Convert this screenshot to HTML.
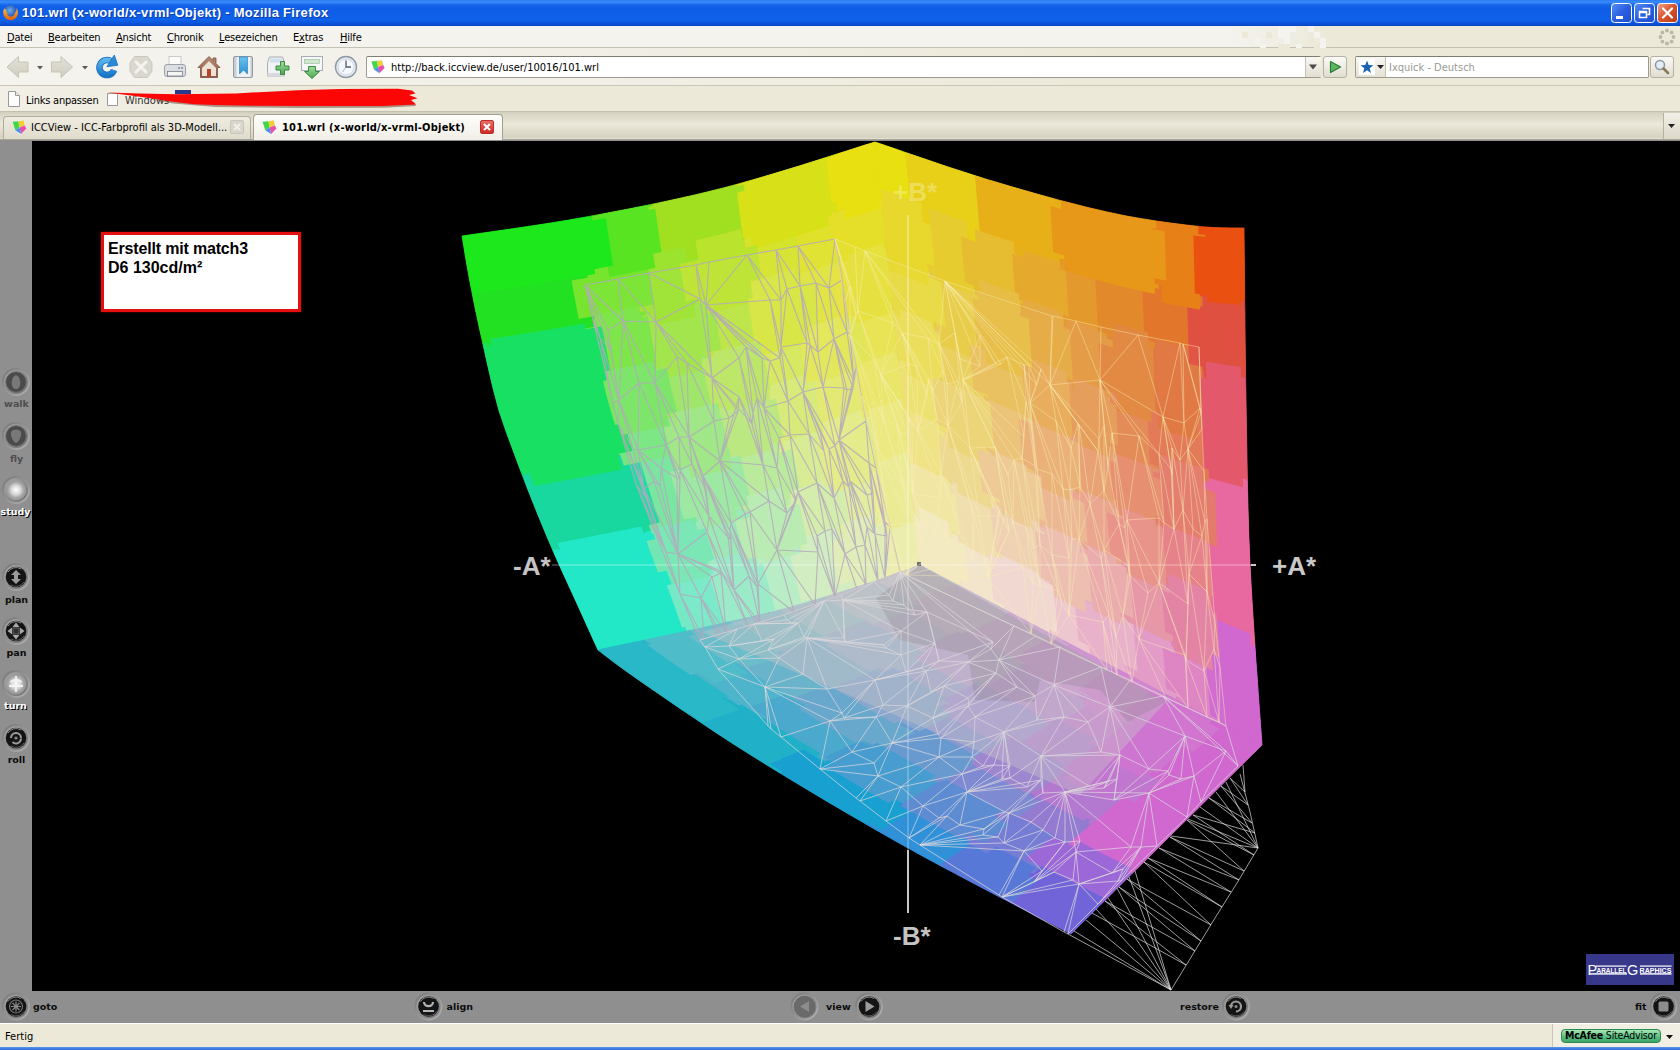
<!DOCTYPE html>
<html lang="de"><head><meta charset="utf-8"><title>101.wrl (x-world/x-vrml-Objekt) - Mozilla Firefox</title>
<style>
html,body{margin:0;padding:0;}
body{width:1680px;height:1050px;overflow:hidden;position:relative;background:#ece9d8;font-family:"DejaVu Sans Condensed","DejaVu Sans","Liberation Sans",sans-serif;font-size:11px;color:#000;}
.abs{position:absolute;}
#titlebar{left:0;top:0;width:1680px;height:26px;background:linear-gradient(#2a7af4 0px,#3a8bf8 2px,#1565ea 5px,#0e5de6 9px,#0f5fe8 16px,#1061ea 20px,#0c55dc 23px,#0845c4 26px);}
#titlebar .ttl{left:22px;top:5px;color:#fff;font-family:"Liberation Sans",sans-serif;font-weight:bold;font-size:13px;letter-spacing:0.3px;white-space:nowrap;text-shadow:1px 1px 0 #0a3aa8;}
#menubar{left:0;top:26px;width:1680px;height:22px;background:linear-gradient(90deg,#f4f3ee 0,#f4f3ee 1225px,#f0eee4 1280px,#ece9d8 1335px);border-bottom:1px solid #c5c2b4;box-sizing:border-box;}
#menubar span{position:absolute;top:5px;white-space:nowrap;letter-spacing:-0.2px;}
#menubar u{text-decoration:underline;}
#navbar{left:0;top:48px;width:1680px;height:38px;background:linear-gradient(90deg,#f4f3ee 0,#f1efe6 600px,#ece9d8 1150px);border-bottom:1px solid #c9c6b8;box-sizing:border-box;}
#bmbar{left:0;top:86px;width:1680px;height:26px;background:linear-gradient(90deg,#f1efe6 0,#ece9d8 430px);border-bottom:1px solid #c4c0b0;box-sizing:border-box;}
#tabbar{left:0;top:112px;width:1680px;height:28px;background:linear-gradient(#d2cebe 0,#dcd8c8 3px,#e4e0d0 8px,#ece9da 12px,#e6e2d2 16px,#dcd8c8 22px,#d6d2c0 26px,#efede2 27px);box-sizing:border-box;}
#content{left:0;top:140px;width:1680px;height:883px;background:#8f8f8f;}
#scene{left:32px;top:141px;width:1648px;height:850px;background:#000;}
#statusbar{left:0;top:1023px;width:1680px;height:24px;background:#ece9d8;border-top:1px solid #fff;box-sizing:border-box;}
#botborder{left:0;top:1047px;width:1680px;height:3px;background:linear-gradient(#5a98ec,#2c66d4);}
</style></head>
<body>
<div id="titlebar" class="abs"><svg class="abs" style="left:2px;top:4px" width="17" height="17" viewBox="0 0 17 17"><defs><radialGradient id="ffg" cx="0.45" cy="0.35" r="0.6"><stop offset="0" stop-color="#6ab0f0"/><stop offset="1" stop-color="#1a3c9c"/></radialGradient><linearGradient id="ffo" x1="0" y1="0" x2="0" y2="1"><stop offset="0" stop-color="#f8c040"/><stop offset="1" stop-color="#e05a10"/></linearGradient></defs><circle cx="8.5" cy="8.5" r="7" fill="url(#ffg)"/><path d="M2 4.500 C0.500 8 1 12.500 4.500 15 C8 17.300 13 16.300 15 12.500 C16.500 9.500 16 6 14.500 4 C14.800 6.500 14 8 12.800 8.800 C13 11 11 13 8.500 12.600 C6 12.300 4.800 10.500 5.500 8.500 C4.500 8 4 7 4.300 5.800 C3.500 5.500 2.800 5.200 2 4.500 Z" fill="url(#ffo)"/></svg><span class="abs ttl">101.wrl (x-world/x-vrml-Objekt) - Mozilla Firefox</span></div>
<div id="menubar" class="abs">
<span style="left:7px"><u>D</u>atei</span><span style="left:48px"><u>B</u>earbeiten</span><span style="left:116px"><u>A</u>nsicht</span><span style="left:167px"><u>C</u>hronik</span><span style="left:219px"><u>L</u>esezeichen</span><span style="left:293px">E<u>x</u>tras</span><span style="left:340px"><u>H</u>ilfe</span>
</div>
<svg class="abs" style="left:1230px;top:26px" width="120" height="22"><rect x="12" y="6" width="6" height="6" fill="#ece9d8"/><rect x="24" y="12" width="6" height="6" fill="#f4f3ee"/><rect x="30" y="18" width="6" height="6" fill="#f4f3ee"/><rect x="36" y="6" width="6" height="6" fill="#ece9d8"/><rect x="48" y="0" width="6" height="6" fill="#f4f3ee"/><rect x="48" y="6" width="6" height="6" fill="#f4f3ee"/><rect x="48" y="18" width="6" height="6" fill="#ece9d8"/><rect x="54" y="0" width="6" height="6" fill="#f4f3ee"/><rect x="54" y="6" width="6" height="6" fill="#f4f3ee"/><rect x="54" y="12" width="6" height="6" fill="#f4f3ee"/><rect x="54" y="18" width="6" height="6" fill="#ece9d8"/><rect x="60" y="0" width="6" height="6" fill="#f4f3ee"/><rect x="66" y="18" width="6" height="6" fill="#f4f3ee"/><rect x="78" y="0" width="6" height="6" fill="#f4f3ee"/><rect x="78" y="12" width="6" height="6" fill="#ece9d8"/><rect x="84" y="6" width="6" height="6" fill="#f4f3ee"/><rect x="84" y="18" width="6" height="6" fill="#ece9d8"/><rect x="90" y="12" width="6" height="6" fill="#f4f3ee"/><rect x="90" y="18" width="6" height="6" fill="#f4f3ee"/></svg>
<div id="navbar" class="abs"></div>
<div id="bmbar" class="abs"></div>
<div id="tabbar" class="abs"></div>
<div id="content" class="abs"></div>
<div id="scene" class="abs"></div>
<div id="statusbar" class="abs"><span class="abs" style="left:5px;top:6px">Fertig</span></div>
<div id="botborder" class="abs"></div>
<svg class="abs" style="left:0;top:0" width="1680" height="1050" viewBox="0 0 1680 1050">
<g stroke-width="0.8" stroke-linejoin="round">
<polygon points="584.0,274.2 592.9,272.5 601.9,270.8 610.8,269.1 619.8,267.4 628.7,265.6 637.7,263.8 639.1,272.3 640.5,280.7 641.9,289.2 643.4,297.6 644.8,306.0 646.3,314.4 637.5,316.2 628.7,318.0 619.9,319.8 611.0,321.5 602.2,323.2 593.4,324.9 591.7,316.4 590.1,308.0 588.5,299.5 587.0,291.1 585.5,282.6" fill="#77e42d" stroke="#77e42d"/>
<polygon points="637.7,263.8 646.6,262.0 655.5,260.2 664.5,258.3 673.4,256.4 682.3,254.5 691.2,252.5 692.4,260.9 693.7,269.3 695.1,277.8 696.4,286.2 697.7,294.6 699.1,303.0 690.3,305.0 681.5,307.0 672.7,308.9 663.9,310.8 655.1,312.6 646.3,314.4 644.8,306.0 643.4,297.6 641.9,289.2 640.5,280.7 639.1,272.3" fill="#9ce32f" stroke="#9ce32f"/>
<polygon points="691.2,252.5 700.0,250.4 708.9,248.3 717.8,246.1 726.6,243.9 735.4,241.6 744.2,239.2 745.4,247.7 746.6,256.1 747.8,264.5 749.0,273.0 750.2,281.4 751.4,289.8 742.8,292.2 734.1,294.5 725.3,296.7 716.6,298.9 707.9,301.0 699.1,303.0 697.7,294.6 696.4,286.2 695.1,277.8 693.7,269.3 692.4,260.9" fill="#bae32d" stroke="#bae32d"/>
<polygon points="744.2,239.2 752.3,237.0 760.4,234.7 768.5,232.3 776.5,229.9 784.6,227.4 792.6,225.0 793.7,233.4 794.8,241.9 795.9,250.3 797.0,258.8 798.1,267.2 799.2,275.6 791.3,278.1 783.3,280.5 775.4,282.9 767.4,285.3 759.4,287.6 751.4,289.8 750.2,281.4 749.0,273.0 747.8,264.5 746.6,256.1 745.4,247.7" fill="#d5e32b" stroke="#d5e32b"/>
<polygon points="792.6,225.0 800.0,222.7 807.4,220.4 814.7,218.1 822.1,215.8 829.4,213.5 836.8,211.1 837.8,219.6 838.8,228.0 839.8,236.5 840.8,245.0 841.8,253.4 842.8,261.9 835.6,264.2 828.3,266.5 821.0,268.8 813.8,271.1 806.5,273.4 799.2,275.6 798.1,267.2 797.0,258.8 795.9,250.3 794.8,241.9 793.7,233.4" fill="#dfe12a" stroke="#dfe12a"/>
<polygon points="836.8,211.1 844.1,208.8 851.5,206.4 858.8,204.0 866.1,201.7 873.5,199.3 880.9,197.0 881.8,205.4 882.7,213.9 883.6,222.4 884.5,230.8 885.4,239.3 886.3,247.8 879.0,250.1 871.8,252.4 864.5,254.8 857.3,257.2 850.0,259.5 842.8,261.9 841.8,253.4 840.8,245.0 839.8,236.5 838.8,228.0 837.8,219.6" fill="#e5df29" stroke="#e5df29"/>
<polygon points="593.4,324.9 602.2,323.2 611.0,321.5 619.9,319.8 628.7,318.0 637.5,316.2 646.3,314.4 647.9,323.6 649.5,332.7 651.2,341.8 652.8,351.0 654.5,360.1 656.3,369.2 647.6,371.0 638.9,372.7 630.3,374.5 621.6,376.2 612.9,378.0 604.2,379.7 602.3,370.6 600.4,361.5 598.6,352.3 596.8,343.2 595.1,334.0" fill="#78e442" stroke="#78e442"/>
<polygon points="646.3,314.4 655.1,312.6 663.9,310.8 672.7,308.9 681.5,307.0 690.3,305.0 699.1,303.0 700.6,312.2 702.0,321.3 703.5,330.4 705.0,339.5 706.5,348.6 708.1,357.7 699.5,359.7 690.9,361.7 682.2,363.6 673.6,365.5 664.9,367.3 656.3,369.2 654.5,360.1 652.8,351.0 651.2,341.8 649.5,332.7 647.9,323.6" fill="#9de444" stroke="#9de444"/>
<polygon points="699.1,303.0 707.9,301.0 716.6,298.9 725.3,296.7 734.1,294.5 742.8,292.2 751.4,289.8 752.8,299.0 754.1,308.1 755.4,317.2 756.8,326.3 758.2,335.4 759.6,344.5 751.1,346.9 742.5,349.2 733.9,351.4 725.4,353.6 716.8,355.7 708.1,357.7 706.5,348.6 705.0,339.5 703.5,330.4 702.0,321.3 700.6,312.2" fill="#bbe542" stroke="#bbe542"/>
<polygon points="751.4,289.8 759.4,287.6 767.4,285.3 775.4,282.9 783.3,280.5 791.3,278.1 799.2,275.6 800.4,284.8 801.6,293.9 802.8,303.1 804.1,312.2 805.3,321.3 806.6,330.4 798.8,332.9 791.0,335.3 783.1,337.7 775.3,340.0 767.5,342.3 759.6,344.5 758.2,335.4 756.8,326.3 755.4,317.2 754.1,308.1 752.8,299.0" fill="#d6e53e" stroke="#d6e53e"/>
<polygon points="799.2,275.6 806.5,273.4 813.8,271.1 821.0,268.8 828.3,266.5 835.6,264.2 842.8,261.9 843.9,271.0 845.0,280.2 846.1,289.3 847.2,298.5 848.3,307.7 849.4,316.8 842.3,319.1 835.2,321.4 828.0,323.7 820.9,326.0 813.7,328.2 806.6,330.4 805.3,321.3 804.1,312.2 802.8,303.1 801.6,293.9 800.4,284.8" fill="#e0e33c" stroke="#e0e33c"/>
<polygon points="842.8,261.9 850.0,259.5 857.3,257.2 864.5,254.8 871.8,252.4 879.0,250.1 886.3,247.8 887.2,256.9 888.2,266.1 889.2,275.2 890.2,284.4 891.1,293.6 892.1,302.7 885.0,305.1 877.9,307.4 870.8,309.8 863.6,312.1 856.5,314.5 849.4,316.8 848.3,307.7 847.2,298.5 846.1,289.3 845.0,280.2 843.9,271.0" fill="#e6e13b" stroke="#e6e13b"/>
<polygon points="604.2,379.7 612.9,378.0 621.6,376.2 630.3,374.5 638.9,372.7 647.6,371.0 656.3,369.2 658.0,377.5 659.9,385.8 661.9,394.1 664.0,402.4 666.2,410.6 668.4,418.8 660.0,420.6 651.6,422.3 643.1,424.1 634.7,425.8 626.3,427.5 617.8,429.2 615.4,421.0 612.9,412.8 610.5,404.6 608.2,396.4 606.1,388.0" fill="#77e562" stroke="#77e562"/>
<polygon points="656.3,369.2 664.9,367.3 673.6,365.5 682.2,363.6 690.9,361.7 699.5,359.7 708.1,357.7 709.7,366.1 711.4,374.5 713.1,382.8 715.0,391.0 716.9,399.3 718.8,407.6 710.4,409.5 702.0,411.4 693.6,413.3 685.2,415.2 676.8,417.0 668.4,418.8 666.2,410.6 664.0,402.4 661.9,394.1 659.9,385.8 658.0,377.5" fill="#9be564" stroke="#9be564"/>
<polygon points="708.1,357.7 716.8,355.7 725.4,353.6 733.9,351.4 742.5,349.2 751.1,346.9 759.6,344.5 761.0,352.9 762.4,361.3 764.0,369.6 765.6,378.0 767.2,386.3 768.8,394.6 760.5,396.9 752.2,399.2 743.9,401.3 735.5,403.5 727.2,405.5 718.8,407.6 716.9,399.3 715.0,391.0 713.1,382.8 711.4,374.5 709.7,366.1" fill="#bae660" stroke="#bae660"/>
<polygon points="759.6,344.5 767.5,342.3 775.3,340.0 783.1,337.7 791.0,335.3 798.8,332.9 806.6,330.4 807.8,338.9 809.0,347.3 810.3,355.6 811.7,364.0 813.1,372.4 814.4,380.7 806.9,383.1 799.3,385.5 791.7,387.8 784.1,390.1 776.4,392.4 768.8,394.6 767.2,386.3 765.6,378.0 764.0,369.6 762.4,361.3 761.0,352.9" fill="#d5e759" stroke="#d5e759"/>
<polygon points="806.6,330.4 813.7,328.2 820.9,326.0 828.0,323.7 835.2,321.4 842.3,319.1 849.4,316.8 850.5,325.3 851.5,333.7 852.7,342.1 853.8,350.6 854.9,359.0 856.1,367.4 849.1,369.7 842.2,371.9 835.3,374.2 828.3,376.4 821.4,378.6 814.4,380.7 813.1,372.4 811.7,364.0 810.3,355.6 809.0,347.3 807.8,338.9" fill="#e1e654" stroke="#e1e654"/>
<polygon points="849.4,316.8 856.5,314.5 863.6,312.1 870.8,309.8 877.9,307.4 885.0,305.1 892.1,302.7 893.0,311.2 893.9,319.7 894.8,328.1 895.7,336.6 896.6,345.0 897.5,353.5 890.6,355.8 883.7,358.1 876.8,360.4 869.9,362.8 863.0,365.1 856.1,367.4 854.9,359.0 853.8,350.6 852.7,342.1 851.5,333.7 850.5,325.3" fill="#e8e450" stroke="#e8e450"/>
<polygon points="617.8,429.2 626.3,427.5 634.7,425.8 643.1,424.1 651.6,422.3 660.0,420.6 668.4,418.8 670.6,427.0 672.7,435.3 675.0,443.5 677.2,451.7 679.4,459.9 681.7,468.0 673.6,469.8 665.4,471.5 657.3,473.2 649.2,474.9 641.0,476.6 632.9,478.3 630.3,470.1 627.7,462.0 625.2,453.8 622.7,445.6 620.3,437.4" fill="#76e57f" stroke="#76e57f"/>
<polygon points="668.4,418.8 676.8,417.0 685.2,415.2 693.6,413.3 702.0,411.4 710.4,409.5 718.8,407.6 720.7,415.8 722.6,424.1 724.5,432.3 726.5,440.6 728.4,448.8 730.4,457.1 722.3,459.0 714.2,460.9 706.1,462.7 698.0,464.5 689.8,466.3 681.7,468.0 679.4,459.9 677.2,451.7 675.0,443.5 672.7,435.3 670.6,427.0" fill="#9ae681" stroke="#9ae681"/>
<polygon points="718.8,407.6 727.2,405.5 735.5,403.5 743.9,401.3 752.2,399.2 760.5,396.9 768.8,394.6 770.4,402.9 772.0,411.2 773.7,419.5 775.3,427.8 777.0,436.1 778.7,444.4 770.7,446.7 762.6,448.9 754.6,451.0 746.5,453.1 738.5,455.1 730.4,457.1 728.4,448.8 726.5,440.6 724.5,432.3 722.6,424.1 720.7,415.8" fill="#b9e77b" stroke="#b9e77b"/>
<polygon points="768.8,394.6 776.4,392.4 784.1,390.1 791.7,387.8 799.3,385.5 806.9,383.1 814.4,380.7 815.8,389.1 817.2,397.5 818.5,405.8 819.9,414.2 821.3,422.5 822.7,430.9 815.4,433.2 808.1,435.5 800.7,437.8 793.4,440.0 786.0,442.2 778.7,444.4 777.0,436.1 775.3,427.8 773.7,419.5 772.0,411.2 770.4,402.9" fill="#d5e973" stroke="#d5e973"/>
<polygon points="814.4,380.7 821.4,378.6 828.3,376.4 835.3,374.2 842.2,371.9 849.1,369.7 856.1,367.4 857.2,375.8 858.3,384.2 859.5,392.7 860.6,401.1 861.8,409.5 862.9,417.9 856.2,420.1 849.6,422.3 842.9,424.5 836.2,426.6 829.4,428.8 822.7,430.9 821.3,422.5 819.9,414.2 818.5,405.8 817.2,397.5 815.8,389.1" fill="#e2e86c" stroke="#e2e86c"/>
<polygon points="856.1,367.4 863.0,365.1 869.9,362.8 876.8,360.4 883.7,358.1 890.6,355.8 897.5,353.5 898.4,362.0 899.3,370.4 900.2,378.9 901.1,387.3 902.0,395.8 902.9,404.3 896.2,406.5 889.6,408.8 882.9,411.1 876.3,413.4 869.6,415.6 862.9,417.9 861.8,409.5 860.6,401.1 859.5,392.7 858.3,384.2 857.2,375.8" fill="#e9e665" stroke="#e9e665"/>
<polygon points="632.9,478.3 641.0,476.6 649.2,474.9 657.3,473.2 665.4,471.5 673.6,469.8 681.7,468.0 684.2,476.9 686.7,485.8 689.2,494.6 691.8,503.4 694.4,512.2 697.0,521.1 689.2,522.7 681.4,524.4 673.6,526.1 665.8,527.7 658.0,529.4 650.2,531.0 647.2,522.2 644.3,513.5 641.4,504.7 638.5,495.9 635.7,487.1" fill="#74e59b" stroke="#74e59b"/>
<polygon points="681.7,468.0 689.8,466.3 698.0,464.5 706.1,462.7 714.2,460.9 722.3,459.0 730.4,457.1 732.6,466.0 734.7,474.9 736.9,483.8 739.1,492.7 741.4,501.5 743.6,510.4 735.9,512.3 728.1,514.1 720.3,515.9 712.6,517.6 704.8,519.3 697.0,521.1 694.4,512.2 691.8,503.4 689.2,494.6 686.7,485.8 684.2,476.9" fill="#98e79d" stroke="#98e79d"/>
<polygon points="730.4,457.1 738.5,455.1 746.5,453.1 754.6,451.0 762.6,448.9 770.7,446.7 778.7,444.4 780.5,453.4 782.3,462.3 784.2,471.3 786.1,480.2 788.0,489.2 789.9,498.1 782.2,500.3 774.5,502.5 766.8,504.5 759.1,506.6 751.4,508.5 743.6,510.4 741.4,501.5 739.1,492.7 736.9,483.8 734.7,474.9 732.6,466.0" fill="#b7e997" stroke="#b7e997"/>
<polygon points="778.7,444.4 786.0,442.2 793.4,440.0 800.7,437.8 808.1,435.5 815.4,433.2 822.7,430.9 824.3,439.9 825.8,449.0 827.3,458.0 828.9,467.0 830.5,476.1 832.0,485.1 825.0,487.3 818.0,489.5 811.0,491.8 804.0,493.9 796.9,496.1 789.9,498.1 788.0,489.2 786.1,480.2 784.2,471.3 782.3,462.3 780.5,453.4" fill="#d5eb8f" stroke="#d5eb8f"/>
<polygon points="822.7,430.9 829.4,428.8 836.2,426.6 842.9,424.5 849.6,422.3 856.2,420.1 862.9,417.9 864.2,427.0 865.4,436.1 866.7,445.2 868.0,454.3 869.2,463.4 870.5,472.5 864.1,474.7 857.7,476.8 851.3,478.9 844.9,481.0 838.5,483.0 832.0,485.1 830.5,476.1 828.9,467.0 827.3,458.0 825.8,449.0 824.3,439.9" fill="#e2ea85" stroke="#e2ea85"/>
<polygon points="862.9,417.9 869.6,415.6 876.3,413.4 882.9,411.1 889.6,408.8 896.2,406.5 902.9,404.3 903.9,413.4 904.8,422.6 905.8,431.8 906.8,440.9 907.8,450.1 908.8,459.3 902.4,461.4 896.0,463.7 889.6,465.9 883.3,468.1 876.9,470.3 870.5,472.5 869.2,463.4 868.0,454.3 866.7,445.2 865.4,436.1 864.2,427.0" fill="#ebe97b" stroke="#ebe97b"/>
<polygon points="650.2,531.0 658.0,529.4 665.8,527.7 673.6,526.1 681.4,524.4 689.2,522.7 697.0,521.1 699.4,529.2 701.9,537.3 704.5,545.3 707.0,553.4 709.6,561.5 712.1,569.5 704.7,571.2 697.2,572.8 689.8,574.4 682.3,576.0 674.9,577.6 667.5,579.1 664.6,571.1 661.6,563.1 658.7,555.1 655.8,547.1 653.0,539.1" fill="#74e6b3" stroke="#74e6b3"/>
<polygon points="697.0,521.1 704.8,519.3 712.6,517.6 720.3,515.9 728.1,514.1 735.9,512.3 743.6,510.4 745.7,518.6 747.9,526.8 750.1,534.9 752.3,543.0 754.4,551.2 756.6,559.3 749.2,561.1 741.8,562.9 734.4,564.6 727.0,566.2 719.5,567.9 712.1,569.5 709.6,561.5 707.0,553.4 704.5,545.3 701.9,537.3 699.4,529.2" fill="#97e8b4" stroke="#97e8b4"/>
<polygon points="743.6,510.4 751.4,508.5 759.1,506.6 766.8,504.5 774.5,502.5 782.2,500.3 789.9,498.1 791.6,506.4 793.4,514.6 795.3,522.9 797.1,531.1 798.9,539.3 800.7,547.5 793.4,549.6 786.1,551.7 778.8,553.7 771.4,555.6 764.0,557.5 756.6,559.3 754.4,551.2 752.3,543.0 750.1,534.9 747.9,526.8 745.7,518.6" fill="#b6eaaf" stroke="#b6eaaf"/>
<polygon points="789.9,498.1 796.9,496.1 804.0,493.9 811.0,491.8 818.0,489.5 825.0,487.3 832.0,485.1 833.5,493.4 835.0,501.7 836.5,510.0 838.0,518.3 839.5,526.6 841.0,535.0 834.3,537.1 827.6,539.2 820.9,541.4 814.2,543.5 807.5,545.5 800.7,547.5 798.9,539.3 797.1,531.1 795.3,522.9 793.4,514.6 791.6,506.4" fill="#d3eca8" stroke="#d3eca8"/>
<polygon points="832.0,485.1 838.5,483.0 844.9,481.0 851.3,478.9 857.7,476.8 864.1,474.7 870.5,472.5 871.7,480.9 872.9,489.3 874.1,497.7 875.3,506.1 876.5,514.5 877.7,522.9 871.6,525.0 865.5,527.0 859.4,529.1 853.3,531.0 847.1,533.0 841.0,535.0 839.5,526.6 838.0,518.3 836.5,510.0 835.0,501.7 833.5,493.4" fill="#e2ec9e" stroke="#e2ec9e"/>
<polygon points="870.5,472.5 876.9,470.3 883.3,468.1 889.6,465.9 896.0,463.7 902.4,461.4 908.8,459.3 909.7,467.7 910.5,476.2 911.5,484.6 912.4,493.1 913.2,501.6 914.1,510.0 908.1,512.1 902.0,514.3 895.9,516.5 889.9,518.6 883.8,520.8 877.7,522.9 876.5,514.5 875.3,506.1 874.1,497.7 872.9,489.3 871.7,480.9" fill="#eceb92" stroke="#eceb92"/>
<polygon points="667.5,579.1 674.9,577.6 682.3,576.0 689.8,574.4 697.2,572.8 704.7,571.2 712.1,569.5 714.8,578.3 717.6,587.1 720.3,595.8 723.0,604.6 725.7,613.3 728.4,622.1 721.4,623.7 714.3,625.2 707.3,626.7 700.2,628.3 693.1,629.8 686.1,631.3 683.0,622.6 679.9,613.9 676.8,605.2 673.7,596.5 670.6,587.8" fill="#75e8c6" stroke="#75e8c6"/>
<polygon points="712.1,569.5 719.5,567.9 727.0,566.2 734.4,564.6 741.8,562.9 749.2,561.1 756.6,559.3 759.0,568.2 761.3,577.0 763.7,585.8 766.0,594.7 768.3,603.5 770.7,612.3 763.7,614.0 756.6,615.7 749.6,617.3 742.5,618.9 735.5,620.5 728.4,622.1 725.7,613.3 723.0,604.6 720.3,595.8 717.6,587.1 714.8,578.3" fill="#97eac6" stroke="#97eac6"/>
<polygon points="756.6,559.3 764.0,557.5 771.4,555.6 778.8,553.7 786.1,551.7 793.4,549.6 800.7,547.5 802.7,556.4 804.7,565.4 806.6,574.3 808.6,583.2 810.6,592.1 812.5,601.0 805.6,603.1 798.6,605.0 791.7,606.9 784.7,608.8 777.7,610.6 770.7,612.3 768.3,603.5 766.0,594.7 763.7,585.8 761.3,577.0 759.0,568.2" fill="#b5ecc3" stroke="#b5ecc3"/>
<polygon points="800.7,547.5 807.5,545.5 814.2,543.5 820.9,541.4 827.6,539.2 834.3,537.1 841.0,535.0 842.6,544.0 844.2,553.0 845.8,562.0 847.5,571.0 849.1,580.0 850.7,589.0 844.3,591.0 838.0,593.1 831.6,595.1 825.3,597.1 818.9,599.1 812.5,601.0 810.6,592.1 808.6,583.2 806.6,574.3 804.7,565.4 802.7,556.4" fill="#d0edbe" stroke="#d0edbe"/>
<polygon points="841.0,535.0 847.1,533.0 853.3,531.0 859.4,529.1 865.5,527.0 871.6,525.0 877.7,522.9 879.0,532.0 880.3,541.1 881.6,550.2 882.9,559.3 884.2,568.4 885.5,577.5 879.7,579.5 873.9,581.4 868.1,583.4 862.3,585.3 856.5,587.1 850.7,589.0 849.1,580.0 847.5,571.0 845.8,562.0 844.2,553.0 842.6,544.0" fill="#dfedb5" stroke="#dfedb5"/>
<polygon points="877.7,522.9 883.8,520.8 889.9,518.6 895.9,516.5 902.0,514.3 908.1,512.1 914.1,510.0 915.1,519.2 916.1,528.3 917.1,537.5 918.0,546.7 919.0,555.8 920.0,565.0 914.2,567.1 908.5,569.2 902.8,571.3 897.0,573.4 891.3,575.4 885.5,577.5 884.2,568.4 882.9,559.3 881.6,550.2 880.3,541.1 879.0,532.0" fill="#ebedab" stroke="#ebedab"/>
<polygon points="471.9,292.0 490.6,289.2 509.3,286.3 528.0,283.5 546.7,280.5 565.3,277.4 584.0,274.2 585.5,282.6 587.0,291.1 588.5,299.5 590.1,308.0 591.7,316.4 593.4,324.9 575.0,328.2 556.6,331.4 538.1,334.5 519.7,337.5 501.2,340.4 482.8,343.4 480.9,334.9 479.0,326.3 477.2,317.8 475.3,309.2 473.6,300.6" fill="#22e022" stroke="#22e022"/>
<polygon points="482.8,343.4 501.2,340.4 519.7,337.5 538.1,334.5 556.6,331.4 575.0,328.2 593.4,324.9 597.6,347.0 602.0,369.2 606.9,391.2 612.9,412.8 619.3,434.3 625.8,455.8 608.6,459.2 591.4,462.5 574.1,465.7 556.9,468.9 539.6,472.1 522.4,475.3 514.3,453.8 506.3,432.2 498.9,410.5 493.0,388.3 487.8,365.9" fill="#18e062" stroke="#18e062"/>
<polygon points="522.4,475.3 539.6,472.1 556.9,468.9 574.1,465.7 591.4,462.5 608.6,459.2 625.8,455.8 629.8,468.4 633.7,481.0 637.8,493.5 641.8,506.0 646.0,518.5 650.2,531.0 634.0,534.3 617.8,537.6 601.5,540.8 585.3,543.9 569.0,547.1 552.8,550.3 547.5,537.9 542.3,525.4 537.2,513.0 532.2,500.4 527.2,487.9" fill="#18d8a0" stroke="#18d8a0"/>
<polygon points="552.8,550.3 569.0,547.1 585.3,543.9 601.5,540.8 617.8,537.6 634.0,534.3 650.2,531.0 656.1,547.8 662.1,564.4 668.2,581.1 674.1,597.9 680.1,614.6 686.1,631.3 671.4,634.4 656.7,637.5 642.0,640.7 627.4,643.8 612.7,646.9 598.0,650.0 590.5,633.4 583.0,616.8 575.4,600.1 567.8,583.6 560.2,567.0" fill="#22e8c8" stroke="#22e8c8"/>
<polygon points="462.0,236.0 483.7,232.9 505.4,229.8 527.1,226.6 548.8,223.3 570.4,219.8 592.0,215.9 593.4,225.1 594.7,234.3 596.1,243.5 597.5,252.7 599.0,261.9 600.5,271.1 579.1,275.0 557.7,278.7 536.3,282.1 514.8,285.5 493.3,288.7 471.9,292.0 470.1,282.7 468.4,273.4 466.7,264.1 465.1,254.7 463.6,245.4" fill="#1ce81c" stroke="#1ce81c"/>
<polygon points="592.0,215.9 602.1,214.0 612.1,212.1 622.2,210.2 632.3,208.2 642.3,206.2 652.4,204.2 653.7,213.3 655.0,222.5 656.3,231.7 657.6,240.9 658.9,250.0 660.3,259.2 650.4,261.3 640.4,263.3 630.5,265.3 620.5,267.2 610.5,269.2 600.5,271.1 599.0,261.9 597.5,252.7 596.1,243.5 594.7,234.3 593.4,225.1" fill="#58e420" stroke="#58e420"/>
<polygon points="652.4,204.2 666.6,201.2 680.7,198.1 694.9,194.9 709.0,191.5 723.1,188.0 737.1,184.3 738.2,193.5 739.4,202.6 740.6,211.8 741.8,220.9 743.0,230.1 744.2,239.2 730.3,243.0 716.4,246.5 702.4,249.8 688.4,253.1 674.4,256.2 660.3,259.2 658.9,250.0 657.6,240.9 656.3,231.7 655.0,222.5 653.7,213.3" fill="#a0e020" stroke="#a0e020"/>
<polygon points="737.1,184.3 752.7,179.9 768.3,175.3 783.9,170.6 799.5,165.9 815.0,161.0 830.5,156.1 831.5,165.3 832.6,174.4 833.6,183.6 834.7,192.8 835.7,201.9 836.8,211.1 821.4,216.0 806.0,220.8 790.6,225.6 775.2,230.3 759.7,234.8 744.2,239.2 743.0,230.1 741.8,220.9 740.6,211.8 739.4,202.6 738.2,193.5" fill="#d8e018" stroke="#d8e018"/>
<polygon points="830.5,156.1 837.9,153.7 845.3,151.4 852.7,149.0 860.2,146.6 867.6,144.3 875.0,142.0 876.0,151.2 877.0,160.3 877.9,169.5 878.9,178.7 879.9,187.8 880.9,197.0 873.5,199.3 866.1,201.7 858.8,204.0 851.5,206.4 844.1,208.8 836.8,211.1 835.7,201.9 834.7,192.8 833.6,183.6 832.6,174.4 831.5,165.3" fill="#e8e010" stroke="#e8e010"/>
<polygon points="614.3,439.5 629.4,436.4 644.4,433.3 659.5,430.2 674.6,427.0 676.6,434.9 678.7,442.7 680.8,450.5 682.9,458.3 668.2,461.4 653.5,464.5 638.7,467.6 623.9,470.6 621.5,462.8 619.1,455.0 616.6,447.2" fill="#76e57f"/>
<polygon points="623.7,423.2 633.1,421.3 642.4,419.4 651.8,417.5 661.1,415.5 665.0,429.8 668.8,444.1 672.8,458.4 676.8,472.6 667.8,474.5 658.8,476.4 649.8,478.3 640.8,480.1 636.4,466.0 632.1,451.7 627.9,437.5" fill="#76e57f"/>
<polygon points="789.5,233.4 801.8,229.6 814.1,225.7 826.3,221.8 838.6,217.9 839.8,227.9 841.0,237.9 842.1,247.9 843.3,257.8 831.2,261.7 819.0,265.6 806.9,269.4 794.7,273.2 793.4,263.2 792.1,253.3 790.8,243.3" fill="#dfe12a"/>
<polygon points="798.4,208.4 806.7,205.8 815.1,203.2 823.4,200.6 831.7,197.9 834.0,217.3 836.3,236.8 838.6,256.2 841.0,275.6 832.8,278.2 824.6,280.8 816.4,283.4 808.2,285.9 805.7,266.6 803.2,247.2 800.8,227.8" fill="#dfe12a"/>
<polygon points="850.5,325.3 861.1,321.8 871.7,318.2 882.4,314.7 893.0,311.2 894.0,320.7 895.0,330.2 896.0,339.6 897.0,349.1 886.6,352.6 876.3,356.1 865.9,359.6 855.5,363.0 854.2,353.6 852.9,344.2 851.7,334.7" fill="#e8e450"/>
<polygon points="857.7,313.0 865.4,310.4 873.1,307.9 880.8,305.3 888.6,302.7 890.2,318.1 891.9,333.4 893.6,348.7 895.2,364.0 887.8,366.5 880.3,369.0 872.9,371.5 865.4,374.0 863.4,358.8 861.5,343.5 859.5,328.3" fill="#e8e450"/>
<polygon points="748.9,348.3 764.4,344.0 779.8,339.5 795.1,334.9 810.4,330.1 812.1,341.8 813.8,353.4 815.7,365.0 817.5,376.5 802.6,381.2 787.7,385.8 772.7,390.2 757.7,394.5 755.4,383.0 753.1,371.5 750.9,359.9" fill="#d5e759"/>
<polygon points="767.7,340.4 775.7,338.1 783.8,335.6 791.8,333.2 799.8,330.7 801.9,344.7 804.1,358.6 806.4,372.5 808.7,386.3 800.9,388.8 793.2,391.2 785.4,393.5 777.6,395.8 775.0,382.0 772.4,368.2 769.9,354.4" fill="#d5e759"/>
<polygon points="757.3,566.8 768.8,563.9 780.3,560.9 791.7,557.8 803.0,554.5 805.5,565.7 807.9,576.9 810.4,588.0 812.8,599.2 802.0,602.4 791.0,605.4 780.1,608.3 769.1,611.0 766.2,600.0 763.2,588.9 760.3,577.8" fill="#b5ecc3"/>
<polygon points="760.1,555.6 769.3,553.2 778.5,550.8 787.7,548.3 796.8,545.7 800.0,559.8 803.1,573.8 806.2,587.9 809.4,602.0 800.7,604.4 792.1,606.8 783.4,609.1 774.7,611.4 771.0,597.4 767.4,583.5 763.7,569.5" fill="#b5ecc3"/>
<polygon points="695.6,522.5 709.8,519.4 723.9,516.2 737.9,512.9 752.0,509.5 754.8,520.5 757.6,531.6 760.5,542.6 763.4,553.6 749.9,556.9 736.4,560.1 722.9,563.2 709.3,566.2 705.9,555.2 702.4,544.3 699.0,533.4" fill="#97e8b4"/>
<polygon points="694.6,506.8 705.4,504.4 716.3,502.0 727.1,499.5 737.9,496.9 742.7,515.6 747.7,534.2 752.7,552.8 757.7,571.4 747.6,573.8 737.5,576.1 727.4,578.4 717.3,580.6 711.5,562.2 705.7,543.8 700.1,525.3" fill="#97e8b4"/>
<polygon points="648.2,207.0 673.8,201.6 699.4,195.9 724.8,189.6 750.1,182.7 751.6,195.0 753.1,207.4 754.7,219.7 756.3,232.0 731.3,238.9 706.1,245.2 680.8,251.0 655.4,256.4 653.5,244.1 651.7,231.8 650.0,219.4" fill="#a0e020"/>
<polygon points="660.2,202.5 678.0,198.7 695.9,194.7 713.6,190.4 731.3,185.9 733.5,203.3 735.8,220.7 738.1,238.1 740.6,255.5 723.1,260.0 705.6,264.3 688.0,268.4 670.4,272.2 667.7,254.9 665.1,237.4 662.6,220.0" fill="#a0e020"/>
<polygon points="797.2,283.7 809.7,279.8 822.3,275.9 834.8,271.9 847.2,267.9 848.6,279.1 849.9,290.3 851.2,301.4 852.6,312.6 840.3,316.6 827.9,320.6 815.6,324.5 803.2,328.3 801.7,317.2 800.2,306.0 798.7,294.9" fill="#e0e33c"/>
<polygon points="801.6,273.5 811.7,270.4 821.8,267.2 831.9,264.0 842.0,260.7 843.9,277.0 845.9,293.2 847.9,309.5 849.9,325.7 840.0,328.9 830.1,332.1 820.2,335.2 810.3,338.3 808.1,322.1 805.9,305.9 803.8,289.7" fill="#e0e33c"/>
<polygon points="696.2,307.3 712.3,303.5 728.4,299.5 744.4,295.3 760.4,290.9 762.1,302.7 763.8,314.4 765.5,326.2 767.3,338.0 751.5,342.4 735.7,346.6 719.9,350.6 704.0,354.4 702.0,342.6 700.0,330.8 698.1,319.1" fill="#bbe542"/>
<polygon points="706.3,292.5 716.2,290.1 726.1,287.7 736.1,285.1 745.9,282.5 748.7,301.5 751.5,320.5 754.4,339.6 757.6,358.5 747.9,361.1 738.3,363.7 728.6,366.1 718.9,368.5 715.5,349.6 712.3,330.6 709.3,311.6" fill="#bbe542"/>
<polygon points="742.8,248.4 756.1,244.7 769.4,240.8 782.7,236.8 795.9,232.7 797.0,241.4 798.1,250.1 799.2,258.7 800.4,267.4 787.3,271.4 774.1,275.4 761.0,279.2 747.8,283.0 746.5,274.3 745.2,265.7 744.0,257.0" fill="#d5e32b"/>
<polygon points="745.0,227.6 756.2,224.5 767.3,221.2 778.5,217.9 789.6,214.5 792.0,233.4 794.4,252.3 796.9,271.2 799.4,290.1 788.5,293.5 777.6,296.8 766.6,300.0 755.7,303.2 752.9,284.3 750.2,265.4 747.5,246.5" fill="#d5e32b"/>
<polygon points="831.0,493.9 844.1,489.8 857.2,485.5 870.2,481.2 883.2,476.7 884.4,485.9 885.6,495.1 886.9,504.3 888.1,513.4 875.5,517.8 863.0,522.1 850.3,526.1 837.7,530.2 836.0,521.1 834.3,512.1 832.7,503.0" fill="#e2ec9e"/>
<polygon points="835.2,483.5 843.8,480.7 852.5,478.0 861.1,475.1 869.6,472.2 872.0,488.5 874.3,504.8 876.7,521.1 879.0,537.4 870.9,540.1 862.8,542.8 854.7,545.5 846.6,548.1 843.7,531.9 840.9,515.8 838.0,499.6" fill="#e2ec9e"/>
<polygon points="653.4,372.2 669.7,368.8 686.0,365.3 702.2,361.6 718.4,357.8 720.3,367.8 722.3,377.8 724.5,387.8 726.7,397.7 710.9,401.5 695.0,405.2 679.1,408.6 663.2,412.0 660.5,402.2 657.9,392.3 655.6,382.3" fill="#9be564"/>
<polygon points="661.0,365.5 672.0,363.1 683.1,360.7 694.1,358.3 705.1,355.7 708.1,371.6 711.5,387.3 715.1,403.0 718.7,418.6 708.1,421.1 697.5,423.5 686.9,425.8 676.2,428.2 672.2,412.6 668.1,397.0 664.3,381.3" fill="#9be564"/>
<polygon points="633.5,483.5 646.7,480.8 659.9,478.0 673.0,475.2 686.1,472.4 689.0,482.5 691.8,492.6 694.7,502.7 697.6,512.8 684.9,515.6 672.2,518.3 659.5,521.0 646.8,523.6 643.4,513.6 640.1,503.6 636.8,493.5" fill="#74e59b"/>
<polygon points="633.9,464.1 644.3,461.9 654.8,459.7 665.3,457.5 675.7,455.3 680.6,472.7 685.5,490.0 690.5,507.2 695.7,524.4 685.8,526.6 675.9,528.7 666.0,530.8 656.1,532.9 650.3,515.8 644.7,498.6 639.2,481.3" fill="#74e59b"/>
<polygon points="769.4,398.7 781.7,395.1 794.1,391.4 806.4,387.6 818.7,383.7 820.5,395.1 822.4,406.5 824.2,417.9 826.1,429.2 814.2,433.0 802.3,436.7 790.3,440.4 778.3,443.9 776.1,432.6 773.8,421.3 771.6,410.0" fill="#d5e973"/>
<polygon points="768.7,385.8 779.0,382.8 789.4,379.7 799.7,376.5 810.0,373.3 812.5,388.4 815.0,403.5 817.5,418.7 820.1,433.8 810.2,436.9 800.3,439.9 790.4,443.0 780.5,445.9 777.5,430.9 774.5,415.9 771.6,400.8" fill="#d5e973"/>
<polygon points="525.8,484.1 554.5,478.8 583.2,473.4 611.8,467.9 640.5,462.2 645.1,477.4 649.9,492.6 654.7,507.7 659.6,522.8 632.3,528.4 605.0,533.8 577.6,539.2 550.3,544.5 544.0,529.5 537.8,514.4 531.7,499.3" fill="#18d8a0"/>
<polygon points="527.4,472.2 550.7,467.9 573.9,463.6 597.1,459.3 620.3,454.8 626.4,474.3 632.7,493.7 639.2,513.1 645.8,532.4 624.0,536.9 602.1,541.2 580.3,545.4 558.5,549.7 550.4,530.5 542.6,511.1 534.9,491.7" fill="#18d8a0"/>
<polygon points="815.2,387.3 828.7,383.0 842.2,378.7 855.6,374.3 869.0,369.9 870.1,378.7 871.2,387.4 872.3,396.2 873.4,405.0 860.4,409.4 847.3,413.8 834.2,418.0 821.0,422.1 819.6,413.4 818.1,404.7 816.7,396.0" fill="#e2e86c"/>
<polygon points="813.5,373.6 822.6,370.7 831.7,367.9 840.7,365.0 849.8,362.0 852.2,379.1 854.5,396.2 856.9,413.3 859.4,430.4 850.7,433.3 842.1,436.1 833.4,438.8 824.7,441.6 821.9,424.6 819.0,407.6 816.2,390.6" fill="#e2e86c"/>
<polygon points="641.9,316.1 659.8,312.4 677.7,308.6 695.6,304.6 713.4,300.4 715.3,312.6 717.3,324.9 719.2,337.1 721.3,349.3 703.7,353.5 686.1,357.5 668.4,361.3 650.8,365.1 648.5,352.8 646.2,340.6 644.0,328.3" fill="#9de444"/>
<polygon points="651.0,302.2 660.6,300.2 670.2,298.1 679.7,296.1 689.3,293.9 692.4,313.0 695.5,332.0 698.7,351.0 702.2,369.9 692.9,372.1 683.6,374.1 674.2,376.2 664.9,378.2 661.1,359.2 657.7,340.2 654.3,321.2" fill="#9de444"/>
<polygon points="554.2,553.4 581.3,548.1 608.5,542.7 635.7,537.3 662.8,531.7 670.7,554.5 678.7,577.3 686.6,600.2 694.5,623.0 669.7,628.3 644.9,633.5 620.1,638.7 595.3,644.0 585.0,621.3 574.8,598.7 564.4,576.1" fill="#22e8c8"/>
<polygon points="557.5,543.0 578.4,538.9 599.4,534.8 620.3,530.7 641.2,526.5 650.7,553.1 660.5,579.6 670.2,606.1 679.8,632.6 661.0,636.6 642.1,640.6 623.3,644.6 604.5,648.6 592.7,622.2 580.9,595.8 569.0,569.5" fill="#22e8c8"/>
<polygon points="768.6,453.2 784.3,448.8 799.9,444.1 815.5,439.2 831.1,434.3 832.9,445.6 834.8,456.8 836.6,468.1 838.5,479.3 823.5,484.1 808.5,488.8 793.4,493.4 778.3,497.7 775.9,486.6 773.4,475.5 771.0,464.4" fill="#d5eb8f"/>
<polygon points="783.2,441.8 791.8,439.3 800.4,436.6 809.0,434.0 817.6,431.3 820.4,447.4 823.3,463.6 826.1,479.8 829.0,495.9 820.9,498.5 812.7,501.1 804.5,503.6 796.3,506.1 793.0,490.1 789.7,474.0 786.4,457.9" fill="#d5eb8f"/>
<polygon points="624.4,273.5 644.5,269.4 664.7,265.3 684.8,260.9 704.8,256.3 706.4,266.3 707.9,276.4 709.5,286.4 711.1,296.5 691.2,301.1 671.3,305.5 651.4,309.7 631.4,313.7 629.6,303.7 627.8,293.6 626.1,283.5" fill="#9ce32f"/>
<polygon points="643.3,255.9 653.7,253.8 664.1,251.6 674.6,249.4 684.9,247.1 687.6,264.5 690.3,281.9 693.1,299.3 695.9,316.7 685.7,319.0 675.5,321.2 665.3,323.4 655.1,325.5 652.0,308.1 649.0,290.8 646.1,273.4" fill="#9ce32f"/>
<polygon points="471.9,292.3 502.7,287.6 533.5,282.9 564.3,277.9 594.9,272.4 596.9,283.6 598.9,294.9 601.0,306.1 603.1,317.3 572.8,322.8 542.4,328.0 512.0,332.9 481.5,337.8 479.0,326.4 476.6,315.1 474.2,303.7" fill="#22e022"/>
<polygon points="474.2,280.8 500.7,276.8 527.2,272.8 553.7,268.6 580.1,264.1 583.1,281.3 586.2,298.4 589.4,315.5 592.7,332.7 566.8,337.3 540.8,341.7 514.8,346.0 488.8,350.2 485.0,332.9 481.2,315.5 477.6,298.2" fill="#22e022"/>
<polygon points="798.5,335.4 814.5,330.5 830.4,325.4 846.4,320.3 862.3,315.1 863.7,327.1 865.2,339.2 866.7,351.2 868.3,363.2 852.8,368.4 837.3,373.4 821.8,378.3 806.2,383.2 804.2,371.3 802.2,359.4 800.3,347.4" fill="#e1e654"/>
<polygon points="808.7,326.6 817.4,323.9 826.0,321.2 834.6,318.5 843.2,315.7 845.0,329.7 846.9,343.8 848.8,357.8 850.8,371.8 842.4,374.5 834.1,377.2 825.7,379.8 817.3,382.5 815.1,368.5 812.9,354.6 810.7,340.6" fill="#e1e654"/>
<polygon points="571.5,280.6 590.6,277.2 609.8,273.5 628.8,269.8 647.9,266.0 649.5,275.6 651.1,285.1 652.7,294.7 654.3,304.2 635.5,308.1 616.6,311.8 597.7,315.5 578.7,319.0 576.9,309.4 575.0,299.8 573.2,290.2" fill="#77e42d"/>
<polygon points="586.4,270.7 597.6,268.6 608.8,266.4 620.0,264.3 631.2,262.1 633.6,277.1 636.2,292.1 638.8,307.1 641.5,322.1 630.5,324.3 619.5,326.4 608.5,328.6 597.5,330.7 594.6,315.7 591.8,300.7 589.1,285.7" fill="#77e42d"/>
<polygon points="721.8,467.5 739.5,463.3 757.1,458.8 774.6,454.0 792.1,448.9 794.2,459.5 796.3,470.1 798.4,480.7 800.5,491.3 783.6,496.2 766.7,500.9 749.6,505.3 732.6,509.4 729.8,498.9 727.1,488.5 724.4,478.0" fill="#b7e997"/>
<polygon points="734.7,453.9 745.0,451.4 755.3,448.7 765.5,446.0 775.7,443.1 778.9,458.9 782.2,474.6 785.6,490.4 789.0,506.1 779.3,508.8 769.5,511.4 759.8,514.0 750.0,516.4 746.1,500.9 742.2,485.2 738.5,469.6" fill="#b7e997"/>
<polygon points="780.9,507.6 796.6,503.0 812.3,498.2 828.0,493.3 843.6,488.3 845.1,497.0 846.5,505.7 848.0,514.4 849.5,523.1 834.4,527.9 819.2,532.7 804.1,537.4 788.8,541.8 786.8,533.2 784.8,524.7 782.8,516.1" fill="#d3eca8"/>
<polygon points="790.6,491.0 800.4,488.0 810.1,485.0 819.9,482.0 829.6,478.9 832.2,494.0 835.0,509.2 837.7,524.3 840.5,539.4 831.3,542.3 822.1,545.2 812.9,548.1 803.7,550.9 800.4,535.9 797.1,521.0 793.8,506.0" fill="#d3eca8"/>
<polygon points="666.9,585.2 679.9,582.4 692.8,579.7 705.8,576.9 718.8,574.0 722.1,584.7 725.3,595.3 728.6,606.0 731.8,616.6 719.4,619.4 707.0,622.1 694.5,624.8 682.0,627.5 678.3,616.9 674.5,606.3 670.7,595.8" fill="#75e8c6"/>
<polygon points="664.9,564.8 674.0,562.9 683.1,560.9 692.2,559.0 701.3,557.0 706.6,573.6 711.9,590.2 717.2,606.8 722.4,623.4 713.9,625.3 705.4,627.1 696.9,629.0 688.3,630.8 682.5,614.3 676.6,597.8 670.8,581.3" fill="#75e8c6"/>
<polygon points="737.0,192.7 760.9,186.0 784.6,178.9 808.3,171.5 831.9,164.1 833.2,175.7 834.5,187.3 835.8,199.0 837.2,210.6 813.8,218.0 790.3,225.3 766.7,232.4 743.1,239.1 741.5,227.6 740.0,215.9 738.5,204.3" fill="#d8e018"/>
<polygon points="743.5,182.5 764.0,176.6 784.5,170.5 805.0,164.1 825.4,157.7 827.3,174.4 829.2,191.1 831.2,207.8 833.2,224.5 813.0,230.9 792.7,237.2 772.5,243.3 752.2,249.2 749.9,232.6 747.7,215.9 745.6,199.2" fill="#d8e018"/>
<polygon points="856.4,371.7 866.8,368.2 877.2,364.7 887.5,361.2 898.0,357.7 899.2,369.3 900.4,380.9 901.6,392.5 902.9,404.0 892.8,407.4 882.8,410.9 872.7,414.3 862.6,417.7 861.1,406.2 859.5,394.7 857.9,383.2" fill="#e9e665"/>
<polygon points="862.7,363.0 870.8,360.3 879.0,357.5 887.1,354.8 895.3,352.0 896.7,365.4 898.2,378.8 899.6,392.2 901.1,405.6 893.2,408.3 885.4,411.0 877.5,413.7 869.7,416.3 867.9,403.0 866.1,389.7 864.4,376.4" fill="#e9e665"/>
<polygon points="711.6,415.3 727.7,411.4 743.9,407.4 759.9,403.1 775.9,398.6 777.7,408.2 779.6,417.7 781.4,427.2 783.3,436.7 767.7,441.2 752.1,445.3 736.4,449.3 720.7,453.1 718.4,443.7 716.1,434.2 713.8,424.8" fill="#b9e77b"/>
<polygon points="723.4,395.9 732.3,393.8 741.1,391.5 749.9,389.2 758.7,386.8 761.9,402.5 765.0,418.2 768.2,433.9 771.5,449.5 763.1,451.8 754.6,454.0 746.2,456.2 737.7,458.3 734.1,442.8 730.5,427.2 726.9,411.6" fill="#b9e77b"/>
<polygon points="701.5,359.4 716.7,355.8 731.9,352.0 747.0,348.1 762.1,344.0 764.0,355.4 766.0,366.8 768.2,378.2 770.4,389.6 755.7,393.7 741.0,397.6 726.2,401.3 711.3,404.8 708.7,393.5 706.1,382.2 703.7,370.8" fill="#bae660"/>
<polygon points="713.7,352.2 724.7,349.6 735.6,346.8 746.5,343.9 757.4,341.0 759.8,355.8 762.5,370.6 765.4,385.3 768.3,400.1 757.8,403.0 747.2,405.8 736.6,408.5 726.0,411.1 722.7,396.5 719.4,381.8 716.4,367.1" fill="#bae660"/>
<polygon points="870.4,531.3 881.5,527.5 892.6,523.6 903.7,519.7 914.8,515.7 915.9,526.3 917.0,536.8 918.1,547.4 919.3,558.0 908.6,561.8 898.0,565.7 887.4,569.5 876.7,573.2 875.1,562.7 873.6,552.3 872.0,541.8" fill="#ebedab"/>
<polygon points="878.7,508.5 885.8,506.0 892.8,503.6 899.8,501.1 906.9,498.6 908.8,515.7 910.7,532.8 912.6,549.9 914.5,567.0 908.0,569.4 901.4,571.8 894.8,574.1 888.2,576.5 885.8,559.5 883.5,542.5 881.1,525.5" fill="#ebedab"/>
<polygon points="669.7,471.8 687.4,468.1 705.0,464.2 722.6,460.2 740.2,455.9 743.0,468.0 745.9,480.0 748.8,492.1 751.7,504.1 734.8,508.2 717.9,512.1 700.9,515.9 683.9,519.6 680.3,507.7 676.7,495.7 673.2,483.8" fill="#98e79d"/>
<polygon points="685.4,461.5 694.4,459.5 703.5,457.5 712.5,455.5 721.6,453.4 725.7,470.2 729.9,486.9 734.2,503.6 738.6,520.3 730.1,522.3 721.5,524.3 712.9,526.2 704.4,528.1 699.5,511.5 694.7,494.9 690.0,478.2" fill="#98e79d"/>
<polygon points="679.8,264.1 699.2,259.7 718.4,255.1 737.7,250.1 756.8,244.8 758.1,254.2 759.4,263.6 760.7,273.0 762.0,282.3 743.1,287.6 724.1,292.6 705.0,297.2 685.9,301.6 684.3,292.2 682.8,282.8 681.3,273.5" fill="#bae32d"/>
<polygon points="695.5,240.4 706.9,237.7 718.3,234.9 729.6,232.0 740.9,229.0 743.5,247.4 746.1,265.8 748.7,284.1 751.4,302.5 740.3,305.5 729.2,308.3 718.0,311.1 706.8,313.8 703.9,295.5 701.0,277.1 698.2,258.8" fill="#bae32d"/>
<polygon points="828.0,216.0 841.2,211.7 854.5,207.5 867.8,203.2 881.1,199.0 882.1,209.1 883.2,219.2 884.3,229.3 885.4,239.4 872.2,243.6 859.1,247.9 846.0,252.1 832.8,256.4 831.6,246.3 830.4,236.2 829.2,226.1" fill="#e5df29"/>
<polygon points="844.5,200.3 851.2,198.2 857.9,196.0 864.6,193.9 871.4,191.7 873.3,209.3 875.2,227.0 877.1,244.6 879.0,262.2 872.4,264.4 865.9,266.6 859.3,268.7 852.7,270.9 850.6,253.2 848.6,235.6 846.5,218.0" fill="#e5df29"/>
<polygon points="748.1,299.0 764.4,294.4 780.6,289.6 796.8,284.6 813.0,279.6 814.4,290.6 815.8,301.5 817.2,312.4 818.6,323.3 802.7,328.3 786.7,333.2 770.7,338.0 754.6,342.6 753.0,331.7 751.3,320.8 749.7,309.9" fill="#d6e53e"/>
<polygon points="751.0,281.5 761.8,278.4 772.7,275.2 783.5,271.9 794.3,268.6 796.8,287.3 799.2,305.9 801.8,324.4 804.4,343.0 793.9,346.3 783.4,349.5 772.8,352.6 762.2,355.7 759.2,337.2 756.4,318.6 753.7,300.0" fill="#d6e53e"/>
<polygon points="663.7,427.5 678.0,424.5 692.3,421.4 706.6,418.2 720.9,414.8 723.3,425.2 725.7,435.6 728.1,446.0 730.6,456.4 716.8,459.7 702.9,462.8 689.0,465.9 675.1,468.9 672.2,458.5 669.3,448.2 666.5,437.9" fill="#9ae681"/>
<polygon points="674.0,412.5 684.6,410.2 695.1,407.9 705.7,405.5 716.2,403.0 720.0,419.5 723.9,436.0 727.8,452.4 731.8,468.8 721.7,471.2 711.6,473.5 701.5,475.8 691.4,478.0 687.0,461.6 682.6,445.3 678.2,428.9" fill="#9ae681"/>
<polygon points="590.7,221.1 606.8,218.1 623.0,215.0 639.1,211.8 655.2,208.5 656.8,219.4 658.3,230.3 659.8,241.1 661.5,252.0 645.5,255.3 629.4,258.5 613.4,261.6 597.3,264.7 595.6,253.8 593.9,242.9 592.3,232.0" fill="#58e420"/>
<polygon points="599.7,214.5 611.3,212.3 622.9,210.0 634.5,207.8 646.1,205.5 648.3,221.1 650.5,236.7 652.8,252.2 655.3,267.8 643.8,270.2 632.3,272.5 620.9,274.7 609.4,276.9 606.8,261.4 604.3,245.7 602.0,230.1" fill="#58e420"/>
<polygon points="580.1,329.4 597.1,326.3 614.0,323.0 631.0,319.7 647.9,316.2 650.0,328.2 652.1,340.2 654.3,352.1 656.5,364.0 639.8,367.5 623.2,370.9 606.4,374.2 589.7,377.3 587.2,365.4 584.8,353.4 582.4,341.4" fill="#78e442"/>
<polygon points="594.1,314.9 605.1,312.8 616.1,310.7 627.1,308.5 638.1,306.3 641.3,324.3 644.5,342.3 647.8,360.3 651.5,378.2 640.7,380.4 630.0,382.6 619.3,384.8 608.5,386.9 604.6,369.0 601.0,351.0 597.6,332.9" fill="#78e442"/>
<polygon points="483.5,346.4 513.1,341.5 542.8,336.7 572.4,331.7 601.9,326.3 608.0,357.9 614.7,389.3 623.3,420.2 632.4,450.9 604.6,456.4 576.7,461.6 548.9,466.7 521.0,471.9 509.6,441.1 498.8,410.1 490.6,378.4" fill="#18e062"/>
<polygon points="489.7,339.0 513.5,335.2 537.2,331.4 561.0,327.4 584.7,323.3 591.9,360.5 600.2,397.4 610.9,433.6 622.1,469.6 600.2,473.8 578.2,478.0 556.1,482.1 534.1,486.2 520.7,450.1 507.7,413.9 498.0,376.6" fill="#18e062"/>
<polygon points="790.4,556.0 804.9,551.8 819.3,547.4 833.7,542.8 848.1,538.2 850.1,550.0 852.1,561.7 854.2,573.5 856.2,585.3 842.5,589.7 828.8,594.1 815.0,598.3 801.2,602.4 798.5,590.8 795.8,579.2 793.1,567.6" fill="#d0edbe"/>
<polygon points="802.8,537.6 811.0,535.1 819.3,532.5 827.5,529.9 835.7,527.3 838.5,543.0 841.4,558.7 844.3,574.4 847.2,590.1 839.5,592.6 831.8,595.1 824.0,597.5 816.3,599.9 812.9,584.3 809.6,568.7 806.2,553.1" fill="#d0edbe"/>
<polygon points="830.3,542.3 843.8,537.9 857.3,533.6 870.8,529.1 884.2,524.5 885.7,535.4 887.2,546.3 888.7,557.1 890.2,568.0 877.3,572.5 864.4,576.8 851.4,581.0 838.5,585.2 836.4,574.5 834.4,563.7 832.3,553.0" fill="#dfedb5"/>
<polygon points="843.4,523.5 850.7,521.2 858.0,518.8 865.3,516.4 872.6,513.9 875.0,530.1 877.4,546.3 879.7,562.5 882.1,578.6 875.3,581.0 868.4,583.3 861.5,585.5 854.6,587.7 851.8,571.7 849.0,555.6 846.2,539.6" fill="#dfedb5"/>
<polygon points="646.4,540.9 661.0,537.8 675.6,534.8 690.2,531.6 704.8,528.5 707.2,536.4 709.6,544.4 712.1,552.3 714.6,560.2 700.4,563.3 686.3,566.4 672.1,569.4 657.9,572.4 655.0,564.5 652.1,556.6 649.2,548.8" fill="#74e6b3"/>
<polygon points="651.7,528.7 662.0,526.6 672.2,524.4 682.5,522.3 692.7,520.1 697.0,534.2 701.5,548.3 706.0,562.4 710.5,576.5 700.8,578.6 691.1,580.7 681.4,582.8 671.7,584.8 666.7,570.8 661.6,556.8 656.6,542.8" fill="#74e6b3"/>
<polygon points="462.8,240.5 498.6,235.4 534.5,230.1 570.2,224.4 605.9,217.9 607.6,229.8 609.4,241.8 611.2,253.7 613.1,265.6 577.8,272.2 542.3,278.1 506.8,283.6 471.3,289.1 469.0,276.9 466.9,264.8 464.8,252.7" fill="#1ce81c"/>
<polygon points="463.8,235.7 494.5,231.3 525.1,226.9 555.8,222.2 586.3,216.9 588.5,231.2 590.6,245.5 592.9,259.8 595.2,274.1 565.0,279.5 534.7,284.4 504.3,289.1 474.0,293.7 471.2,279.3 468.7,264.8 466.2,250.3" fill="#1ce81c"/>
<polygon points="832.2,267.2 845.7,262.8 859.3,258.4 872.9,253.9 886.4,249.6 887.8,262.3 889.2,275.1 890.5,287.9 891.9,300.6 878.5,305.0 865.2,309.4 851.8,313.8 838.5,318.2 836.9,305.4 835.3,292.7 833.7,279.9" fill="#e6e13b"/>
<polygon points="848.1,254.6 856.8,251.8 865.5,249.0 874.2,246.1 882.9,243.3 884.7,260.7 886.6,278.1 888.5,295.5 890.3,312.9 881.9,315.7 873.4,318.5 864.9,321.3 856.4,324.1 854.3,306.8 852.2,289.4 850.2,272.0" fill="#e6e13b"/>
<polygon points="603.0,381.1 618.9,378.0 634.9,374.7 650.8,371.5 666.8,368.1 669.1,379.2 671.6,390.2 674.4,401.1 677.2,412.0 661.7,415.3 646.1,418.6 630.6,421.8 615.0,424.9 611.7,414.0 608.5,403.2 605.6,392.2" fill="#77e562"/>
<polygon points="604.7,371.4 616.8,369.0 628.9,366.6 640.9,364.2 653.0,361.7 656.3,377.8 660.0,393.8 664.2,409.7 668.4,425.5 656.7,427.9 645.1,430.4 633.5,432.7 621.8,435.1 617.1,419.3 612.5,403.5 608.3,387.6" fill="#77e562"/>
<polygon points="709.1,575.2 722.5,572.3 736.0,569.2 749.4,566.1 762.8,562.9 765.9,574.6 768.9,586.3 772.0,598.0 775.0,609.7 762.2,612.9 749.4,615.9 736.5,618.8 723.7,621.6 720.0,610.0 716.4,598.4 712.7,586.8" fill="#97eac6"/>
<polygon points="710.8,560.1 720.5,558.0 730.1,555.8 739.8,553.6 749.4,551.3 753.6,566.9 757.8,582.4 762.0,597.9 766.2,613.4 757.1,615.6 748.1,617.7 739.0,619.7 729.9,621.8 725.1,606.4 720.4,590.9 715.6,575.5" fill="#97eac6"/>
<polygon points="735.0,520.7 751.1,516.8 767.1,512.7 783.1,508.3 799.1,503.7 801.2,513.6 803.3,523.5 805.4,533.4 807.5,543.2 792.2,547.7 776.8,552.0 761.3,555.9 745.8,559.7 743.1,550.0 740.4,540.2 737.6,530.4" fill="#b6eaaf"/>
<polygon points="746.2,496.0 754.9,493.8 763.5,491.5 772.1,489.2 780.7,486.9 784.4,503.6 788.1,520.4 791.9,537.1 795.8,553.8 787.7,556.1 779.6,558.3 771.5,560.4 763.4,562.5 759.0,545.9 754.7,529.3 750.4,512.7" fill="#b6eaaf"/>
<polygon points="826.2,159.5 838.5,155.7 850.7,151.8 863.0,147.9 875.2,144.0 876.4,154.9 877.5,165.9 878.7,176.8 879.9,187.7 867.7,191.5 855.6,195.4 843.4,199.4 831.3,203.2 830.0,192.3 828.7,181.4 827.5,170.5" fill="#e8e010"/>
<polygon points="838.4,153.6 847.2,150.8 856.1,147.9 864.9,145.1 873.8,142.4 875.6,158.8 877.3,175.3 879.1,191.7 880.8,208.2 872.1,211.0 863.3,213.8 854.6,216.6 845.9,219.4 844.0,203.0 842.1,186.5 840.2,170.0" fill="#e8e010"/>
<polygon points="860.7,426.7 871.5,423.1 882.2,419.4 893.0,415.7 903.7,412.0 904.9,422.8 906.0,433.7 907.2,444.5 908.3,455.3 897.9,458.9 887.6,462.6 877.2,466.2 866.8,469.7 865.2,459.0 863.7,448.2 862.2,437.5" fill="#ebe97b"/>
<polygon points="868.5,409.8 876.7,407.0 884.9,404.2 893.0,401.4 901.2,398.6 903.2,416.4 905.1,434.2 907.0,452.0 908.9,469.8 901.1,472.5 893.4,475.2 885.7,477.9 877.9,480.6 875.5,462.9 873.2,445.2 870.8,427.5" fill="#ebe97b"/>
<polygon points="871.2,478.9 880.8,475.6 890.3,472.3 899.9,468.9 909.4,465.6 910.4,474.6 911.3,483.6 912.3,492.5 913.2,501.5 904.0,504.8 894.8,508.1 885.5,511.3 876.3,514.6 875.0,505.6 873.7,496.7 872.5,487.8" fill="#eceb92"/>
<polygon points="876.9,462.5 884.5,459.9 892.0,457.3 899.5,454.6 907.1,452.0 908.9,469.4 910.8,486.8 912.7,504.2 914.5,521.6 907.5,524.1 900.4,526.6 893.4,529.2 886.3,531.7 884.0,514.4 881.6,497.1 879.3,479.8" fill="#eceb92"/>
<polygon points="816.6,434.7 830.4,430.3 844.3,425.9 858.1,421.3 871.9,416.7 873.6,429.8 875.4,442.8 877.1,455.9 878.8,469.0 865.6,473.5 852.3,477.9 839.0,482.2 825.7,486.4 823.4,473.5 821.1,460.6 818.8,447.6" fill="#e2ea85"/>
<polygon points="822.2,422.5 832.1,419.4 841.9,416.3 851.7,413.1 861.5,409.8 863.9,427.4 866.4,445.1 868.8,462.7 871.3,480.2 862.1,483.4 852.8,486.4 843.5,489.4 834.2,492.4 831.1,474.9 828.1,457.5 825.2,440.0" fill="#e2ea85"/>
<polygon points="881.3,201.2 888.4,203.8 895.5,206.5 902.7,209.1 909.8,211.7 916.9,214.4 924.0,217.0 924.9,226.3 925.8,235.6 926.7,244.9 927.6,254.2 928.5,263.6 929.4,272.9 922.3,270.1 915.3,267.3 908.3,264.5 901.2,261.7 894.2,259.0 887.1,256.2 886.2,247.0 885.2,237.9 884.2,228.7 883.2,219.6 882.3,210.4" fill="#e8d82e" stroke="#e8d82e"/>
<polygon points="924.0,217.0 931.7,219.8 939.4,222.7 947.1,225.5 954.9,228.3 962.6,231.0 970.3,233.8 971.2,243.3 972.0,252.7 972.8,262.2 973.6,271.7 974.4,281.2 975.2,290.7 967.5,287.7 959.9,284.8 952.3,281.8 944.6,278.9 937.0,275.9 929.4,272.9 928.5,263.6 927.6,254.2 926.7,244.9 925.8,235.6 924.9,226.3" fill="#e7cc30" stroke="#e7cc30"/>
<polygon points="970.3,233.8 978.1,236.5 985.9,239.2 993.6,241.8 1001.4,244.4 1009.2,246.9 1017.0,249.5 1017.7,259.2 1018.5,268.8 1019.2,278.5 1019.9,288.2 1020.6,297.9 1021.3,307.6 1013.6,304.8 1005.9,302.0 998.2,299.2 990.5,296.4 982.9,293.6 975.2,290.7 974.4,281.2 973.6,271.7 972.8,262.2 972.0,252.7 971.2,243.3" fill="#e6bd30" stroke="#e6bd30"/>
<polygon points="1017.0,249.5 1024.2,251.8 1031.5,254.1 1038.7,256.4 1045.9,258.7 1053.1,261.0 1060.4,263.2 1061.0,273.1 1061.6,282.9 1062.2,292.8 1062.8,302.7 1063.5,312.6 1064.1,322.4 1057.0,320.0 1049.8,317.5 1042.7,315.1 1035.6,312.6 1028.4,310.1 1021.3,307.6 1020.6,297.9 1019.9,288.2 1019.2,278.5 1018.5,268.8 1017.7,259.2" fill="#e5aa2d" stroke="#e5aa2d"/>
<polygon points="1060.4,263.2 1067.6,265.4 1074.9,267.5 1082.1,269.7 1089.4,271.8 1096.7,273.8 1104.0,275.9 1104.5,286.0 1105.0,296.1 1105.5,306.2 1106.0,316.3 1106.6,326.4 1107.1,336.5 1099.9,334.2 1092.7,331.9 1085.6,329.6 1078.4,327.2 1071.2,324.8 1064.1,322.4 1063.5,312.6 1062.8,302.7 1062.2,292.8 1061.6,282.9 1061.0,273.1" fill="#e4992c" stroke="#e4992c"/>
<polygon points="1104.0,275.9 1111.9,278.0 1119.8,280.0 1127.8,281.9 1135.8,283.8 1143.8,285.5 1151.8,287.2 1152.1,297.6 1152.5,308.0 1152.9,318.4 1153.3,328.8 1153.7,339.2 1154.1,349.7 1146.3,347.6 1138.4,345.6 1130.5,343.4 1122.7,341.2 1114.9,338.9 1107.1,336.5 1106.6,326.4 1106.0,316.3 1105.5,306.2 1105.0,296.1 1104.5,286.0" fill="#e2892c" stroke="#e2892c"/>
<polygon points="1151.8,287.2 1159.8,288.8 1167.8,290.4 1175.8,291.8 1183.9,293.3 1191.9,294.7 1199.9,296.0 1200.2,306.8 1200.4,317.6 1200.7,328.3 1201.0,339.1 1201.2,349.9 1201.5,360.7 1193.6,358.9 1185.7,357.2 1177.8,355.4 1169.9,353.5 1162.0,351.6 1154.1,349.7 1153.7,339.2 1153.3,328.8 1152.9,318.4 1152.5,308.0 1152.1,297.6" fill="#e2762b" stroke="#e2762b"/>
<polygon points="887.1,256.2 894.2,259.0 901.2,261.7 908.3,264.5 915.3,267.3 922.3,270.1 929.4,272.9 930.3,282.2 931.2,291.5 932.1,300.8 933.0,310.1 933.9,319.4 934.8,328.7 927.8,325.8 920.9,322.9 913.9,320.0 906.9,317.0 900.0,314.1 893.0,311.2 892.0,302.0 891.0,292.9 890.1,283.7 889.1,274.5 888.1,265.4" fill="#e9da43" stroke="#e9da43"/>
<polygon points="929.4,272.9 937.0,275.9 944.6,278.9 952.3,281.8 959.9,284.8 967.5,287.7 975.2,290.7 976.0,300.1 976.8,309.6 977.7,319.1 978.5,328.6 979.3,338.1 980.1,347.5 972.6,344.4 965.0,341.3 957.4,338.2 949.9,335.1 942.3,331.9 934.8,328.7 933.9,319.4 933.0,310.1 932.1,300.8 931.2,291.5 930.3,282.2" fill="#e8cc45" stroke="#e8cc45"/>
<polygon points="975.2,290.7 982.9,293.6 990.5,296.4 998.2,299.2 1005.9,302.0 1013.6,304.8 1021.3,307.6 1022.0,317.2 1022.8,326.9 1023.5,336.6 1024.2,346.3 1025.0,355.9 1025.7,365.6 1018.1,362.6 1010.5,359.7 1002.9,356.7 995.3,353.7 987.7,350.6 980.1,347.5 979.3,338.1 978.5,328.6 977.7,319.1 976.8,309.6 976.0,300.1" fill="#e7bd45" stroke="#e7bd45"/>
<polygon points="1021.3,307.6 1028.4,310.1 1035.6,312.6 1042.7,315.1 1049.8,317.5 1057.0,320.0 1064.1,322.4 1064.7,332.3 1065.4,342.2 1066.0,352.1 1066.7,361.9 1067.3,371.8 1068.0,381.7 1060.9,379.1 1053.9,376.4 1046.8,373.7 1039.8,371.0 1032.7,368.3 1025.7,365.6 1025.0,355.9 1024.2,346.3 1023.5,336.6 1022.8,326.9 1022.0,317.2" fill="#e6aa42" stroke="#e6aa42"/>
<polygon points="1064.1,322.4 1071.2,324.8 1078.4,327.2 1085.6,329.6 1092.7,331.9 1099.9,334.2 1107.1,336.5 1107.6,346.6 1108.2,356.7 1108.7,366.8 1109.3,376.9 1109.8,387.0 1110.4,397.1 1103.3,394.6 1096.2,392.1 1089.1,389.5 1082.1,386.9 1075.0,384.3 1068.0,381.7 1067.3,371.8 1066.7,361.9 1066.0,352.1 1065.4,342.2 1064.7,332.3" fill="#e49940" stroke="#e49940"/>
<polygon points="1107.1,336.5 1114.9,338.9 1122.7,341.2 1130.5,343.4 1138.4,345.6 1146.3,347.6 1154.1,349.7 1154.5,360.1 1155.0,370.5 1155.4,380.9 1155.8,391.3 1156.3,401.7 1156.7,412.1 1149.0,409.7 1141.2,407.3 1133.5,404.9 1125.8,402.3 1118.1,399.7 1110.4,397.1 1109.8,387.0 1109.3,376.9 1108.7,366.8 1108.2,356.7 1107.6,346.6" fill="#e2873e" stroke="#e2873e"/>
<polygon points="1154.1,349.7 1162.0,351.6 1169.9,353.5 1177.8,355.4 1185.7,357.2 1193.6,358.9 1201.5,360.7 1201.8,371.4 1202.1,382.2 1202.4,393.0 1202.7,403.8 1203.0,414.6 1203.3,425.3 1195.6,423.2 1187.8,421.1 1180.0,418.9 1172.2,416.7 1164.5,414.4 1156.7,412.1 1156.3,401.7 1155.8,391.3 1155.4,380.9 1155.0,370.5 1154.5,360.1" fill="#e1753e" stroke="#e1753e"/>
<polygon points="893.0,311.2 900.0,314.1 906.9,317.0 913.9,320.0 920.9,322.9 927.8,325.8 934.8,328.7 935.6,337.3 936.5,345.9 937.3,354.5 938.1,363.1 939.0,371.7 939.8,380.3 932.9,377.3 926.0,374.2 919.1,371.1 912.2,368.1 905.3,365.0 898.4,362.0 897.5,353.5 896.6,345.0 895.7,336.6 894.8,328.1 893.9,319.7" fill="#ebdd57" stroke="#ebdd57"/>
<polygon points="934.8,328.7 942.3,331.9 949.9,335.1 957.4,338.2 965.0,341.3 972.6,344.4 980.1,347.5 980.9,356.3 981.6,365.1 982.4,373.8 983.2,382.6 983.9,391.3 984.7,400.1 977.2,396.8 969.7,393.5 962.2,390.2 954.8,386.9 947.3,383.6 939.8,380.3 939.0,371.7 938.1,363.1 937.3,354.5 936.5,345.9 935.6,337.3" fill="#eacf5b" stroke="#eacf5b"/>
<polygon points="980.1,347.5 987.7,350.6 995.3,353.7 1002.9,356.7 1010.5,359.7 1018.1,362.6 1025.7,365.6 1026.4,374.5 1027.1,383.5 1027.7,392.4 1028.4,401.3 1029.1,410.3 1029.8,419.2 1022.3,416.0 1014.8,412.9 1007.2,409.7 999.7,406.5 992.2,403.3 984.7,400.1 983.9,391.3 983.2,382.6 982.4,373.8 981.6,365.1 980.9,356.3" fill="#e9bf5c" stroke="#e9bf5c"/>
<polygon points="1025.7,365.6 1032.7,368.3 1039.8,371.0 1046.8,373.7 1053.9,376.4 1060.9,379.1 1068.0,381.7 1068.5,390.8 1069.1,399.9 1069.7,409.0 1070.3,418.2 1071.0,427.3 1071.6,436.4 1064.6,433.6 1057.7,430.7 1050.7,427.9 1043.7,425.0 1036.8,422.1 1029.8,419.2 1029.1,410.3 1028.4,401.3 1027.7,392.4 1027.1,383.5 1026.4,374.5" fill="#e8ac59" stroke="#e8ac59"/>
<polygon points="1068.0,381.7 1075.0,384.3 1082.1,386.9 1089.1,389.5 1096.2,392.1 1103.3,394.6 1110.4,397.1 1110.9,406.4 1111.4,415.7 1111.9,425.1 1112.4,434.4 1113.0,443.7 1113.5,453.0 1106.5,450.3 1099.5,447.6 1092.5,444.8 1085.5,442.0 1078.6,439.2 1071.6,436.4 1071.0,427.3 1070.3,418.2 1069.7,409.0 1069.1,399.9 1068.5,390.8" fill="#e69b57" stroke="#e69b57"/>
<polygon points="1110.4,397.1 1118.1,399.7 1125.8,402.3 1133.5,404.9 1141.2,407.3 1149.0,409.7 1156.7,412.1 1157.1,421.7 1157.5,431.3 1157.9,440.9 1158.3,450.5 1158.8,460.1 1159.2,469.7 1151.6,467.1 1143.9,464.4 1136.3,461.6 1128.7,458.8 1121.1,455.9 1113.5,453.0 1113.0,443.7 1112.4,434.4 1111.9,425.1 1111.4,415.7 1110.9,406.4" fill="#e48953" stroke="#e48953"/>
<polygon points="1156.7,412.1 1164.5,414.4 1172.2,416.7 1180.0,418.9 1187.8,421.1 1195.6,423.2 1203.3,425.3 1203.6,435.3 1203.9,445.2 1204.2,455.2 1204.5,465.1 1204.8,475.1 1205.2,485.0 1197.5,482.5 1189.8,480.0 1182.2,477.5 1174.5,475.0 1166.9,472.4 1159.2,469.7 1158.8,460.1 1158.3,450.5 1157.9,440.9 1157.5,431.3 1157.1,421.7" fill="#e37753" stroke="#e37753"/>
<polygon points="898.4,362.0 905.3,365.0 912.2,368.1 919.1,371.1 926.0,374.2 932.9,377.3 939.8,380.3 940.7,388.9 941.5,397.5 942.4,406.1 943.2,414.7 944.1,423.3 944.9,431.9 938.1,428.7 931.2,425.5 924.4,422.3 917.5,419.1 910.7,415.9 903.8,412.7 902.9,404.3 902.0,395.8 901.1,387.3 900.2,378.9 899.3,370.4" fill="#ede06d" stroke="#ede06d"/>
<polygon points="939.8,380.3 947.3,383.6 954.8,386.9 962.2,390.2 969.7,393.5 977.2,396.8 984.7,400.1 985.5,408.8 986.3,417.6 987.1,426.3 987.9,435.1 988.7,443.8 989.5,452.6 982.1,449.1 974.7,445.7 967.2,442.3 959.8,438.8 952.4,435.4 944.9,431.9 944.1,423.3 943.2,414.7 942.4,406.1 941.5,397.5 940.7,388.9" fill="#ecd374" stroke="#ecd374"/>
<polygon points="984.7,400.1 992.2,403.3 999.7,406.5 1007.2,409.7 1014.8,412.9 1022.3,416.0 1029.8,419.2 1030.5,428.1 1031.3,437.1 1032.0,446.0 1032.7,454.9 1033.5,463.8 1034.3,472.8 1026.8,469.4 1019.4,466.1 1011.9,462.7 1004.4,459.4 997.0,456.0 989.5,452.6 988.7,443.8 987.9,435.1 987.1,426.3 986.3,417.6 985.5,408.8" fill="#ebc376" stroke="#ebc376"/>
<polygon points="1029.8,419.2 1036.8,422.1 1043.7,425.0 1050.7,427.9 1057.7,430.7 1064.6,433.6 1071.6,436.4 1072.2,445.5 1072.9,454.6 1073.6,463.7 1074.3,472.9 1075.0,482.0 1075.7,491.1 1068.8,488.1 1061.9,485.0 1055.0,482.0 1048.1,478.9 1041.2,475.8 1034.3,472.8 1033.5,463.8 1032.7,454.9 1032.0,446.0 1031.3,437.1 1030.5,428.1" fill="#eab074" stroke="#eab074"/>
<polygon points="1071.6,436.4 1078.6,439.2 1085.5,442.0 1092.5,444.8 1099.5,447.6 1106.5,450.3 1113.5,453.0 1114.1,462.4 1114.7,471.7 1115.3,481.0 1115.9,490.3 1116.5,499.7 1117.2,509.0 1110.3,506.0 1103.4,503.1 1096.4,500.1 1089.5,497.1 1082.6,494.1 1075.7,491.1 1075.0,482.0 1074.3,472.9 1073.6,463.7 1072.9,454.6 1072.2,445.5" fill="#e89f71" stroke="#e89f71"/>
<polygon points="1113.5,453.0 1121.1,455.9 1128.7,458.8 1136.3,461.6 1143.9,464.4 1151.6,467.1 1159.2,469.7 1159.7,479.3 1160.2,489.0 1160.7,498.6 1161.2,508.2 1161.8,517.8 1162.4,527.4 1154.9,524.4 1147.3,521.4 1139.8,518.3 1132.2,515.3 1124.7,512.1 1117.2,509.0 1116.5,499.7 1115.9,490.3 1115.3,481.0 1114.7,471.7 1114.1,462.4" fill="#e68d6d" stroke="#e68d6d"/>
<polygon points="1159.2,469.7 1166.9,472.4 1174.5,475.0 1182.2,477.5 1189.8,480.0 1197.5,482.5 1205.2,485.0 1205.5,495.0 1205.9,504.9 1206.3,514.9 1206.8,524.8 1207.3,534.7 1207.8,544.7 1200.2,541.8 1192.6,539.0 1185.1,536.1 1177.5,533.2 1170.0,530.3 1162.4,527.4 1161.8,517.8 1161.2,508.2 1160.7,498.6 1160.2,489.0 1159.7,479.3" fill="#e47a6b" stroke="#e47a6b"/>
<polygon points="903.8,412.7 910.7,415.9 917.5,419.1 924.4,422.3 931.2,425.5 938.1,428.7 944.9,431.9 945.8,440.5 946.7,449.1 947.6,457.7 948.5,466.3 949.3,474.9 950.2,483.5 943.4,480.1 936.6,476.8 929.7,473.5 922.9,470.1 916.0,466.8 909.2,463.5 908.3,455.0 907.4,446.6 906.5,438.1 905.6,429.6 904.7,421.2" fill="#efe383" stroke="#efe383"/>
<polygon points="944.9,431.9 952.4,435.4 959.8,438.8 967.2,442.3 974.7,445.7 982.1,449.1 989.5,452.6 990.4,461.3 991.2,470.1 992.1,478.8 993.0,487.6 993.8,496.3 994.7,505.1 987.3,501.5 979.9,497.9 972.5,494.3 965.1,490.7 957.6,487.1 950.2,483.5 949.3,474.9 948.5,466.3 947.6,457.7 946.7,449.1 945.8,440.5" fill="#eed88e" stroke="#eed88e"/>
<polygon points="989.5,452.6 997.0,456.0 1004.4,459.4 1011.9,462.7 1019.4,466.1 1026.8,469.4 1034.3,472.8 1035.1,481.7 1035.9,490.6 1036.7,499.6 1037.6,508.5 1038.4,517.4 1039.3,526.3 1031.9,522.8 1024.4,519.3 1017.0,515.7 1009.6,512.2 1002.1,508.6 994.7,505.1 993.8,496.3 993.0,487.6 992.1,478.8 991.2,470.1 990.4,461.3" fill="#edc993" stroke="#edc993"/>
<polygon points="1034.3,472.8 1041.2,475.8 1048.1,478.9 1055.0,482.0 1061.9,485.0 1068.8,488.1 1075.7,491.1 1076.4,500.2 1077.2,509.3 1078.0,518.4 1078.8,527.5 1079.7,536.6 1080.5,545.7 1073.6,542.5 1066.8,539.3 1059.9,536.1 1053.0,532.8 1046.2,529.6 1039.3,526.3 1038.4,517.4 1037.6,508.5 1036.7,499.6 1035.9,490.6 1035.1,481.7" fill="#ecb691" stroke="#ecb691"/>
<polygon points="1075.7,491.1 1082.6,494.1 1089.5,497.1 1096.4,500.1 1103.4,503.1 1110.3,506.0 1117.2,509.0 1117.9,518.3 1118.6,527.6 1119.4,536.9 1120.2,546.2 1121.0,555.6 1121.8,564.9 1114.9,561.7 1108.0,558.5 1101.1,555.4 1094.3,552.2 1087.4,549.0 1080.5,545.7 1079.7,536.6 1078.8,527.5 1078.0,518.4 1077.2,509.3 1076.4,500.2" fill="#eaa48d" stroke="#eaa48d"/>
<polygon points="1117.2,509.0 1124.7,512.1 1132.2,515.3 1139.8,518.3 1147.3,521.4 1154.9,524.4 1162.4,527.4 1163.0,537.0 1163.7,546.6 1164.4,556.2 1165.2,565.7 1165.9,575.3 1166.7,584.9 1159.2,581.7 1151.7,578.3 1144.2,575.0 1136.7,571.7 1129.3,568.3 1121.8,564.9 1121.0,555.6 1120.2,546.2 1119.4,536.9 1118.6,527.6 1117.9,518.3" fill="#e89188" stroke="#e89188"/>
<polygon points="1162.4,527.4 1170.0,530.3 1177.5,533.2 1185.1,536.1 1192.6,539.0 1200.2,541.8 1207.8,544.7 1208.3,554.6 1208.9,564.6 1209.6,574.5 1210.3,584.4 1211.0,594.4 1211.7,604.3 1204.2,601.1 1196.7,597.9 1189.2,594.7 1181.7,591.4 1174.2,588.2 1166.7,584.9 1165.9,575.3 1165.2,565.7 1164.4,556.2 1163.7,546.6 1163.0,537.0" fill="#e67e86" stroke="#e67e86"/>
<polygon points="909.2,463.5 916.0,466.8 922.9,470.1 929.7,473.5 936.6,476.8 943.4,480.1 950.2,483.5 951.1,492.1 952.0,500.7 952.9,509.3 953.8,517.9 954.7,526.4 955.6,535.0 948.8,531.6 942.0,528.1 935.1,524.6 928.3,521.2 921.4,517.7 914.6,514.2 913.7,505.8 912.8,497.3 911.9,488.9 911.0,480.4 910.1,471.9" fill="#f1e6a0" stroke="#f1e6a0"/>
<polygon points="950.2,483.5 957.6,487.1 965.1,490.7 972.5,494.3 979.9,497.9 987.3,501.5 994.7,505.1 995.6,513.8 996.5,522.5 997.4,531.3 998.3,540.0 999.2,548.8 1000.1,557.5 992.7,553.8 985.3,550.0 977.9,546.3 970.4,542.5 963.0,538.8 955.6,535.0 954.7,526.4 953.8,517.9 952.9,509.3 952.0,500.7 951.1,492.1" fill="#f0ddac" stroke="#f0ddac"/>
<polygon points="994.7,505.1 1002.1,508.6 1009.6,512.2 1017.0,515.7 1024.4,519.3 1031.9,522.8 1039.3,526.3 1040.2,535.3 1041.0,544.2 1041.9,553.1 1042.8,562.0 1043.7,570.9 1044.6,579.9 1037.2,576.2 1029.8,572.4 1022.3,568.7 1014.9,565.0 1007.5,561.3 1000.1,557.5 999.2,548.8 998.3,540.0 997.4,531.3 996.5,522.5 995.6,513.8" fill="#efd0b1" stroke="#efd0b1"/>
<polygon points="1039.3,526.3 1046.2,529.6 1053.0,532.8 1059.9,536.1 1066.8,539.3 1073.6,542.5 1080.5,545.7 1081.4,554.8 1082.2,564.0 1083.1,573.1 1084.0,582.2 1084.8,591.3 1085.7,600.4 1078.9,597.0 1072.0,593.6 1065.1,590.1 1058.3,586.7 1051.4,583.3 1044.6,579.9 1043.7,570.9 1042.8,562.0 1041.9,553.1 1041.0,544.2 1040.2,535.3" fill="#edbdaf" stroke="#edbdaf"/>
<polygon points="1080.5,545.7 1087.4,549.0 1094.3,552.2 1101.1,555.4 1108.0,558.5 1114.9,561.7 1121.8,564.9 1122.6,574.2 1123.5,583.5 1124.3,592.8 1125.1,602.1 1126.0,611.4 1126.9,620.7 1120.0,617.4 1113.1,614.0 1106.3,610.6 1099.4,607.2 1092.6,603.8 1085.7,600.4 1084.8,591.3 1084.0,582.2 1083.1,573.1 1082.2,564.0 1081.4,554.8" fill="#eaaaab" stroke="#eaaaab"/>
<polygon points="1121.8,564.9 1129.3,568.3 1136.7,571.7 1144.2,575.0 1151.7,578.3 1159.2,581.7 1166.7,584.9 1167.5,594.5 1168.3,604.1 1169.1,613.7 1169.9,623.3 1170.7,632.9 1171.5,642.5 1164.1,638.9 1156.6,635.3 1149.2,631.7 1141.7,628.0 1134.3,624.4 1126.9,620.7 1126.0,611.4 1125.1,602.1 1124.3,592.8 1123.5,583.5 1122.6,574.2" fill="#e795a6" stroke="#e795a6"/>
<polygon points="1166.7,584.9 1174.2,588.2 1181.7,591.4 1189.2,594.7 1196.7,597.9 1204.2,601.1 1211.7,604.3 1212.4,614.2 1213.1,624.1 1213.9,634.1 1214.7,644.0 1215.5,653.9 1216.2,663.8 1208.8,660.3 1201.3,656.7 1193.9,653.2 1186.4,649.6 1179.0,646.1 1171.5,642.5 1170.7,632.9 1169.9,623.3 1169.1,613.7 1168.3,604.1 1167.5,594.5" fill="#e381a3" stroke="#e381a3"/>
<polygon points="914.6,514.2 921.4,517.7 928.3,521.2 935.1,524.6 942.0,528.1 948.8,531.6 955.6,535.0 956.5,543.6 957.4,552.2 958.3,560.8 959.2,569.4 960.1,578.0 961.0,586.6 954.2,583.0 947.4,579.4 940.5,575.8 933.7,572.2 926.8,568.6 920.0,565.0 919.1,556.5 918.2,548.1 917.3,539.6 916.4,531.2 915.5,522.7" fill="#f3eac0" stroke="#f3eac0"/>
<polygon points="955.6,535.0 963.0,538.8 970.4,542.5 977.9,546.3 985.3,550.0 992.7,553.8 1000.1,557.5 1001.0,566.3 1001.9,575.0 1002.8,583.8 1003.7,592.5 1004.6,601.3 1005.5,610.0 998.1,606.1 990.7,602.2 983.3,598.3 975.9,594.4 968.5,590.5 961.0,586.6 960.1,578.0 959.2,569.4 958.3,560.8 957.4,552.2 956.5,543.6" fill="#f3e4cb" stroke="#f3e4cb"/>
<polygon points="1000.1,557.5 1007.5,561.3 1014.9,565.0 1022.3,568.7 1029.8,572.4 1037.2,576.2 1044.6,579.9 1045.5,588.8 1046.4,597.7 1047.3,606.6 1048.2,615.6 1049.1,624.5 1050.0,633.4 1042.5,629.5 1035.1,625.6 1027.7,621.7 1020.3,617.8 1012.9,613.9 1005.5,610.0 1004.6,601.3 1003.7,592.5 1002.8,583.8 1001.9,575.0 1001.0,566.3" fill="#f1d8d0" stroke="#f1d8d0"/>
<polygon points="1044.6,579.9 1051.4,583.3 1058.3,586.7 1065.1,590.1 1072.0,593.6 1078.9,597.0 1085.7,600.4 1086.6,609.5 1087.5,618.6 1088.4,627.7 1089.3,636.8 1090.1,645.9 1091.0,655.0 1084.2,651.4 1077.3,647.8 1070.5,644.2 1063.6,640.6 1056.8,637.0 1050.0,633.4 1049.1,624.5 1048.2,615.6 1047.3,606.6 1046.4,597.7 1045.5,588.8" fill="#eec5ce" stroke="#eec5ce"/>
<polygon points="1085.7,600.4 1092.6,603.8 1099.4,607.2 1106.3,610.6 1113.1,614.0 1120.0,617.4 1126.9,620.7 1127.7,630.0 1128.6,639.4 1129.5,648.7 1130.3,658.0 1131.2,667.3 1132.0,676.6 1125.2,673.0 1118.4,669.4 1111.5,665.8 1104.7,662.2 1097.8,658.6 1091.0,655.0 1090.1,645.9 1089.3,636.8 1088.4,627.7 1087.5,618.6 1086.6,609.5" fill="#e9b0ca" stroke="#e9b0ca"/>
<polygon points="1126.9,620.7 1134.3,624.4 1141.7,628.0 1149.2,631.7 1156.6,635.3 1164.1,638.9 1171.5,642.5 1172.4,652.1 1173.2,661.6 1174.0,671.2 1174.9,680.8 1175.7,690.4 1176.5,700.0 1169.1,696.1 1161.7,692.2 1154.3,688.3 1146.9,684.4 1139.5,680.5 1132.0,676.6 1131.2,667.3 1130.3,658.0 1129.5,648.7 1128.6,639.4 1127.7,630.0" fill="#e399c6" stroke="#e399c6"/>
<polygon points="1171.5,642.5 1179.0,646.1 1186.4,649.6 1193.9,653.2 1201.3,656.7 1208.8,660.3 1216.2,663.8 1217.0,673.8 1217.8,683.7 1218.6,693.6 1219.4,703.5 1220.2,713.5 1221.0,723.4 1213.5,719.5 1206.1,715.6 1198.7,711.7 1191.3,707.8 1183.9,703.9 1176.5,700.0 1175.7,690.4 1174.9,680.8 1174.0,671.2 1173.2,661.6 1172.4,652.1" fill="#dd83c3" stroke="#dd83c3"/>
<polygon points="1199.9,296.0 1207.4,297.1 1214.8,298.0 1222.3,298.8 1229.8,299.4 1237.2,299.9 1244.7,300.4 1244.9,313.4 1245.0,326.3 1245.1,339.3 1245.3,352.2 1245.5,365.1 1245.6,378.1 1238.3,377.0 1231.0,375.9 1223.7,374.8 1216.4,373.5 1209.1,372.1 1201.8,370.6 1201.4,358.2 1201.1,345.7 1200.8,333.3 1200.5,320.9 1200.2,308.4" fill="#e05040" stroke="#e05040"/>
<polygon points="1201.8,370.6 1209.1,372.1 1216.4,373.5 1223.7,374.8 1231.0,375.9 1238.3,377.0 1245.6,378.1 1245.9,395.3 1246.2,412.6 1246.5,429.8 1246.8,447.0 1247.1,464.3 1247.4,481.5 1240.3,479.7 1233.1,478.0 1226.0,476.1 1218.9,474.2 1211.8,472.2 1204.6,470.1 1204.1,453.5 1203.7,436.9 1203.2,420.4 1202.7,403.8 1202.2,387.2" fill="#e4586c" stroke="#e4586c"/>
<polygon points="1204.6,470.1 1211.8,472.2 1218.9,474.2 1226.0,476.1 1233.1,478.0 1240.3,479.7 1247.4,481.5 1248.0,508.3 1248.8,535.0 1249.9,561.7 1251.3,588.4 1252.9,615.1 1254.7,641.8 1247.7,638.9 1240.8,636.0 1233.9,633.1 1227.0,630.1 1220.1,627.2 1213.1,624.1 1211.3,598.5 1209.5,572.8 1207.9,547.2 1206.6,521.5 1205.5,495.8" fill="#e868a0" stroke="#e868a0"/>
<polygon points="1213.1,624.1 1220.1,627.2 1227.0,630.1 1233.9,633.1 1240.8,636.0 1247.7,638.9 1254.7,641.8 1255.8,659.0 1257.1,676.2 1258.3,693.4 1259.5,710.6 1260.8,727.8 1262.0,745.0 1255.2,741.4 1248.3,737.8 1241.5,734.2 1234.6,730.6 1227.8,727.0 1221.0,723.4 1219.7,706.9 1218.4,690.3 1217.0,673.8 1215.7,657.2 1214.4,640.7" fill="#d068d0" stroke="#d068d0"/>
<polygon points="875.0,142.0 880.7,143.9 886.4,145.9 892.1,147.8 897.8,149.8 903.5,151.8 909.2,153.7 910.2,163.7 911.2,173.7 912.2,183.7 913.1,193.7 914.1,203.7 915.1,213.7 909.5,211.6 903.8,209.5 898.2,207.4 892.6,205.4 886.9,203.3 881.3,201.2 880.2,191.4 879.2,181.5 878.1,171.6 877.1,161.7 876.0,151.9" fill="#e8e010" stroke="#e8e010"/>
<polygon points="909.2,153.7 922.1,158.1 935.0,162.5 948.0,166.9 960.9,171.1 973.9,175.3 986.9,179.4 987.8,189.7 988.6,200.0 989.4,210.3 990.2,220.6 991.0,230.9 991.8,241.2 979.0,236.8 966.2,232.3 953.4,227.7 940.6,223.1 927.8,218.4 915.1,213.7 914.1,203.7 913.1,193.7 912.2,183.7 911.2,173.7 910.2,163.7" fill="#e8d018" stroke="#e8d018"/>
<polygon points="986.9,179.4 998.5,182.8 1010.0,186.3 1021.6,189.6 1033.2,192.9 1044.8,196.2 1056.4,199.4 1057.1,210.0 1057.8,220.6 1058.4,231.3 1059.1,241.9 1059.7,252.5 1060.4,263.2 1048.9,259.6 1037.5,256.0 1026.0,252.4 1014.6,248.7 1003.2,245.0 991.8,241.2 991.0,230.9 990.2,220.6 989.4,210.3 988.6,200.0 987.8,189.7" fill="#e8b018" stroke="#e8b018"/>
<polygon points="1056.4,199.4 1073.0,203.7 1089.6,207.9 1106.3,211.8 1123.1,215.4 1139.9,218.4 1156.8,221.1 1157.2,232.4 1157.6,243.6 1158.0,254.9 1158.4,266.2 1158.8,277.4 1159.2,288.7 1142.5,285.3 1126.0,281.5 1109.5,277.3 1093.1,272.8 1076.7,268.1 1060.4,263.2 1059.7,252.5 1059.1,241.9 1058.4,231.3 1057.8,220.6 1057.1,210.0" fill="#e89818" stroke="#e89818"/>
<polygon points="1156.8,221.1 1163.7,222.1 1170.7,223.0 1177.6,223.9 1184.5,224.8 1191.4,225.6 1198.4,226.4 1198.6,238.0 1198.9,249.6 1199.2,261.2 1199.4,272.8 1199.7,284.4 1199.9,296.0 1193.1,294.9 1186.3,293.7 1179.5,292.5 1172.7,291.3 1165.9,290.0 1159.2,288.7 1158.8,277.4 1158.4,266.2 1158.0,254.9 1157.6,243.6 1157.2,232.4" fill="#e88018" stroke="#e88018"/>
<polygon points="1198.4,226.4 1206.0,227.0 1213.6,227.5 1221.2,227.8 1228.8,227.9 1236.4,227.9 1244.0,228.0 1244.1,240.1 1244.2,252.1 1244.4,264.2 1244.5,276.3 1244.6,288.4 1244.7,300.4 1237.2,299.9 1229.8,299.4 1222.3,298.8 1214.8,298.0 1207.4,297.1 1199.9,296.0 1199.7,284.4 1199.4,272.8 1199.2,261.2 1198.9,249.6 1198.6,238.0" fill="#ea5010" stroke="#ea5010"/>
<polygon points="930.4,332.3 944.2,338.1 958.1,343.9 971.9,349.7 985.8,355.4 986.7,366.0 987.6,376.5 988.5,387.1 989.4,397.7 975.7,391.7 961.9,385.7 948.2,379.7 934.5,373.7 933.5,363.3 932.5,353.0 931.4,342.7" fill="#eacf5b"/>
<polygon points="936.7,319.0 947.2,323.3 957.8,327.7 968.4,332.0 978.9,336.3 980.6,355.9 982.3,375.6 984.1,395.2 985.8,414.9 975.4,410.2 965.0,405.6 954.6,400.9 944.2,396.3 942.3,377.0 940.4,357.6 938.5,338.3" fill="#eacf5b"/>
<polygon points="1115.4,618.6 1131.5,626.5 1147.6,634.4 1163.7,642.3 1179.9,650.1 1181.0,662.7 1182.0,675.2 1183.1,687.8 1184.2,700.4 1168.1,691.9 1152.1,683.5 1136.0,675.1 1119.9,666.7 1118.8,654.7 1117.7,642.6 1116.6,630.6" fill="#e399c6"/>
<polygon points="1131.9,621.4 1140.5,625.6 1149.1,629.8 1157.7,634.0 1166.3,638.1 1167.6,652.9 1168.9,667.7 1170.2,682.5 1171.4,697.3 1162.9,692.8 1154.3,688.3 1145.8,683.8 1137.2,679.3 1135.9,664.9 1134.6,650.4 1133.2,635.9" fill="#e399c6"/>
<polygon points="1106.3,403.8 1120.5,408.8 1134.8,413.6 1149.1,418.2 1163.5,422.6 1163.9,433.6 1164.4,444.6 1164.8,455.6 1165.3,466.6 1151.1,461.8 1137.0,456.7 1122.8,451.6 1108.7,446.2 1108.1,435.6 1107.5,425.0 1106.9,414.4" fill="#e48953"/>
<polygon points="1110.2,390.1 1120.1,393.5 1130.0,396.7 1140.0,399.9 1149.9,402.9 1150.7,421.2 1151.5,439.6 1152.4,457.9 1153.3,476.3 1143.5,472.7 1133.7,469.1 1124.0,465.4 1114.2,461.6 1113.2,443.8 1112.2,425.9 1111.2,408.0" fill="#e48953"/>
<polygon points="1069.1,439.2 1081.6,444.2 1094.0,449.3 1106.5,454.2 1119.0,459.1 1119.7,470.1 1120.4,481.1 1121.1,492.2 1121.9,503.2 1109.5,498.1 1097.1,492.8 1084.7,487.5 1072.4,482.2 1071.5,471.4 1070.7,460.7 1069.9,449.9" fill="#e89f71"/>
<polygon points="1072.2,433.9 1081.4,437.6 1090.6,441.2 1099.9,444.9 1109.1,448.5 1110.2,466.0 1111.3,483.5 1112.6,501.1 1113.9,518.6 1104.8,514.6 1095.6,510.6 1086.5,506.6 1077.4,502.6 1076.0,485.4 1074.7,468.2 1073.4,451.0" fill="#e89f71"/>
<polygon points="1060.1,266.5 1072.0,270.1 1083.9,273.6 1095.8,277.0 1107.7,280.3 1108.3,293.0 1109.0,305.7 1109.6,318.3 1110.3,331.0 1098.5,327.4 1086.7,323.6 1075.0,319.8 1063.2,315.9 1062.4,303.5 1061.7,291.2 1060.9,278.8" fill="#e4992c"/>
<polygon points="1060.6,260.0 1070.4,262.9 1080.3,265.8 1090.2,268.7 1100.1,271.4 1101.0,288.6 1101.9,305.7 1102.8,322.8 1103.7,340.0 1094.0,336.8 1084.2,333.6 1074.5,330.4 1064.8,327.1 1063.7,310.3 1062.7,293.5 1061.6,276.7" fill="#e4992c"/>
<polygon points="875.5,146.5 887.1,150.4 898.6,154.4 910.2,158.5 921.8,162.4 922.9,174.1 924.0,185.8 925.1,197.4 926.2,209.1 914.8,204.9 903.3,200.7 891.8,196.5 880.4,192.3 879.1,180.9 877.9,169.4 876.7,157.9" fill="#e8e010"/>
<polygon points="876.3,142.4 882.7,144.6 889.1,146.8 895.5,149.0 901.9,151.2 903.5,166.9 905.0,182.5 906.6,198.2 908.2,213.9 901.8,211.5 895.5,209.2 889.2,206.8 882.9,204.5 881.3,189.0 879.6,173.5 878.0,158.0" fill="#e8e010"/>
<polygon points="1147.3,409.3 1164.1,414.4 1181.0,419.2 1197.9,423.9 1214.9,428.3 1215.2,442.6 1215.6,456.9 1216.0,471.2 1216.4,485.5 1199.7,480.4 1183.1,475.0 1166.4,469.4 1149.8,463.7 1149.1,450.1 1148.5,436.5 1147.9,422.9" fill="#e37753"/>
<polygon points="1162.6,409.8 1172.1,412.5 1181.6,415.2 1191.0,417.8 1200.5,420.4 1201.0,436.4 1201.4,452.3 1201.9,468.3 1202.5,484.3 1193.2,481.3 1183.8,478.2 1174.5,475.1 1165.2,471.9 1164.5,456.4 1163.9,440.9 1163.2,425.3" fill="#e37753"/>
<polygon points="1204.5,480.7 1215.3,484.0 1226.1,487.0 1236.8,489.9 1247.6,492.7 1248.6,527.2 1249.9,561.6 1251.7,596.0 1253.9,630.4 1243.4,626.2 1232.9,621.9 1222.3,617.5 1211.8,613.0 1209.5,580.0 1207.4,546.9 1205.8,513.8" fill="#e868a0"/>
<polygon points="1208.4,465.6 1218.1,468.3 1227.7,470.9 1237.4,473.2 1247.1,475.6 1248.2,520.8 1249.9,565.9 1252.5,610.9 1255.5,656.0 1246.1,651.9 1236.7,647.9 1227.4,643.8 1218.0,639.6 1214.8,596.2 1212.0,552.7 1209.9,509.2" fill="#e868a0"/>
<polygon points="1053.8,321.2 1069.1,326.4 1084.5,331.5 1099.9,336.5 1115.3,341.3 1116.0,354.6 1116.7,367.9 1117.4,381.1 1118.1,394.4 1102.8,389.2 1087.6,383.7 1072.4,378.2 1057.3,372.6 1056.4,359.7 1055.5,346.9 1054.7,334.0" fill="#e49940"/>
<polygon points="1067.6,319.5 1076.1,322.3 1084.7,325.1 1093.3,327.9 1101.9,330.6 1103.0,350.7 1104.1,370.7 1105.2,390.8 1106.4,410.9 1097.9,407.8 1089.5,404.7 1081.1,401.5 1072.6,398.3 1071.4,378.6 1070.1,358.9 1068.8,339.2" fill="#e49940"/>
<polygon points="945.2,532.3 959.4,539.6 973.7,546.8 988.0,554.1 1002.3,561.3 1003.4,571.6 1004.5,582.0 1005.5,592.3 1006.6,602.6 992.3,595.1 978.0,587.7 963.7,580.2 949.4,572.7 948.3,562.6 947.3,552.5 946.2,542.4" fill="#f3e4cb"/>
<polygon points="956.9,528.3 965.7,532.7 974.5,537.2 983.3,541.6 992.2,546.0 993.7,561.1 995.3,576.1 996.8,591.2 998.4,606.3 989.6,601.6 980.8,597.0 971.9,592.3 963.1,587.7 961.6,572.9 960.0,558.0 958.5,543.2" fill="#f3e4cb"/>
<polygon points="1095.1,276.3 1109.9,280.3 1124.8,284.1 1139.7,287.6 1154.7,290.8 1155.2,305.0 1155.7,319.2 1156.2,333.4 1156.8,347.6 1142.0,343.9 1127.3,339.9 1112.6,335.6 1098.0,331.1 1097.3,317.4 1096.6,303.7 1095.8,290.0" fill="#e2892c"/>
<polygon points="1109.4,275.2 1118.5,277.5 1127.7,279.7 1136.8,281.8 1146.0,283.8 1146.8,303.7 1147.6,323.5 1148.4,343.3 1149.2,363.2 1140.2,360.7 1131.2,358.1 1122.2,355.5 1113.3,352.7 1112.3,333.3 1111.3,313.9 1110.3,294.6" fill="#e2892c"/>
<polygon points="924.6,274.9 938.0,280.3 951.5,285.6 965.0,290.8 978.6,296.0 979.5,306.8 980.4,317.7 981.4,328.5 982.3,339.3 968.9,333.9 955.5,328.4 942.1,322.9 928.7,317.3 927.7,306.7 926.6,296.1 925.6,285.5" fill="#e8cc45"/>
<polygon points="932.4,260.6 941.6,264.2 950.7,267.7 959.9,271.2 969.1,274.7 971.0,296.1 972.9,317.5 974.7,338.9 976.6,360.4 967.6,356.6 958.5,352.8 949.5,349.0 940.5,345.1 938.5,324.0 936.4,302.9 934.4,281.8" fill="#e8cc45"/>
<polygon points="1058.9,384.0 1073.1,389.4 1087.4,394.7 1101.6,399.9 1115.9,405.0 1116.5,415.1 1117.0,425.3 1117.6,435.5 1118.1,445.7 1104.0,440.4 1089.8,434.8 1075.7,429.3 1061.6,423.6 1060.9,413.7 1060.3,403.8 1059.6,393.9" fill="#e69b57"/>
<polygon points="1073.7,378.4 1081.7,381.3 1089.6,384.2 1097.6,387.0 1105.5,389.8 1106.5,406.7 1107.4,423.6 1108.4,440.5 1109.4,457.3 1101.6,454.2 1093.7,451.1 1085.9,448.0 1078.1,444.8 1076.9,428.2 1075.8,411.6 1074.8,395.0" fill="#e69b57"/>
<polygon points="1142.2,285.4 1158.4,288.7 1174.7,291.8 1191.0,294.7 1207.3,297.3 1207.6,311.5 1207.9,325.8 1208.3,340.1 1208.6,354.3 1192.5,351.0 1176.4,347.5 1160.4,343.7 1144.4,339.8 1143.8,326.2 1143.3,312.6 1142.7,299.0" fill="#e2762b"/>
<polygon points="1158.6,273.4 1167.2,275.0 1175.8,276.5 1184.4,277.9 1193.0,279.3 1193.6,303.2 1194.2,327.2 1194.9,351.2 1195.6,375.1 1187.1,373.1 1178.7,371.1 1170.3,369.1 1161.9,366.9 1161.1,343.6 1160.2,320.2 1159.4,296.8" fill="#e2762b"/>
<polygon points="1152.8,471.4 1168.3,476.8 1183.9,482.1 1199.5,487.3 1215.1,492.2 1215.6,506.0 1216.2,519.7 1216.8,533.4 1217.4,547.1 1202.0,541.5 1186.6,535.7 1171.2,529.8 1155.8,523.7 1154.9,510.7 1154.2,497.6 1153.5,484.5" fill="#e47a6b"/>
<polygon points="1161.2,454.9 1171.5,458.2 1181.7,461.5 1191.9,464.7 1202.2,467.9 1202.9,489.9 1203.8,511.9 1204.9,533.8 1206.1,555.8 1196.0,551.9 1186.0,548.0 1175.9,544.1 1165.9,540.1 1164.5,518.8 1163.3,497.5 1162.2,476.2" fill="#e47a6b"/>
<polygon points="1069.2,489.4 1083.1,495.5 1097.0,501.6 1110.9,507.6 1124.9,513.5 1125.8,525.8 1126.8,538.1 1127.8,550.5 1128.9,562.8 1115.0,556.5 1101.1,550.2 1087.3,543.8 1073.5,537.3 1072.4,525.4 1071.3,513.4 1070.2,501.4" fill="#eaa48d"/>
<polygon points="1080.7,489.5 1089.0,493.0 1097.3,496.6 1105.6,500.2 1113.9,503.7 1115.2,520.3 1116.5,536.9 1117.9,553.5 1119.4,570.2 1111.1,566.3 1102.9,562.5 1094.7,558.6 1086.4,554.8 1084.9,538.4 1083.4,522.1 1082.0,505.8" fill="#eaa48d"/>
<polygon points="905.2,153.7 927.8,161.4 950.4,169.0 973.1,176.4 995.8,183.4 997.0,198.3 998.1,213.3 999.3,228.2 1000.5,243.2 978.0,235.6 955.6,227.7 933.3,219.6 911.0,211.4 909.5,196.9 908.1,182.5 906.7,168.1" fill="#e8d018"/>
<polygon points="911.7,154.6 929.1,160.5 946.4,166.4 963.9,172.1 981.4,177.7 982.8,195.6 984.3,213.6 985.7,231.6 987.2,249.6 970.0,243.5 952.8,237.3 935.6,230.9 918.5,224.6 916.8,207.1 915.1,189.6 913.4,172.1" fill="#e8d018"/>
<polygon points="975.0,175.9 996.4,182.5 1018.0,188.9 1039.6,195.0 1061.2,200.9 1062.1,215.6 1063.0,230.3 1063.9,245.0 1064.7,259.7 1043.4,253.2 1022.1,246.4 1000.8,239.5 979.7,232.4 978.5,218.3 977.3,204.2 976.2,190.1" fill="#e8b018"/>
<polygon points="990.5,180.4 1006.6,185.2 1022.7,189.9 1038.8,194.5 1055.0,199.0 1056.1,216.3 1057.1,233.6 1058.2,250.9 1059.3,268.2 1043.4,263.2 1027.5,258.1 1011.6,252.9 995.8,247.7 994.4,230.9 993.1,214.1 991.8,197.3" fill="#e8b018"/>
<polygon points="948.3,491.0 961.1,497.3 973.9,503.5 986.8,509.8 999.6,516.0 1000.7,526.9 1001.8,537.7 1002.9,548.6 1004.0,559.4 991.2,553.0 978.4,546.5 965.6,540.0 952.8,533.5 951.6,522.9 950.5,512.3 949.4,501.6" fill="#f0ddac"/>
<polygon points="952.6,481.7 962.5,486.6 972.5,491.4 982.4,496.2 992.3,500.9 993.9,516.5 995.5,532.0 997.1,547.6 998.7,563.1 988.8,558.1 978.8,553.0 968.9,548.0 959.0,543.0 957.4,527.7 955.8,512.4 954.2,497.0" fill="#f0ddac"/>
<polygon points="887.6,260.9 901.0,266.2 914.4,271.5 927.8,276.8 941.2,282.1 942.3,293.3 943.3,304.5 944.4,315.7 945.4,326.8 932.1,321.3 918.9,315.8 905.6,310.2 892.3,304.7 891.1,293.7 890.0,282.8 888.8,271.8" fill="#e9da43"/>
<polygon points="887.5,247.7 896.8,251.3 906.2,255.0 915.5,258.6 924.9,262.3 926.8,281.7 928.7,301.1 930.6,320.6 932.5,340.0 923.3,336.1 914.0,332.1 904.8,328.2 895.6,324.3 893.5,305.1 891.5,286.0 889.5,266.8" fill="#e9da43"/>
<polygon points="1042.4,586.7 1054.8,593.0 1067.2,599.2 1079.7,605.5 1092.1,611.7 1093.0,621.2 1093.9,630.6 1094.8,640.1 1095.7,649.6 1083.3,643.1 1070.9,636.6 1058.5,630.1 1046.1,623.7 1045.2,614.4 1044.3,605.2 1043.4,596.0" fill="#eec5ce"/>
<polygon points="1045.1,568.8 1053.9,573.1 1062.8,577.5 1071.6,581.8 1080.5,586.2 1082.1,602.9 1083.7,619.5 1085.3,636.2 1087.0,652.9 1078.1,648.2 1069.3,643.6 1060.5,638.9 1051.7,634.3 1050.0,617.9 1048.4,601.5 1046.8,585.1" fill="#eec5ce"/>
<polygon points="916.5,223.0 932.2,228.9 947.9,234.7 963.7,240.5 979.5,246.1 980.4,256.7 981.2,267.3 982.1,277.8 983.0,288.4 967.3,282.5 951.7,276.5 936.1,270.5 920.5,264.4 919.5,254.0 918.5,243.7 917.5,233.4" fill="#e7cc30"/>
<polygon points="928.3,207.9 937.8,211.3 947.4,214.7 957.0,218.2 966.6,221.5 968.2,239.8 969.8,258.1 971.3,276.3 972.9,294.6 963.4,290.9 954.0,287.3 944.6,283.5 935.1,279.8 933.4,261.8 931.7,243.8 930.0,225.8" fill="#e7cc30"/>
<polygon points="1116.0,565.2 1129.8,571.6 1143.6,577.8 1157.5,584.0 1171.3,590.1 1172.4,603.4 1173.5,616.6 1174.6,629.9 1175.8,643.1 1162.0,636.5 1148.2,629.8 1134.5,623.1 1120.7,616.4 1119.5,603.6 1118.3,590.8 1117.2,578.0" fill="#e795a6"/>
<polygon points="1123.1,561.5 1132.9,565.9 1142.7,570.3 1152.4,574.6 1162.2,578.9 1163.5,594.5 1164.8,610.1 1166.1,625.7 1167.5,641.3 1157.8,636.6 1148.0,631.8 1138.3,627.1 1128.6,622.3 1127.2,607.1 1125.9,591.9 1124.5,576.7" fill="#e795a6"/>
<polygon points="1162.7,647.6 1177.1,654.7 1191.6,661.7 1206.0,668.7 1220.5,675.7 1221.4,686.5 1222.2,697.2 1223.1,707.9 1223.9,718.7 1209.5,711.2 1195.1,703.7 1180.7,696.1 1166.3,688.6 1165.4,678.4 1164.5,668.1 1163.6,657.8" fill="#dd83c3"/>
<polygon points="1173.2,628.7 1182.0,632.8 1190.8,636.9 1199.6,641.0 1208.4,645.1 1209.9,663.8 1211.4,682.5 1212.9,701.2 1214.4,719.9 1205.6,715.3 1196.9,710.7 1188.2,706.1 1179.4,701.5 1177.9,683.3 1176.3,665.1 1174.7,646.9" fill="#dd83c3"/>
<polygon points="1033.5,480.4 1046.2,486.1 1058.8,491.7 1071.5,497.4 1084.2,503.0 1085.0,513.0 1085.9,523.1 1086.8,533.2 1087.7,543.2 1075.1,537.4 1062.4,531.5 1049.8,525.6 1037.2,519.6 1036.2,509.8 1035.3,500.0 1034.4,490.2" fill="#ecb691"/>
<polygon points="1039.4,465.7 1047.5,469.2 1055.6,472.8 1063.7,476.3 1071.8,479.8 1073.2,497.0 1074.6,514.2 1076.2,531.3 1077.8,548.5 1069.7,544.7 1061.7,540.9 1053.7,537.1 1045.6,533.3 1044.0,516.4 1042.4,499.5 1040.9,482.6" fill="#ecb691"/>
<polygon points="990.2,506.4 1003.7,512.9 1017.2,519.4 1030.7,525.8 1044.2,532.3 1045.4,543.8 1046.5,555.3 1047.6,566.7 1048.8,578.2 1035.3,571.5 1021.8,564.8 1008.3,558.0 994.8,551.2 993.6,540.0 992.5,528.8 991.3,517.6" fill="#efd0b1"/>
<polygon points="1000.5,504.8 1009.8,509.3 1019.1,513.7 1028.4,518.1 1037.7,522.5 1039.2,537.7 1040.7,552.9 1042.2,568.0 1043.7,583.2 1034.4,578.6 1025.1,573.9 1015.9,569.2 1006.6,564.5 1005.0,549.6 1003.5,534.7 1002.0,519.7" fill="#efd0b1"/>
<polygon points="1074.0,595.1 1088.8,602.4 1103.6,609.8 1118.4,617.1 1133.2,624.4 1134.3,636.1 1135.4,647.9 1136.5,659.6 1137.6,671.3 1122.8,663.6 1108.0,655.9 1093.3,648.2 1078.5,640.5 1077.4,629.2 1076.3,617.8 1075.2,606.4" fill="#e9b0ca"/>
<polygon points="1091.7,597.9 1098.8,601.4 1105.9,604.9 1113.0,608.4 1120.1,611.8 1121.6,627.2 1123.0,642.6 1124.4,658.0 1125.9,673.3 1118.8,669.6 1111.7,665.9 1104.6,662.2 1097.6,658.5 1096.1,643.3 1094.7,628.2 1093.2,613.0" fill="#e9b0ca"/>
<polygon points="1110.3,460.4 1123.0,465.4 1135.8,470.2 1148.6,474.9 1161.4,479.5 1161.9,489.4 1162.4,499.4 1162.9,509.3 1163.5,519.2 1150.8,514.3 1138.2,509.3 1125.5,504.1 1112.9,498.9 1112.2,489.3 1111.5,479.7 1110.9,470.0" fill="#e68d6d"/>
<polygon points="1115.1,453.3 1124.4,456.8 1133.7,460.3 1143.0,463.6 1152.4,466.9 1153.2,482.7 1154.0,498.4 1155.0,514.2 1156.0,529.9 1146.8,526.2 1137.6,522.4 1128.4,518.6 1119.2,514.7 1118.1,499.4 1117.0,484.0 1116.0,468.6" fill="#e68d6d"/>
<polygon points="1162.4,529.0 1174.3,533.7 1186.2,538.2 1198.1,542.8 1210.0,547.2 1210.7,559.8 1211.5,572.3 1212.3,584.8 1213.2,597.3 1201.4,592.4 1189.5,587.4 1177.7,582.4 1165.9,577.3 1165.0,565.2 1164.0,553.2 1163.2,541.1" fill="#e67e86"/>
<polygon points="1164.5,525.1 1174.9,529.1 1185.3,533.1 1195.7,537.0 1206.1,540.9 1207.1,558.0 1208.2,575.0 1209.4,592.1 1210.6,609.1 1200.3,604.7 1190.0,600.2 1179.7,595.7 1169.4,591.2 1168.0,574.7 1166.8,558.2 1165.6,541.7" fill="#e67e86"/>
<polygon points="969.6,344.2 985.5,350.7 1001.4,357.1 1017.3,363.3 1033.3,369.5 1034.1,381.0 1035.0,392.5 1035.9,404.0 1036.7,415.5 1020.9,409.0 1005.1,402.4 989.4,395.7 973.6,388.9 972.6,377.7 971.6,366.6 970.6,355.4" fill="#e9bf5c"/>
<polygon points="983.6,341.1 993.1,344.9 1002.6,348.6 1012.1,352.3 1021.6,356.0 1023.0,374.0 1024.4,392.0 1025.8,410.0 1027.2,428.0 1017.8,424.0 1008.4,420.0 999.1,416.0 989.7,411.9 988.1,394.2 986.6,376.5 985.1,358.8" fill="#e9bf5c"/>
<polygon points="960.8,236.3 976.5,241.9 992.3,247.3 1008.1,252.6 1023.9,257.8 1024.7,269.7 1025.6,281.5 1026.5,293.4 1027.3,305.2 1011.6,299.6 996.0,294.0 980.4,288.3 964.9,282.4 963.8,270.9 962.8,259.3 961.8,247.8" fill="#e6bd30"/>
<polygon points="974.8,229.1 984.4,232.4 994.1,235.7 1003.8,238.8 1013.5,242.0 1014.8,260.1 1016.2,278.3 1017.5,296.4 1018.9,314.6 1009.4,311.1 999.8,307.6 990.3,304.1 980.8,300.5 979.3,282.7 977.8,264.8 976.3,247.0" fill="#e6bd30"/>
<polygon points="1098.6,343.1 1113.4,347.8 1128.2,352.2 1143.1,356.4 1158.1,360.3 1158.5,372.2 1159.0,384.1 1159.5,396.0 1160.0,407.9 1145.2,403.5 1130.5,398.9 1115.8,394.0 1101.2,388.9 1100.5,377.5 1099.9,366.0 1099.2,354.5" fill="#e2873e"/>
<polygon points="1113.1,322.8 1121.8,325.3 1130.5,327.7 1139.2,329.9 1148.0,332.1 1148.9,354.6 1149.8,377.0 1150.8,399.5 1151.8,422.0 1143.2,419.2 1134.7,416.4 1126.2,413.6 1117.7,410.6 1116.5,388.7 1115.3,366.7 1114.2,344.8" fill="#e2873e"/>
<polygon points="1012.1,253.7 1025.5,258.1 1039.0,262.4 1052.4,266.7 1065.9,270.9 1066.6,282.3 1067.3,293.7 1068.0,305.2 1068.7,316.6 1055.4,312.1 1042.0,307.5 1028.7,302.9 1015.4,298.3 1014.6,287.1 1013.7,276.0 1012.9,264.8" fill="#e5aa2d"/>
<polygon points="1023.6,250.7 1032.5,253.5 1041.4,256.3 1050.4,259.1 1059.3,261.9 1060.3,277.4 1061.2,292.8 1062.2,308.3 1063.2,323.8 1054.4,320.8 1045.6,317.8 1036.8,314.7 1028.0,311.6 1026.9,296.4 1025.8,281.1 1024.7,265.9" fill="#e5aa2d"/>
<polygon points="1153.1,349.5 1165.3,352.5 1177.6,355.4 1189.9,358.2 1202.2,360.9 1202.7,376.4 1203.1,391.9 1203.5,407.3 1204.0,422.8 1191.9,419.5 1179.7,416.1 1167.6,412.7 1155.5,409.1 1154.9,394.2 1154.3,379.3 1153.7,364.4" fill="#e1753e"/>
<polygon points="1154.6,339.5 1164.9,341.9 1175.1,344.3 1185.4,346.5 1195.7,348.7 1196.4,371.7 1197.0,394.7 1197.7,417.7 1198.4,440.7 1188.4,437.8 1178.3,434.8 1168.3,431.8 1158.3,428.7 1157.4,406.4 1156.4,384.1 1155.5,361.8" fill="#e1753e"/>
<polygon points="899.3,370.8 911.9,376.4 924.5,382.1 937.1,387.7 949.7,393.4 950.8,404.0 951.8,414.6 952.9,425.2 953.9,435.8 941.4,430.0 928.8,424.1 916.3,418.3 903.8,412.5 902.7,402.0 901.6,391.6 900.4,381.2" fill="#ede06d"/>
<polygon points="899.4,355.6 907.6,359.2 915.7,362.8 923.9,366.4 932.1,370.0 933.6,385.5 935.1,400.9 936.7,416.3 938.3,431.8 930.2,428.0 922.1,424.2 914.0,420.4 905.8,416.6 904.2,401.4 902.6,386.1 901.0,370.9" fill="#ede06d"/>
<polygon points="1012.3,309.5 1026.6,314.6 1041.0,319.7 1055.4,324.8 1069.8,329.7 1070.6,342.4 1071.4,355.1 1072.2,367.8 1073.0,380.5 1058.8,375.2 1044.5,369.8 1030.3,364.4 1016.1,358.9 1015.1,346.5 1014.2,334.2 1013.2,321.8" fill="#e6aa42"/>
<polygon points="1022.5,298.7 1032.6,302.2 1042.6,305.6 1052.7,309.1 1062.8,312.5 1064.1,333.5 1065.5,354.6 1066.9,375.7 1068.3,396.7 1058.4,392.9 1048.5,389.1 1038.6,385.2 1028.7,381.3 1027.2,360.7 1025.6,340.0 1024.0,319.3" fill="#e6aa42"/>
<polygon points="1187.3,303.9 1201.6,306.5 1216.0,308.5 1230.4,309.9 1244.8,311.1 1245.0,326.8 1245.2,342.5 1245.4,358.2 1245.6,373.9 1231.4,371.9 1217.3,369.7 1203.1,367.0 1189.0,363.8 1188.6,348.8 1188.1,333.9 1187.7,318.9" fill="#e05040"/>
<polygon points="1202.2,285.9 1210.8,287.0 1219.6,287.8 1228.3,288.5 1237.0,289.0 1237.3,314.0 1237.6,339.0 1238.0,364.0 1238.4,389.0 1229.9,387.7 1221.4,386.3 1213.0,384.7 1204.5,382.9 1203.8,358.6 1203.3,334.4 1202.7,310.1" fill="#e05040"/>
<polygon points="904.3,417.2 915.2,422.3 926.2,427.5 937.2,432.6 948.2,437.8 949.2,447.8 950.2,457.8 951.2,467.9 952.3,477.9 941.3,472.6 930.4,467.3 919.4,462.0 908.5,456.7 907.4,446.8 906.4,436.9 905.3,427.1" fill="#efe383"/>
<polygon points="909.5,410.5 916.8,413.9 924.1,417.3 931.4,420.7 938.7,424.1 940.3,439.7 941.9,455.3 943.5,470.9 945.1,486.5 937.9,482.9 930.6,479.3 923.3,475.8 916.0,472.2 914.4,456.8 912.8,441.4 911.1,426.0" fill="#efe383"/>
<polygon points="1203.1,624.8 1216.1,630.5 1229.0,636.2 1242.0,641.8 1255.0,647.3 1256.7,671.2 1258.4,695.0 1260.2,718.9 1261.9,742.8 1249.0,736.1 1236.1,729.3 1223.3,722.6 1210.4,715.8 1208.6,693.1 1206.7,670.3 1204.9,647.5" fill="#d068d0"/>
<polygon points="1217.4,619.9 1225.6,623.4 1233.8,626.8 1242.0,630.2 1250.1,633.5 1252.0,660.9 1254.0,688.2 1256.0,715.5 1258.0,742.9 1249.9,738.6 1241.8,734.4 1233.7,730.1 1225.7,725.9 1223.6,699.4 1221.5,672.9 1219.4,646.4" fill="#d068d0"/>
<polygon points="1076.0,544.8 1089.3,551.1 1102.6,557.3 1116.0,563.4 1129.3,569.6 1130.4,581.9 1131.5,594.2 1132.6,606.5 1133.8,618.8 1120.4,612.3 1107.1,605.8 1093.8,599.2 1080.5,592.7 1079.4,580.7 1078.2,568.7 1077.1,556.8" fill="#eaaaab"/>
<polygon points="1087.3,545.1 1094.4,548.3 1101.6,551.6 1108.7,554.9 1115.8,558.2 1117.3,574.8 1118.8,591.5 1120.3,608.1 1121.9,624.8 1114.8,621.3 1107.7,617.7 1100.6,614.2 1093.5,610.7 1092.0,594.3 1090.4,577.9 1088.9,561.5" fill="#eaaaab"/>
<polygon points="1200.7,377.2 1211.9,379.6 1223.2,381.7 1234.5,383.5 1245.8,385.2 1246.2,408.8 1246.5,432.4 1246.9,456.0 1247.3,479.6 1236.3,476.8 1225.3,474.0 1214.3,471.0 1203.3,467.8 1202.6,445.2 1202.0,422.5 1201.3,399.9" fill="#e4586c"/>
<polygon points="1205.9,361.4 1214.6,363.0 1223.3,364.4 1232.0,365.7 1240.7,366.8 1241.2,396.9 1241.7,427.0 1242.3,457.1 1242.9,487.2 1234.4,485.0 1226.0,482.8 1217.6,480.5 1209.1,478.0 1208.3,448.9 1207.5,419.7 1206.7,390.6" fill="#e4586c"/>
<polygon points="910.2,472.8 921.5,478.3 932.8,483.9 944.2,489.4 955.5,495.0 956.5,504.8 957.5,514.5 958.5,524.3 959.6,534.1 948.2,528.3 936.9,522.6 925.6,516.9 914.3,511.2 913.3,501.6 912.2,492.0 911.2,482.4" fill="#f1e6a0"/>
<polygon points="912.7,462.7 921.2,466.8 929.6,471.0 938.1,475.1 946.5,479.2 948.1,494.2 949.6,509.2 951.2,524.3 952.8,539.3 944.4,535.0 935.9,530.7 927.5,526.4 919.0,522.1 917.4,507.3 915.9,492.4 914.3,477.6" fill="#f1e6a0"/>
<polygon points="893.4,314.6 904.8,319.4 916.2,324.2 927.6,329.1 939.1,333.9 940.2,345.1 941.2,356.3 942.3,367.5 943.4,378.7 932.1,373.7 920.7,368.7 909.4,363.7 898.1,358.7 896.9,347.7 895.7,336.7 894.5,325.6" fill="#ebdd57"/>
<polygon points="899.7,309.2 907.8,312.6 915.8,316.0 923.9,319.4 932.0,322.8 933.6,339.4 935.3,356.0 936.9,372.6 938.5,389.3 930.5,385.7 922.5,382.1 914.6,378.5 906.6,374.9 904.8,358.5 903.1,342.1 901.4,325.7" fill="#ebdd57"/>
<polygon points="1035.1,530.4 1048.2,536.6 1061.2,542.8 1074.3,549.0 1087.4,555.2 1088.5,567.1 1089.6,578.9 1090.7,590.8 1091.9,602.7 1078.8,596.2 1065.8,589.8 1052.8,583.3 1039.7,576.7 1038.6,565.2 1037.4,553.6 1036.3,542.0" fill="#edbdaf"/>
<polygon points="1044.0,524.8 1052.8,529.0 1061.7,533.1 1070.5,537.2 1079.4,541.4 1081.0,559.3 1082.7,577.2 1084.5,595.1 1086.2,613.0 1077.4,608.5 1068.6,604.1 1059.7,599.6 1050.9,595.1 1049.2,577.6 1047.4,560.0 1045.7,542.4" fill="#edbdaf"/>
<polygon points="988.3,553.2 1004.5,561.3 1020.6,569.4 1036.7,577.5 1052.9,585.6 1054.1,597.6 1055.3,609.5 1056.5,621.4 1057.6,633.4 1041.5,624.9 1025.4,616.4 1009.3,608.0 993.2,599.5 992.0,587.9 990.8,576.3 989.5,564.7" fill="#f1d8d0"/>
<polygon points="1001.8,555.0 1010.9,559.5 1019.9,564.0 1028.9,568.5 1037.9,573.0 1039.3,587.3 1040.8,601.6 1042.2,615.8 1043.6,630.1 1034.6,625.3 1025.6,620.6 1016.6,615.9 1007.6,611.1 1006.2,597.1 1004.7,583.1 1003.3,569.0" fill="#f1d8d0"/>
<polygon points="937.8,433.9 952.8,440.9 967.8,447.9 982.8,454.9 997.8,461.8 998.8,472.4 999.8,483.0 1000.9,493.5 1001.9,504.1 987.0,496.9 972.0,489.7 957.0,482.5 942.1,475.2 941.0,464.9 939.9,454.5 938.9,444.2" fill="#eed88e"/>
<polygon points="950.8,421.1 959.2,424.9 967.7,428.8 976.2,432.7 984.7,436.6 986.4,454.8 988.2,473.0 990.0,491.2 991.9,509.4 983.4,505.3 975.0,501.2 966.5,497.1 958.1,492.9 956.2,475.0 954.4,457.0 952.5,439.0" fill="#eed88e"/>
<polygon points="1161.6,590.0 1175.4,596.0 1189.1,602.1 1202.9,608.0 1216.6,614.0 1217.4,624.9 1218.3,635.8 1219.1,646.7 1219.9,657.7 1206.3,651.3 1192.6,644.8 1178.9,638.4 1165.2,631.9 1164.3,621.4 1163.4,610.9 1162.5,600.4" fill="#e381a3"/>
<polygon points="1167.5,573.4 1177.3,577.6 1187.1,581.7 1196.9,585.8 1206.7,589.9 1208.2,610.1 1209.8,630.3 1211.3,650.5 1213.0,670.7 1203.2,666.0 1193.5,661.3 1183.8,656.6 1174.1,651.8 1172.4,632.2 1170.7,612.6 1169.1,593.0" fill="#e381a3"/>
<polygon points="1148.3,227.3 1162.9,229.6 1177.5,231.6 1192.1,233.4 1206.8,235.0 1207.1,249.5 1207.3,264.1 1207.6,278.7 1207.9,293.3 1193.5,291.1 1179.1,288.6 1164.7,286.0 1150.4,283.2 1149.9,269.2 1149.4,255.3 1148.9,241.3" fill="#e88018"/>
<polygon points="1159.4,221.5 1169.1,222.8 1178.8,224.1 1188.5,225.2 1198.2,226.3 1198.6,247.2 1199.1,268.1 1199.6,288.9 1200.1,309.8 1190.6,308.1 1181.1,306.3 1171.6,304.5 1162.1,302.6 1161.4,282.3 1160.7,262.1 1160.1,241.8" fill="#e88018"/>
<polygon points="1193.4,235.6 1206.0,237.0 1218.7,237.8 1231.4,238.1 1244.1,238.3 1244.3,253.4 1244.4,268.5 1244.5,283.6 1244.7,298.7 1232.2,297.8 1219.7,296.8 1207.2,295.4 1194.8,293.5 1194.5,279.0 1194.1,264.6 1193.8,250.1" fill="#ea5010"/>
<polygon points="1205.3,227.0 1214.1,227.5 1222.9,227.8 1231.7,227.9 1240.5,227.9 1240.7,247.2 1240.9,266.4 1241.1,285.6 1241.3,304.9 1232.7,304.2 1224.1,303.5 1215.5,302.7 1206.9,301.6 1206.5,282.9 1206.1,264.3 1205.7,245.6" fill="#ea5010"/>
<polygon points="979.7,398.4 992.4,403.8 1005.1,409.3 1017.8,414.6 1030.5,420.0 1031.5,432.9 1032.6,445.9 1033.7,458.9 1034.8,471.9 1022.2,466.3 1009.6,460.6 997.0,454.9 984.4,449.1 983.2,436.4 982.0,423.7 980.9,411.0" fill="#ebc376"/>
<polygon points="986.9,399.2 997.3,403.7 1007.7,408.1 1018.1,412.4 1028.5,416.8 1029.8,433.9 1031.3,451.0 1032.7,468.2 1034.3,485.3 1024.0,480.6 1013.7,475.9 1003.4,471.2 993.1,466.4 991.5,449.6 989.9,432.8 988.4,416.0" fill="#ebc376"/>
<polygon points="881.9,206.8 894.1,211.3 906.3,215.9 918.5,220.4 930.7,224.9 931.7,235.3 932.6,245.7 933.6,256.0 934.6,266.4 922.5,261.7 910.4,257.0 898.3,252.2 886.2,247.5 885.1,237.3 884.1,227.2 883.0,217.0" fill="#e8d82e"/>
<polygon points="881.1,188.8 891.1,192.4 901.0,196.1 911.0,199.7 921.0,203.3 922.9,224.0 924.9,244.6 926.9,265.3 928.9,285.9 919.1,282.0 909.3,278.1 899.5,274.1 889.7,270.2 887.6,249.9 885.4,229.5 883.2,209.2" fill="#e8d82e"/>
<polygon points="1018.7,418.0 1033.6,424.3 1048.5,430.5 1063.4,436.6 1078.3,442.7 1079.2,455.0 1080.1,467.4 1081.0,479.7 1082.0,492.0 1067.2,485.5 1052.4,479.0 1037.6,472.5 1022.8,465.9 1021.8,453.9 1020.7,441.9 1019.7,430.0" fill="#eab074"/>
<polygon points="1036.1,413.4 1043.4,416.4 1050.6,419.3 1057.9,422.3 1065.1,425.2 1066.5,444.2 1067.9,463.2 1069.4,482.2 1070.9,501.2 1063.8,498.0 1056.6,494.8 1049.5,491.6 1042.3,488.3 1040.7,469.6 1039.1,450.9 1037.6,432.1" fill="#eab074"/>
<polygon points="972.7,298.1 986.7,303.5 1000.6,308.7 1014.6,313.8 1028.7,318.9 1029.5,330.9 1030.4,343.0 1031.3,355.0 1032.2,367.1 1018.4,361.7 1004.5,356.3 990.6,350.8 976.8,345.2 975.8,333.4 974.8,321.7 973.7,309.9" fill="#e7bd45"/>
<polygon points="978.9,279.5 988.9,283.2 998.9,286.8 1008.9,290.4 1018.9,293.9 1020.5,315.0 1022.1,336.1 1023.7,357.1 1025.3,378.2 1015.4,374.3 1005.6,370.4 995.8,366.4 986.0,362.4 984.2,341.7 982.4,321.0 980.7,300.3" fill="#e7bd45"/>
<polygon points="932.0,377.1 946.5,383.5 961.0,389.9 975.5,396.3 990.1,402.6 991.1,414.5 992.2,426.4 993.3,438.3 994.4,450.2 979.9,443.6 965.5,437.0 951.1,430.3 936.7,423.6 935.5,412.0 934.3,400.3 933.2,388.7" fill="#ecd374"/>
<polygon points="942.4,380.4 952.2,384.7 962.0,389.0 971.8,393.3 981.6,397.5 983.1,414.5 984.7,431.4 986.2,448.4 987.9,465.3 978.2,460.8 968.5,456.2 958.8,451.7 949.1,447.1 947.4,430.4 945.7,413.7 944.1,397.0" fill="#ecd374"/>
<polygon points="1050.2,205.9 1078.5,213.6 1107.0,220.6 1135.7,226.5 1164.6,231.2 1165.0,243.5 1165.4,255.8 1165.8,268.2 1166.2,280.5 1137.6,274.9 1109.3,268.2 1081.1,260.5 1053.2,252.2 1052.4,240.6 1051.7,229.1 1051.0,217.5" fill="#e89818"/>
<polygon points="1060.9,200.5 1083.5,206.4 1106.3,211.8 1129.2,216.5 1152.3,220.4 1153.0,238.8 1153.6,257.3 1154.3,275.7 1155.0,294.1 1132.3,289.1 1109.8,283.5 1087.4,277.2 1065.1,270.5 1064.1,253.0 1063.0,235.5 1062.0,218.0" fill="#e89818"/>
<polygon points="1106.9,512.4 1120.9,518.5 1135.0,524.4 1149.1,530.2 1163.3,535.9 1164.0,546.8 1164.8,557.7 1165.7,568.6 1166.5,579.5 1152.5,573.4 1138.4,567.2 1124.4,560.9 1110.4,554.5 1109.5,544.0 1108.6,533.5 1107.7,522.9" fill="#e89188"/>
<polygon points="1121.7,507.4 1129.9,510.8 1138.1,514.1 1146.3,517.4 1154.6,520.7 1155.7,537.6 1157.0,554.6 1158.3,571.5 1159.7,588.5 1151.5,584.8 1143.4,581.2 1135.2,577.5 1127.1,573.7 1125.7,557.1 1124.3,540.5 1122.9,524.0" fill="#e89188"/>
<polygon points="915.1,519.1 927.6,525.5 940.1,531.8 952.6,538.2 965.1,544.6 966.2,554.4 967.2,564.3 968.2,574.1 969.3,584.0 956.8,577.4 944.2,570.9 931.7,564.3 919.2,557.8 918.2,548.1 917.2,538.4 916.1,528.8" fill="#f3eac0"/>
<polygon points="918.7,507.1 926.0,510.8 933.4,514.5 940.7,518.2 948.1,521.9 949.7,537.2 951.3,552.5 952.9,567.8 954.5,583.2 947.1,579.3 939.8,575.4 932.4,571.6 925.1,567.7 923.5,552.5 921.9,537.4 920.3,522.3" fill="#f3eac0"/>
<polygon points="1022.3,365.4 1033.9,370.0 1045.6,374.5 1057.3,378.9 1069.1,383.3 1069.9,396.6 1070.8,409.8 1071.7,423.1 1072.6,436.4 1061.0,431.7 1049.4,426.9 1037.8,422.1 1026.3,417.3 1025.3,404.3 1024.2,391.4 1023.2,378.4" fill="#e8ac59"/>
<polygon points="1032.6,359.0 1041.0,362.2 1049.4,365.4 1057.8,368.5 1066.2,371.6 1067.3,388.2 1068.4,404.9 1069.5,421.5 1070.7,438.1 1062.4,434.7 1054.0,431.3 1045.7,427.9 1037.4,424.4 1036.2,408.1 1035.0,391.7 1033.8,375.4" fill="#e8ac59"/>
<polygon points="978.0,448.9 993.7,456.1 1009.4,463.3 1025.2,470.4 1040.9,477.4 1041.9,488.4 1042.9,499.3 1043.9,510.3 1044.9,521.2 1029.3,513.9 1013.6,506.5 997.9,499.0 982.3,491.5 981.2,480.9 980.1,470.2 979.1,459.5" fill="#edc993"/>
<polygon points="995.7,452.1 1003.4,455.6 1011.1,459.1 1018.8,462.5 1026.6,466.0 1028.0,481.8 1029.5,497.6 1031.0,513.3 1032.5,529.1 1024.8,525.5 1017.2,521.8 1009.5,518.1 1001.8,514.4 1000.3,498.8 998.7,483.2 997.2,467.7" fill="#edc993"/>
<polygon points="643.7,640.3 651.3,638.7 658.9,637.1 666.5,635.5 674.1,633.9 681.7,632.2 689.3,630.6 697.6,636.3 705.8,642.1 714.1,647.7 722.4,653.3 730.9,658.7 739.3,664.2 732.0,666.2 724.7,668.3 717.4,670.4 710.1,672.4 702.8,674.5 695.5,676.6 686.7,670.7 677.9,664.8 669.3,658.8 660.7,652.7 652.2,646.5" fill="#4fbcc9" stroke="#4fbcc9"/>
<polygon points="689.3,630.6 696.9,629.0 704.5,627.3 712.1,625.7 719.8,624.0 727.4,622.3 734.9,620.6 742.9,625.9 750.8,631.2 758.8,636.4 766.9,641.5 775.0,646.5 783.1,651.5 775.8,653.7 768.5,655.8 761.2,657.9 753.9,660.0 746.6,662.1 739.3,664.2 730.9,658.7 722.4,653.3 714.1,647.7 705.8,642.1 697.6,636.3" fill="#6bbdc9" stroke="#6bbdc9"/>
<polygon points="734.9,620.6 742.5,618.9 750.1,617.2 757.7,615.5 765.3,613.7 772.8,611.8 780.4,609.9 788.0,614.7 795.7,619.5 803.4,624.3 811.1,629.0 818.9,633.6 826.7,638.2 819.5,640.6 812.2,642.8 804.9,645.0 797.7,647.2 790.4,649.4 783.1,651.5 775.0,646.5 766.9,641.5 758.8,636.4 750.8,631.2 742.9,625.9" fill="#86bfc9" stroke="#86bfc9"/>
<polygon points="780.4,609.9 787.9,607.9 795.4,605.9 802.9,603.8 810.4,601.7 817.8,599.4 825.3,597.1 832.7,601.5 840.1,605.9 847.5,610.3 854.9,614.6 862.4,618.9 869.9,623.1 862.7,625.8 855.5,628.4 848.4,630.9 841.2,633.4 833.9,635.9 826.7,638.2 818.9,633.6 811.1,629.0 803.4,624.3 795.7,619.5 788.0,614.7" fill="#9dc1c9" stroke="#9dc1c9"/>
<polygon points="825.3,597.1 833.2,594.6 841.2,592.1 849.1,589.5 857.0,586.9 865.0,584.4 872.9,581.8 880.0,585.8 887.1,589.8 894.2,593.7 901.4,597.7 908.5,601.6 915.7,605.5 908.1,608.5 900.4,611.4 892.8,614.4 885.1,617.3 877.5,620.2 869.9,623.1 862.4,618.9 854.9,614.6 847.5,610.3 840.1,605.9 832.7,601.5" fill="#b4c3c9" stroke="#b4c3c9"/>
<polygon points="872.9,581.8 880.8,579.1 888.6,576.4 896.5,573.5 904.3,570.7 912.2,567.8 920.0,565.0 926.8,568.6 933.7,572.2 940.5,575.8 947.4,579.4 954.2,583.0 961.0,586.6 953.5,589.8 945.9,593.0 938.4,596.2 930.8,599.3 923.3,602.5 915.7,605.5 908.5,601.6 901.4,597.7 894.2,593.7 887.1,589.8 880.0,585.8" fill="#c7c7cc" stroke="#c7c7cc"/>
<polygon points="695.5,676.6 702.8,674.5 710.1,672.4 717.4,670.4 724.7,668.3 732.0,666.2 739.3,664.2 749.1,670.5 759.0,676.8 768.9,683.1 778.8,689.4 788.7,695.7 798.6,701.9 791.7,704.4 784.8,707.0 777.9,709.5 771.0,712.0 764.0,714.6 757.1,717.1 746.8,710.5 736.5,703.7 726.2,697.0 715.9,690.2 705.7,683.4" fill="#4db4cb" stroke="#4db4cb"/>
<polygon points="739.3,664.2 746.6,662.1 753.9,660.0 761.2,657.9 768.5,655.8 775.8,653.7 783.1,651.5 792.6,657.4 802.0,663.3 811.5,669.1 821.0,674.9 830.5,680.7 840.1,686.4 833.2,689.0 826.3,691.6 819.4,694.2 812.4,696.7 805.5,699.3 798.6,701.9 788.7,695.7 778.8,689.4 768.9,683.1 759.0,676.8 749.1,670.5" fill="#69b4cb" stroke="#69b4cb"/>
<polygon points="783.1,651.5 790.4,649.4 797.7,647.2 804.9,645.0 812.2,642.8 819.5,640.6 826.7,638.2 835.8,643.6 844.9,649.0 854.0,654.4 863.1,659.7 872.2,665.1 881.4,670.4 874.5,673.2 867.6,675.9 860.8,678.5 853.9,681.2 847.0,683.8 840.1,686.4 830.5,680.7 821.0,674.9 811.5,669.1 802.0,663.3 792.6,657.4" fill="#86b5cb" stroke="#86b5cb"/>
<polygon points="826.7,638.2 833.9,635.9 841.2,633.4 848.4,630.9 855.5,628.4 862.7,625.8 869.9,623.1 878.6,628.1 887.3,633.1 896.1,638.1 904.8,643.0 913.6,648.0 922.3,652.9 915.5,655.9 908.7,658.9 901.9,661.9 895.1,664.8 888.2,667.6 881.4,670.4 872.2,665.1 863.1,659.7 854.0,654.4 844.9,649.0 835.8,643.6" fill="#9eb5cb" stroke="#9eb5cb"/>
<polygon points="869.9,623.1 877.5,620.2 885.1,617.3 892.8,614.4 900.4,611.4 908.1,608.5 915.7,605.5 924.0,610.1 932.4,614.7 940.7,619.2 949.1,623.8 957.4,628.3 965.8,632.9 958.6,636.3 951.3,639.6 944.1,642.9 936.8,646.2 929.6,649.6 922.3,652.9 913.6,648.0 904.8,643.0 896.1,638.1 887.3,633.1 878.6,628.1" fill="#b6b6cb" stroke="#b6b6cb"/>
<polygon points="915.7,605.5 923.3,602.5 930.8,599.3 938.4,596.2 945.9,593.0 953.5,589.8 961.0,586.6 969.0,590.8 977.0,595.0 985.0,599.2 993.0,603.4 1000.9,607.6 1008.9,611.8 1001.7,615.3 994.6,618.9 987.4,622.4 980.2,626.0 973.0,629.4 965.8,632.9 957.4,628.3 949.1,623.8 940.7,619.2 932.4,614.7 924.0,610.1" fill="#c9b9ce" stroke="#c9b9ce"/>
<polygon points="757.1,717.1 764.0,714.6 771.0,712.0 777.9,709.5 784.8,707.0 791.7,704.4 798.6,701.9 810.0,708.9 821.5,715.9 833.0,722.7 844.5,729.6 856.0,736.3 867.6,743.1 861.2,746.1 854.8,749.1 848.3,752.2 841.9,755.2 835.5,758.2 829.0,761.2 817.0,754.0 804.9,746.8 792.9,739.5 780.9,732.1 769.0,724.7" fill="#4aa9cd" stroke="#4aa9cd"/>
<polygon points="798.6,701.9 805.5,699.3 812.4,696.7 819.4,694.2 826.3,691.6 833.2,689.0 840.1,686.4 851.0,693.0 862.0,699.4 873.0,705.8 884.0,712.2 895.1,718.5 906.2,724.8 899.8,727.9 893.3,730.9 886.9,734.0 880.5,737.0 874.1,740.0 867.6,743.1 856.0,736.3 844.5,729.6 833.0,722.7 821.5,715.9 810.0,708.9" fill="#69a8cd" stroke="#69a8cd"/>
<polygon points="840.1,686.4 847.0,683.8 853.9,681.2 860.8,678.5 867.6,675.9 874.5,673.2 881.4,670.4 891.9,676.4 902.4,682.4 912.9,688.4 923.5,694.3 934.0,700.2 944.6,706.0 938.2,709.2 931.8,712.4 925.4,715.5 919.0,718.6 912.6,721.7 906.2,724.8 895.1,718.5 884.0,712.2 873.0,705.8 862.0,699.4 851.0,693.0" fill="#87a7cd" stroke="#87a7cd"/>
<polygon points="881.4,670.4 888.2,667.6 895.1,664.8 901.9,661.9 908.7,658.9 915.5,655.9 922.3,652.9 932.4,658.5 942.4,664.1 952.5,669.6 962.6,675.1 972.7,680.6 982.8,686.1 976.4,689.5 970.1,692.9 963.8,696.2 957.4,699.5 951.0,702.8 944.6,706.0 934.0,700.2 923.5,694.3 912.9,688.4 902.4,682.4 891.9,676.4" fill="#a1a7cd" stroke="#a1a7cd"/>
<polygon points="922.3,652.9 929.6,649.6 936.8,646.2 944.1,642.9 951.3,639.6 958.6,636.3 965.8,632.9 975.4,638.1 985.0,643.2 994.5,648.4 1004.1,653.5 1013.7,658.6 1023.4,663.8 1016.6,667.5 1009.8,671.2 1003.1,674.9 996.3,678.7 989.5,682.4 982.8,686.1 972.7,680.6 962.6,675.1 952.5,669.6 942.4,664.1 932.4,658.5" fill="#baa6ce" stroke="#baa6ce"/>
<polygon points="965.8,632.9 973.0,629.4 980.2,626.0 987.4,622.4 994.6,618.9 1001.7,615.3 1008.9,611.8 1018.0,616.6 1027.2,621.4 1036.3,626.2 1045.4,631.0 1054.5,635.8 1063.6,640.6 1056.9,644.5 1050.2,648.4 1043.5,652.3 1036.8,656.1 1030.1,660.0 1023.4,663.8 1013.7,658.6 1004.1,653.5 994.5,648.4 985.0,643.2 975.4,638.1" fill="#cba8cf" stroke="#cba8cf"/>
<polygon points="829.0,761.2 835.5,758.2 841.9,755.2 848.3,752.2 854.8,749.1 861.2,746.1 867.6,743.1 879.2,749.8 890.9,756.5 902.5,763.1 914.1,769.7 925.8,776.3 937.5,782.9 931.6,786.3 925.7,789.8 919.8,793.3 913.9,796.7 907.9,800.2 902.0,803.7 889.8,796.7 877.6,789.7 865.4,782.6 853.3,775.5 841.2,768.4" fill="#479dd0" stroke="#479dd0"/>
<polygon points="867.6,743.1 874.1,740.0 880.5,737.0 886.9,734.0 893.3,730.9 899.8,727.9 906.2,724.8 917.3,731.0 928.4,737.3 939.5,743.5 950.7,749.7 961.8,755.8 973.0,762.0 967.1,765.5 961.2,769.0 955.3,772.4 949.4,775.9 943.4,779.4 937.5,782.9 925.8,776.3 914.1,769.7 902.5,763.1 890.9,756.5 879.2,749.8" fill="#689ad0" stroke="#689ad0"/>
<polygon points="906.2,724.8 912.6,721.7 919.0,718.6 925.4,715.5 931.8,712.4 938.2,709.2 944.6,706.0 955.2,711.9 965.8,717.7 976.5,723.5 987.1,729.3 997.8,735.0 1008.4,740.8 1002.5,744.3 996.6,747.9 990.7,751.4 984.8,755.0 978.9,758.5 973.0,762.0 961.8,755.8 950.7,749.7 939.5,743.5 928.4,737.3 917.3,731.0" fill="#8a98d0" stroke="#8a98d0"/>
<polygon points="944.6,706.0 951.0,702.8 957.4,699.5 963.8,696.2 970.1,692.9 976.4,689.5 982.8,686.1 992.9,691.6 1003.0,697.0 1013.1,702.5 1023.3,707.9 1033.4,713.3 1043.6,718.7 1037.8,722.4 1031.9,726.2 1026.0,729.9 1020.2,733.5 1014.3,737.2 1008.4,740.8 997.8,735.0 987.1,729.3 976.5,723.5 965.8,717.7 955.2,711.9" fill="#a596d0" stroke="#a596d0"/>
<polygon points="982.8,686.1 989.5,682.4 996.3,678.7 1003.1,674.9 1009.8,671.2 1016.6,667.5 1023.4,663.8 1033.0,668.9 1042.6,674.0 1052.2,679.1 1061.8,684.2 1071.4,689.3 1081.1,694.4 1074.8,698.4 1068.6,702.5 1062.3,706.5 1056.1,710.6 1049.8,714.7 1043.6,718.7 1033.4,713.3 1023.3,707.9 1013.1,702.5 1003.0,697.0 992.9,691.6" fill="#be94d0" stroke="#be94d0"/>
<polygon points="1023.4,663.8 1030.1,660.0 1036.8,656.1 1043.5,652.3 1050.2,648.4 1056.9,644.5 1063.6,640.6 1072.8,645.4 1081.9,650.2 1091.0,655.0 1100.1,659.8 1109.2,664.6 1118.4,669.4 1112.2,673.6 1105.9,677.8 1099.7,681.9 1093.5,686.1 1087.3,690.2 1081.1,694.4 1071.4,689.3 1061.8,684.2 1052.2,679.1 1042.6,674.0 1033.0,668.9" fill="#cd94d0" stroke="#cd94d0"/>
<polygon points="902.0,803.7 907.9,800.2 913.9,796.7 919.8,793.3 925.7,789.8 931.6,786.3 937.5,782.9 947.8,788.6 958.0,794.2 968.3,799.9 978.6,805.5 989.0,811.0 999.3,816.5 993.9,820.3 988.4,824.2 983.0,828.0 977.6,831.8 972.1,835.6 966.7,839.4 955.8,833.6 945.0,827.7 934.2,821.7 923.5,815.7 912.7,809.7" fill="#5d8cd3" stroke="#5d8cd3"/>
<polygon points="937.5,782.9 943.4,779.4 949.4,775.9 955.3,772.4 961.2,769.0 967.1,765.5 973.0,762.0 982.8,767.3 992.6,772.6 1002.4,777.9 1012.3,783.2 1022.1,788.4 1032.0,793.6 1026.6,797.4 1021.1,801.3 1015.7,805.1 1010.2,808.9 1004.8,812.7 999.3,816.5 989.0,811.0 978.6,805.5 968.3,799.9 958.0,794.2 947.8,788.6" fill="#7e8ad1" stroke="#7e8ad1"/>
<polygon points="973.0,762.0 978.9,758.5 984.8,755.0 990.7,751.4 996.6,747.9 1002.5,744.3 1008.4,740.8 1017.7,745.8 1027.1,750.8 1036.5,755.7 1045.8,760.7 1055.2,765.6 1064.6,770.5 1059.2,774.4 1053.8,778.2 1048.3,782.1 1042.9,785.9 1037.4,789.8 1032.0,793.6 1022.1,788.4 1012.3,783.2 1002.4,777.9 992.6,772.6 982.8,767.3" fill="#9f87d0" stroke="#9f87d0"/>
<polygon points="1008.4,740.8 1014.3,737.2 1020.2,733.5 1026.0,729.9 1031.9,726.2 1037.8,722.4 1043.6,718.7 1052.5,723.4 1061.4,728.1 1070.3,732.8 1079.2,737.5 1088.1,742.1 1097.1,746.7 1091.7,750.7 1086.3,754.7 1080.9,758.7 1075.5,762.6 1070.0,766.6 1064.6,770.5 1055.2,765.6 1045.8,760.7 1036.5,755.7 1027.1,750.8 1017.7,745.8" fill="#b485d0" stroke="#b485d0"/>
<polygon points="1043.6,718.7 1049.8,714.7 1056.1,710.6 1062.3,706.5 1068.6,702.5 1074.8,698.4 1081.1,694.4 1089.5,698.8 1097.9,703.2 1106.4,707.7 1114.8,712.1 1123.3,716.5 1131.7,720.9 1126.0,725.2 1120.2,729.5 1114.4,733.8 1108.6,738.1 1102.9,742.4 1097.1,746.7 1088.1,742.1 1079.2,737.5 1070.3,732.8 1061.4,728.1 1052.5,723.4" fill="#c783d0" stroke="#c783d0"/>
<polygon points="1081.1,694.4 1087.3,690.2 1093.5,686.1 1099.7,681.9 1105.9,677.8 1112.2,673.6 1118.4,669.4 1126.3,673.6 1134.3,677.8 1142.3,682.0 1150.3,686.2 1158.3,690.4 1166.2,694.6 1160.5,699.0 1154.7,703.4 1149.0,707.8 1143.3,712.2 1137.5,716.5 1131.7,720.9 1123.3,716.5 1114.8,712.1 1106.4,707.7 1097.9,703.2 1089.5,698.8" fill="#d083d0" stroke="#d083d0"/>
<polygon points="966.7,839.4 972.1,835.6 977.6,831.8 983.0,828.0 988.4,824.2 993.9,820.3 999.3,816.5 1009.7,822.0 1020.1,827.4 1030.5,832.9 1040.9,838.2 1051.4,843.6 1061.8,849.0 1056.9,853.1 1051.9,857.2 1047.0,861.3 1042.0,865.5 1037.0,869.6 1032.1,873.7 1021.2,868.0 1010.2,862.3 999.3,856.6 988.4,850.9 977.5,845.2" fill="#757dd5" stroke="#757dd5"/>
<polygon points="999.3,816.5 1004.8,812.7 1010.2,808.9 1015.7,805.1 1021.1,801.3 1026.6,797.4 1032.0,793.6 1041.9,798.8 1051.8,803.9 1061.7,809.0 1071.7,814.1 1081.6,819.2 1091.5,824.3 1086.6,828.4 1081.6,832.5 1076.7,836.6 1071.7,840.7 1066.8,844.9 1061.8,849.0 1051.4,843.6 1040.9,838.2 1030.5,832.9 1020.1,827.4 1009.7,822.0" fill="#947bd2" stroke="#947bd2"/>
<polygon points="1032.0,793.6 1037.4,789.8 1042.9,785.9 1048.3,782.1 1053.8,778.2 1059.2,774.4 1064.6,770.5 1074.0,775.3 1083.5,780.2 1092.9,785.0 1102.3,789.8 1111.8,794.6 1121.2,799.4 1116.3,803.6 1111.3,807.7 1106.4,811.9 1101.4,816.0 1096.5,820.1 1091.5,824.3 1081.6,819.2 1071.7,814.1 1061.7,809.0 1051.8,803.9 1041.9,798.8" fill="#b379d0" stroke="#b379d0"/>
<polygon points="1064.6,770.5 1070.0,766.6 1075.5,762.6 1080.9,758.7 1086.3,754.7 1091.7,750.7 1097.1,746.7 1106.0,751.4 1115.0,756.0 1123.9,760.6 1132.9,765.1 1141.9,769.7 1150.9,774.3 1145.9,778.5 1141.0,782.7 1136.1,786.9 1131.1,791.1 1126.2,795.3 1121.2,799.4 1111.8,794.6 1102.3,789.8 1092.9,785.0 1083.5,780.2 1074.0,775.3" fill="#c177d0" stroke="#c177d0"/>
<polygon points="1097.1,746.7 1102.9,742.4 1108.6,738.1 1114.4,733.8 1120.2,729.5 1126.0,725.2 1131.7,720.9 1140.2,725.3 1148.7,729.7 1157.1,734.0 1165.6,738.4 1174.1,742.8 1182.5,747.2 1177.2,751.7 1172.0,756.2 1166.7,760.7 1161.4,765.3 1156.1,769.8 1150.9,774.3 1141.9,769.7 1132.9,765.1 1123.9,760.6 1115.0,756.0 1106.0,751.4" fill="#cd75d0" stroke="#cd75d0"/>
<polygon points="1131.7,720.9 1137.5,716.5 1143.3,712.2 1149.0,707.8 1154.7,703.4 1160.5,699.0 1166.2,694.6 1174.2,698.8 1182.2,703.0 1190.2,707.2 1198.2,711.4 1206.1,715.6 1214.1,719.8 1208.9,724.4 1203.6,728.9 1198.3,733.5 1193.1,738.1 1187.8,742.6 1182.5,747.2 1174.1,742.8 1165.6,738.4 1157.1,734.0 1148.7,729.7 1140.2,725.3" fill="#d175d0" stroke="#d175d0"/>
<polygon points="598.0,650.0 605.6,648.4 613.2,646.7 620.8,645.1 628.4,643.5 636.1,641.9 643.7,640.3 657.8,650.7 672.2,660.8 686.7,670.7 701.3,680.5 715.9,690.2 730.6,699.9 723.5,702.2 716.4,704.6 709.3,706.9 702.2,709.2 695.2,711.6 688.1,713.9 672.9,703.6 657.7,693.1 642.5,682.7 627.5,672.1 612.6,661.2" fill="#28b8c8" stroke="#28b8c8"/>
<polygon points="688.1,713.9 695.2,711.6 702.2,709.2 709.3,706.9 716.4,704.6 723.5,702.2 730.6,699.9 745.3,709.5 760.1,719.0 774.9,728.4 789.9,737.7 804.9,746.8 820.0,755.8 813.5,758.8 807.0,761.8 800.5,764.7 794.0,767.7 787.5,770.7 781.0,773.7 765.3,764.0 749.7,754.3 734.1,744.4 718.7,734.4 703.4,724.2" fill="#20b0c8" stroke="#20b0c8"/>
<polygon points="781.0,773.7 787.5,770.7 794.0,767.7 800.5,764.7 807.0,761.8 813.5,758.8 820.0,755.8 833.6,763.9 847.2,772.0 860.9,780.0 874.6,787.9 888.3,795.8 902.0,803.7 896.1,807.1 890.2,810.6 884.3,814.0 878.3,817.5 872.4,821.0 866.5,824.4 852.2,816.1 837.9,807.7 823.6,799.3 809.4,790.8 795.2,782.3" fill="#18a0d0" stroke="#18a0d0"/>
<polygon points="866.5,824.4 872.4,821.0 878.3,817.5 884.3,814.0 890.2,810.6 896.1,807.1 902.0,803.7 915.0,811.0 928.1,818.3 941.1,825.6 954.3,832.7 967.4,839.8 980.6,846.8 975.3,850.7 969.9,854.6 964.6,858.4 959.3,862.3 953.9,866.2 948.6,870.1 934.8,862.7 921.0,855.2 907.3,847.6 893.7,840.0 880.1,832.2" fill="#3090d8" stroke="#3090d8"/>
<polygon points="948.6,870.1 953.9,866.2 959.3,862.3 964.6,858.4 969.9,854.6 975.3,850.7 980.6,846.8 989.2,851.3 997.8,855.8 1006.3,860.3 1014.9,864.8 1023.5,869.2 1032.1,873.7 1027.1,877.8 1022.2,881.9 1017.2,886.0 1012.3,890.1 1007.3,894.3 1002.4,898.4 993.4,893.7 984.4,889.0 975.4,884.3 966.5,879.6 957.5,874.8" fill="#5878d8" stroke="#5878d8"/>
<polygon points="1002.4,898.4 1008.0,893.7 1013.7,889.0 1019.3,884.3 1025.0,879.6 1030.7,874.9 1036.3,870.2 1047.2,875.8 1058.1,881.4 1069.0,886.9 1079.8,892.5 1090.7,898.1 1101.6,903.8 1096.5,908.8 1091.4,913.8 1086.3,918.9 1081.2,923.9 1076.1,929.0 1071.0,934.0 1059.6,928.0 1048.1,922.1 1036.7,916.2 1025.2,910.2 1013.8,904.3" fill="#7064d8" stroke="#7064d8"/>
<polygon points="1036.3,870.2 1042.0,865.5 1047.7,860.7 1053.3,856.0 1059.0,851.3 1064.6,846.6 1070.3,841.9 1080.6,847.2 1090.9,852.5 1101.2,857.7 1111.5,863.0 1121.8,868.2 1132.1,873.5 1127.0,878.6 1121.9,883.6 1116.8,888.6 1111.7,893.7 1106.7,898.7 1101.6,903.8 1090.7,898.1 1079.8,892.5 1069.0,886.9 1058.1,881.4 1047.2,875.8" fill="#9c68d8" stroke="#9c68d8"/>
<polygon points="1070.3,841.9 1094.4,821.9 1118.4,801.8 1142.4,781.5 1166.3,761.0 1190.3,740.5 1214.1,719.8 1222.1,724.0 1230.1,728.2 1238.1,732.4 1246.0,736.6 1254.0,740.8 1262.0,745.0 1240.4,766.4 1218.7,787.8 1197.1,809.3 1175.4,830.7 1153.8,852.1 1132.1,873.5 1121.8,868.2 1111.5,863.0 1101.2,857.7 1090.9,852.5 1080.6,847.2" fill="#d068d0" stroke="#d068d0"/>
<polygon points="1039.8,722.4 1052.1,714.5 1064.3,706.6 1076.5,698.6 1088.7,690.6 1099.6,696.3 1110.6,702.1 1121.5,707.8 1132.5,713.5 1121.1,722.0 1109.7,730.4 1098.2,738.8 1086.8,747.1 1075.1,741.0 1063.3,734.8 1051.6,728.6" fill="#c783d0"/>
<polygon points="1043.3,715.7 1051.9,710.2 1060.4,704.7 1069.0,699.2 1077.5,693.6 1092.5,701.5 1107.5,709.4 1122.5,717.2 1137.5,725.0 1129.7,730.9 1121.9,736.9 1114.2,742.8 1106.4,748.7 1090.6,740.5 1074.8,732.3 1059.0,724.0" fill="#c783d0"/>
<polygon points="1003.2,821.1 1012.8,814.3 1022.3,807.5 1031.8,800.7 1041.4,793.9 1053.8,800.3 1066.3,806.7 1078.8,813.1 1091.3,819.5 1082.5,826.8 1073.6,834.0 1064.8,841.3 1056.0,848.6 1042.8,841.7 1029.6,834.9 1016.4,828.0" fill="#947bd2"/>
<polygon points="996.3,814.1 1003.7,809.0 1011.1,803.8 1018.6,798.7 1026.0,793.5 1042.6,802.2 1059.3,810.8 1076.1,819.4 1092.8,828.0 1086.1,833.6 1079.5,839.2 1072.8,844.8 1066.1,850.4 1048.6,841.4 1031.2,832.4 1013.7,823.3" fill="#947bd2"/>
<polygon points="778.8,610.9 791.7,607.5 804.5,603.9 817.3,600.1 830.0,596.2 839.5,601.9 849.1,607.5 858.8,613.1 868.5,618.6 856.2,623.1 843.8,627.4 831.4,631.6 819.0,635.6 808.8,629.5 798.8,623.4 788.8,617.1" fill="#9dc1c9"/>
<polygon points="787.1,608.1 796.0,605.7 804.9,603.2 813.7,600.7 822.5,598.0 836.7,606.4 850.9,614.8 865.2,623.0 879.6,631.2 871.2,634.4 862.8,637.5 854.4,640.6 845.9,643.6 831.1,634.9 816.4,626.1 801.7,617.2" fill="#9dc1c9"/>
<polygon points="1039.2,797.8 1047.6,791.7 1056.1,785.6 1064.5,779.5 1072.9,773.3 1083.4,778.7 1093.9,784.1 1104.3,789.4 1114.8,794.7 1107.0,801.2 1099.1,807.7 1091.2,814.1 1083.4,820.5 1072.3,814.9 1061.2,809.2 1050.2,803.5" fill="#b379d0"/>
<polygon points="1029.1,788.1 1036.3,783.1 1043.5,778.1 1050.7,773.1 1057.9,768.0 1076.6,777.7 1095.4,787.3 1114.1,796.8 1132.9,806.3 1126.5,811.9 1120.2,817.4 1113.8,822.9 1107.5,828.4 1087.9,818.4 1068.3,808.3 1048.7,798.3" fill="#b379d0"/>
<polygon points="976.0,691.6 990.2,683.9 1004.3,676.0 1018.5,668.2 1032.6,660.3 1044.8,666.8 1057.0,673.3 1069.2,679.7 1081.4,686.2 1068.2,694.7 1055.0,703.1 1041.8,711.5 1028.5,719.8 1015.4,712.8 1002.3,705.8 989.1,698.7" fill="#be94d0"/>
<polygon points="983.2,683.9 991.7,679.2 1000.3,674.5 1008.8,669.9 1017.3,665.2 1035.4,674.8 1053.4,684.4 1071.5,693.9 1089.6,703.5 1081.8,708.7 1074.1,713.9 1066.4,719.1 1058.7,724.2 1039.7,714.2 1020.9,704.2 1002.0,694.0" fill="#be94d0"/>
<polygon points="934.2,787.2 946.0,780.2 957.8,773.2 969.6,766.2 981.4,759.2 994.1,766.1 1006.8,772.9 1019.5,779.7 1032.2,786.4 1021.3,794.1 1010.3,801.6 999.3,809.2 988.3,816.8 974.7,809.5 961.2,802.1 947.7,794.7" fill="#7e8ad1"/>
<polygon points="935.2,777.9 942.5,773.7 949.8,769.5 957.1,765.2 964.4,761.0 983.2,771.3 1002.0,781.5 1020.9,791.5 1039.9,801.4 1033.3,806.2 1026.8,810.9 1020.2,815.7 1013.7,820.4 993.9,810.0 974.3,799.4 954.7,788.7" fill="#7e8ad1"/>
<polygon points="904.4,727.2 915.5,721.8 926.7,716.4 937.8,711.0 948.9,705.4 962.9,713.1 976.9,720.7 991.0,728.3 1005.0,735.9 994.7,742.1 984.4,748.2 974.0,754.3 963.6,760.3 948.8,752.1 934.0,743.9 919.2,735.6" fill="#8a98d0"/>
<polygon points="905.9,723.9 915.0,719.5 924.1,715.1 933.2,710.7 942.3,706.2 960.7,716.3 979.2,726.4 997.7,736.4 1016.2,746.4 1008.0,751.5 999.7,756.7 991.4,761.7 983.1,766.8 963.7,756.2 944.4,745.5 925.1,734.7" fill="#8a98d0"/>
<polygon points="1066.5,845.6 1103.6,814.6 1140.7,783.4 1177.6,751.8 1214.4,720.0 1225.5,725.8 1236.6,731.6 1247.6,737.4 1258.7,743.3 1225.1,776.2 1191.4,809.2 1157.7,842.1 1124.1,875.0 1109.7,867.6 1095.3,860.3 1080.9,852.9" fill="#d068d0"/>
<polygon points="1071.9,840.6 1107.4,810.9 1142.9,781.0 1178.3,750.7 1213.7,720.2 1225.6,726.5 1237.6,732.8 1249.6,739.1 1261.6,745.4 1229.6,777.1 1197.6,808.7 1165.6,840.4 1133.6,872.1 1118.1,864.2 1102.7,856.3 1087.3,848.5" fill="#d068d0"/>
<polygon points="870.8,624.9 883.4,620.1 895.9,615.2 908.5,610.3 921.0,605.4 931.8,611.3 942.6,617.1 953.4,623.0 964.2,628.9 952.2,634.4 940.2,639.8 928.2,645.3 916.1,650.7 904.8,644.3 893.4,637.8 882.1,631.4" fill="#b6b6cb"/>
<polygon points="865.6,620.2 876.2,616.2 886.7,612.2 897.3,608.2 907.9,604.2 924.2,613.2 940.6,622.2 957.0,631.1 973.4,640.0 963.5,644.7 953.6,649.4 943.8,654.1 933.9,658.8 916.7,649.2 899.7,639.6 882.6,629.9" fill="#b6b6cb"/>
<polygon points="876.7,584.0 888.5,579.9 900.3,575.6 912.0,571.3 923.7,567.0 931.2,570.9 938.7,574.9 946.2,578.8 953.7,582.8 942.3,587.5 930.9,592.2 919.5,596.8 908.0,601.4 900.1,597.0 892.3,592.7 884.5,588.4" fill="#c7c7cc"/>
<polygon points="876.5,580.6 886.6,577.1 896.6,573.5 906.7,569.8 916.7,566.2 927.9,572.1 939.1,578.0 950.3,583.9 961.5,589.8 951.8,594.0 942.2,598.1 932.5,602.2 922.8,606.2 911.2,599.8 899.6,593.4 888.0,587.0" fill="#c7c7cc"/>
<polygon points="703.9,682.5 716.2,678.9 728.6,675.3 740.9,671.6 753.2,668.0 764.1,674.9 775.0,681.9 786.0,688.8 797.0,695.7 785.1,699.9 773.3,704.2 761.4,708.4 749.6,712.6 738.1,705.2 726.7,697.6 715.3,690.1" fill="#4db4cb"/>
<polygon points="684.2,667.3 693.6,664.8 703.0,662.3 712.5,659.8 721.9,657.3 740.9,669.6 759.9,681.8 778.9,693.9 798.1,705.9 789.3,709.2 780.5,712.5 771.7,715.8 762.8,719.1 743.0,706.3 723.4,693.4 703.8,680.4" fill="#4db4cb"/>
<polygon points="869.1,825.9 878.7,820.2 888.4,814.5 898.0,808.9 907.7,803.2 925.8,813.4 944.0,823.5 962.2,833.4 980.6,843.2 971.8,849.5 963.0,855.8 954.3,862.1 945.5,868.4 926.3,858.1 907.1,847.5 888.1,836.8" fill="#3090d8"/>
<polygon points="867.0,823.4 875.1,818.6 883.2,813.9 891.3,809.2 899.4,804.4 920.8,816.5 942.2,828.4 963.8,840.1 985.4,851.6 978.2,856.9 970.9,862.3 963.7,867.6 956.4,873.0 933.9,860.9 911.5,848.6 889.2,836.1" fill="#3090d8"/>
<polygon points="969.7,635.9 980.6,630.5 991.6,625.1 1002.5,619.7 1013.4,614.2 1026.0,620.8 1038.5,627.4 1051.1,634.0 1063.6,640.6 1053.3,646.5 1043.1,652.5 1032.8,658.4 1022.5,664.2 1009.3,657.2 996.0,650.1 982.8,643.0" fill="#cba8cf"/>
<polygon points="964.7,627.3 974.0,622.9 983.3,618.4 992.6,613.9 1001.9,609.3 1018.7,618.2 1035.6,627.1 1052.4,635.9 1069.2,644.8 1060.6,649.8 1052.1,654.9 1043.5,659.9 1034.9,664.9 1017.3,655.5 999.8,646.2 982.2,636.7" fill="#cba8cf"/>
<polygon points="757.9,721.1 769.9,716.7 781.8,712.2 793.8,707.7 805.7,703.3 821.4,712.9 837.3,722.4 853.2,731.7 869.1,741.0 858.0,746.3 846.8,751.5 835.6,756.7 824.4,761.9 807.7,751.9 791.0,741.8 774.4,731.6" fill="#4aa9cd"/>
<polygon points="750.0,706.8 758.9,703.7 767.8,700.6 776.6,697.5 785.5,694.4 806.5,707.5 827.6,720.3 848.9,732.9 870.3,745.3 862.2,749.2 854.0,753.1 845.9,757.0 837.7,760.8 815.6,747.7 793.6,734.3 771.7,720.7" fill="#4aa9cd"/>
<polygon points="878.5,671.8 890.6,666.9 902.6,661.8 914.6,656.6 926.6,651.2 941.2,659.4 955.9,667.5 970.7,675.5 985.4,683.5 974.3,689.5 963.1,695.4 951.8,701.2 940.6,706.9 925.0,698.2 909.5,689.5 894.0,680.7" fill="#a1a7cd"/>
<polygon points="871.7,662.5 880.8,658.9 889.8,655.2 898.9,651.4 907.9,647.6 929.1,659.6 950.5,671.4 971.9,683.1 993.4,694.7 985.2,699.2 977.0,703.7 968.8,708.2 960.6,712.5 938.3,700.2 916.0,687.8 893.7,675.2" fill="#a1a7cd"/>
<polygon points="740.0,665.1 752.6,661.5 765.1,657.9 777.6,654.2 790.1,650.5 802.2,657.9 814.2,665.3 826.3,672.7 838.5,680.0 826.5,684.4 814.5,688.7 802.6,693.0 790.6,697.3 777.9,689.3 765.3,681.3 752.6,673.2" fill="#69b4cb"/>
<polygon points="733.4,658.3 742.4,655.9 751.3,653.4 760.2,651.0 769.1,648.5 785.8,658.8 802.5,669.2 819.3,679.5 836.1,689.7 827.7,692.9 819.3,696.0 811.0,699.1 802.6,702.3 785.2,691.4 767.9,680.4 750.7,669.4" fill="#69b4cb"/>
<polygon points="696.8,719.8 708.0,716.0 719.2,712.2 730.4,708.3 741.7,704.5 761.3,717.2 781.0,729.6 800.9,741.8 820.9,753.8 810.6,758.6 800.2,763.3 789.8,768.0 779.5,772.7 758.6,759.8 737.8,746.8 717.2,733.4" fill="#20b0c8"/>
<polygon points="685.7,709.1 695.0,706.1 704.2,703.1 713.5,700.2 722.8,697.2 749.3,714.6 776.2,731.6 803.3,748.2 830.5,764.5 822.2,768.5 813.9,772.4 805.6,776.4 797.2,780.4 769.0,763.1 740.9,745.6 713.2,727.6" fill="#20b0c8"/>
<polygon points="1012.4,745.1 1023.2,738.3 1034.0,731.5 1044.7,724.6 1055.5,717.5 1065.4,722.8 1075.3,728.0 1085.2,733.2 1095.1,738.4 1085.0,745.7 1074.9,753.0 1064.7,760.2 1054.6,767.4 1044.0,761.9 1033.4,756.3 1022.9,750.7" fill="#b485d0"/>
<polygon points="1005.1,735.7 1012.0,731.5 1018.9,727.3 1025.7,723.1 1032.6,718.8 1049.4,727.7 1066.3,736.6 1083.2,745.5 1100.2,754.2 1094.0,758.9 1087.8,763.5 1081.6,768.1 1075.4,772.7 1057.7,763.6 1040.2,754.4 1022.6,745.1" fill="#b485d0"/>
<polygon points="1024.6,670.9 1036.1,664.3 1047.6,657.6 1059.0,650.9 1070.4,644.2 1082.2,650.4 1093.9,656.5 1105.7,662.7 1117.5,668.9 1106.8,676.1 1096.1,683.3 1085.4,690.4 1074.7,697.4 1062.2,690.8 1049.6,684.2 1037.1,677.5" fill="#cd94d0"/>
<polygon points="1013.9,657.8 1023.1,652.8 1032.3,647.6 1041.5,642.4 1050.7,637.2 1068.5,646.6 1086.3,656.0 1104.1,665.4 1121.9,674.8 1113.6,680.5 1105.3,686.1 1097.0,691.8 1088.6,697.4 1069.9,687.6 1051.2,677.7 1032.5,667.8" fill="#cd94d0"/>
<polygon points="967.3,842.7 978.0,835.2 988.7,827.6 999.4,820.1 1010.1,812.5 1024.6,820.1 1039.1,827.6 1053.6,835.1 1068.2,842.6 1058.4,850.7 1048.6,858.8 1038.8,867.0 1028.9,875.1 1013.5,867.1 998.1,859.0 982.6,850.9" fill="#757dd5"/>
<polygon points="955.0,832.8 963.2,827.3 971.4,821.7 979.6,816.2 987.8,810.6 1006.6,820.6 1025.5,830.4 1044.4,840.2 1063.4,850.0 1056.0,856.1 1048.7,862.2 1041.4,868.3 1034.1,874.4 1014.3,864.1 994.5,853.8 974.7,843.4" fill="#757dd5"/>
<polygon points="791.4,780.0 803.1,774.4 814.9,768.9 826.6,763.4 838.3,757.8 854.1,767.1 869.9,776.3 885.8,785.5 901.7,794.5 890.8,800.8 879.8,807.0 868.9,813.2 858.0,819.5 841.3,809.7 824.6,799.9 808.0,790.0" fill="#18a0d0"/>
<polygon points="769.8,764.0 778.1,760.4 786.3,756.8 794.6,753.2 802.9,749.6 829.5,765.5 856.3,781.3 883.2,796.9 910.2,812.3 902.9,816.7 895.5,821.1 888.2,825.5 880.9,829.9 853.0,813.8 825.1,797.4 797.4,780.8" fill="#18a0d0"/>
<polygon points="900.5,805.8 911.7,799.2 923.0,792.6 934.2,786.1 945.4,779.5 959.6,787.3 973.9,795.2 988.2,802.9 1002.6,810.6 992.2,817.8 981.9,825.0 971.5,832.2 961.1,839.4 945.9,831.1 930.7,822.8 915.6,814.3" fill="#5d8cd3"/>
<polygon points="903.3,798.0 910.2,794.0 917.0,790.0 923.9,786.1 930.7,782.1 950.3,792.9 969.8,803.7 989.5,814.3 1009.3,824.7 1003.1,829.2 996.9,833.7 990.7,838.1 984.6,842.6 964.1,831.7 943.7,820.6 923.5,809.4" fill="#5d8cd3"/>
<polygon points="730.0,622.0 742.7,619.1 755.4,616.2 768.1,613.2 780.7,610.0 791.5,616.9 802.5,623.7 813.5,630.3 824.5,636.9 812.4,640.7 800.2,644.4 788.0,648.0 775.8,651.5 764.2,644.3 752.7,637.0 741.4,629.5" fill="#86bfc9"/>
<polygon points="737.3,620.1 746.4,618.1 755.5,616.0 764.6,613.8 773.7,611.6 788.1,620.7 802.7,629.7 817.3,638.5 832.0,647.3 823.4,650.1 814.8,652.9 806.1,655.6 797.5,658.4 782.3,649.0 767.2,639.6 752.2,629.9" fill="#86bfc9"/>
<polygon points="1081.6,703.5 1092.7,696.0 1103.7,688.5 1114.8,680.9 1125.8,673.3 1134.5,677.9 1143.2,682.5 1151.8,687.0 1160.5,691.6 1150.1,699.5 1139.6,707.3 1129.1,715.1 1118.7,722.9 1109.4,718.0 1100.1,713.2 1090.8,708.3" fill="#d083d0"/>
<polygon points="1077.9,689.5 1086.3,684.0 1094.6,678.5 1103.0,673.0 1111.4,667.4 1127.5,675.9 1143.6,684.4 1159.7,692.9 1175.8,701.3 1168.3,707.3 1160.7,713.2 1153.2,719.1 1145.7,725.0 1128.7,716.2 1111.7,707.3 1094.8,698.4" fill="#d083d0"/>
<polygon points="601.6,652.7 613.6,650.1 625.5,647.5 637.5,645.0 649.4,642.4 668.7,656.4 688.4,669.8 708.2,683.0 728.1,696.2 716.9,699.8 705.7,703.4 694.5,707.0 683.3,710.7 662.6,696.5 642.0,682.3 621.6,667.9" fill="#28b8c8"/>
<polygon points="599.4,649.7 609.4,647.6 619.5,645.4 629.5,643.3 639.6,641.2 664.0,659.0 689.1,676.0 714.3,692.9 739.6,709.5 730.3,712.8 721.1,716.0 711.8,719.2 702.6,722.4 676.4,704.7 650.4,686.8 624.6,668.7" fill="#28b8c8"/>
<polygon points="647.1,644.8 659.3,642.1 671.5,639.4 683.7,636.7 695.8,634.0 706.1,641.2 716.5,648.3 727.0,655.2 737.6,662.0 725.8,665.3 714.1,668.6 702.3,671.9 690.5,675.1 679.5,667.8 668.6,660.3 657.8,652.6" fill="#4fbcc9"/>
<polygon points="650.0,639.0 659.0,637.1 667.9,635.2 676.8,633.3 685.8,631.4 701.2,642.2 716.7,652.7 732.5,663.0 748.3,673.2 739.8,675.7 731.4,678.3 722.9,680.8 714.4,683.3 698.1,672.5 681.8,661.7 665.8,650.5" fill="#4fbcc9"/>
<polygon points="871.8,747.7 883.7,741.9 895.5,736.2 907.4,730.4 919.3,724.6 933.4,732.5 947.5,740.4 961.6,748.1 975.7,755.9 964.7,762.4 953.6,768.8 942.5,775.3 931.5,781.7 916.5,773.3 901.6,764.8 886.7,756.3" fill="#689ad0"/>
<polygon points="860.4,732.7 868.6,729.0 876.9,725.2 885.2,721.5 893.4,717.7 913.7,729.2 934.1,740.6 954.5,752.0 975.0,763.2 967.5,767.7 960.0,772.1 952.6,776.5 945.1,781.0 923.8,769.1 902.6,757.1 881.4,744.9" fill="#689ad0"/>
<polygon points="937.0,710.3 949.0,704.3 960.9,698.2 972.8,691.9 984.7,685.5 998.7,693.1 1012.7,700.6 1026.7,708.1 1040.8,715.6 1029.7,722.6 1018.7,729.4 1007.6,736.2 996.5,742.9 981.6,734.8 966.7,726.7 951.8,718.5" fill="#a596d0"/>
<polygon points="943.4,699.5 951.3,695.5 959.1,691.6 966.9,687.5 974.7,683.4 993.6,693.6 1012.5,703.8 1031.4,713.9 1050.4,723.9 1043.3,728.6 1036.2,733.1 1029.1,737.7 1022.1,742.2 1002.3,731.6 982.7,721.0 963.0,710.2" fill="#a596d0"/>
<polygon points="970.9,763.3 981.5,757.0 992.1,750.7 1002.7,744.4 1013.2,737.9 1026.1,744.8 1039.1,751.7 1052.0,758.5 1065.0,765.3 1055.2,772.2 1045.4,779.1 1035.6,786.0 1025.8,792.8 1012.0,785.5 998.3,778.2 984.6,770.8" fill="#9f87d0"/>
<polygon points="974.0,757.7 981.4,753.4 988.7,749.0 996.1,744.7 1003.4,740.2 1018.4,748.3 1033.4,756.3 1048.5,764.2 1063.6,772.1 1056.9,776.9 1050.1,781.7 1043.4,786.5 1036.7,791.3 1020.9,783.0 1005.2,774.6 989.6,766.2" fill="#9f87d0"/>
<polygon points="1133.4,729.0 1143.3,721.3 1153.3,713.7 1163.2,705.9 1173.1,698.2 1182.0,702.9 1190.8,707.5 1199.7,712.2 1208.5,716.9 1199.3,724.8 1190.0,732.7 1180.7,740.7 1171.3,748.5 1161.9,743.7 1152.4,738.8 1142.9,733.9" fill="#d175d0"/>
<polygon points="1120.4,714.3 1127.9,708.8 1135.4,703.3 1142.8,697.7 1150.3,692.2 1167.7,701.3 1185.1,710.4 1202.4,719.6 1219.8,728.7 1213.2,734.5 1206.6,740.4 1200.0,746.3 1193.4,752.1 1175.1,742.7 1156.9,733.3 1138.6,723.8" fill="#d175d0"/>
<polygon points="1064.3,778.7 1075.4,770.6 1086.5,762.4 1097.6,754.1 1108.7,745.7 1119.1,751.1 1129.5,756.4 1139.9,761.8 1150.3,767.1 1140.0,775.8 1129.7,784.4 1119.4,793.0 1109.0,801.6 1097.8,795.9 1086.6,790.2 1075.4,784.4" fill="#c177d0"/>
<polygon points="1065.8,767.3 1072.8,762.2 1079.9,757.1 1086.9,752.0 1094.0,746.8 1110.3,755.2 1126.7,763.6 1143.1,772.0 1159.5,780.3 1153.2,785.9 1146.9,791.4 1140.6,796.8 1134.3,802.3 1117.1,793.6 1100.0,784.9 1082.9,776.1" fill="#c177d0"/>
<polygon points="688.3,636.2 701.6,633.2 714.8,630.2 728.0,627.2 741.2,624.2 750.4,630.3 759.6,636.3 768.9,642.2 778.3,648.0 765.5,651.6 752.7,655.2 739.8,658.8 727.0,662.3 717.2,656.0 707.5,649.5 697.9,642.9" fill="#6bbdc9"/>
<polygon points="693.0,629.8 702.1,627.9 711.2,625.9 720.3,623.9 729.4,621.9 742.7,630.8 756.1,639.5 769.6,648.0 783.2,656.5 774.5,659.1 765.9,661.7 757.2,664.2 748.5,666.8 734.4,657.8 720.5,648.7 706.7,639.3" fill="#6bbdc9"/>
<polygon points="1036.2,878.3 1047.0,869.1 1057.9,860.0 1068.7,850.8 1079.6,841.6 1092.5,848.3 1105.5,854.9 1118.5,861.5 1131.5,868.1 1121.6,877.8 1111.6,887.5 1101.7,897.3 1091.8,907.0 1077.9,899.8 1064.0,892.6 1050.1,885.4" fill="#9c68d8"/>
<polygon points="1025.2,858.5 1032.2,852.9 1039.3,847.3 1046.3,841.7 1053.4,836.0 1072.6,845.9 1091.8,855.7 1111.0,865.5 1130.3,875.4 1124.1,881.5 1117.9,887.6 1111.7,893.8 1105.5,899.9 1085.4,889.5 1065.3,879.2 1045.3,868.9" fill="#9c68d8"/>
<polygon points="798.1,708.5 812.5,703.0 826.9,697.5 841.3,692.0 855.7,686.5 869.6,694.6 883.6,702.7 897.6,710.7 911.6,718.6 898.1,725.0 884.6,731.4 871.0,737.7 857.5,744.1 842.6,735.3 827.7,726.5 812.8,717.5" fill="#69a8cd"/>
<polygon points="792.9,697.8 802.4,694.4 811.9,690.9 821.5,687.5 831.0,684.0 851.9,696.5 872.9,708.8 894.0,720.9 915.3,732.9 906.6,737.2 897.9,741.5 889.2,745.8 880.6,750.1 858.5,737.3 836.5,724.3 814.6,711.2" fill="#69a8cd"/>
<polygon points="1094.5,753.4 1106.7,744.3 1118.9,735.1 1131.1,725.9 1143.3,716.7 1154.1,722.3 1164.9,727.9 1175.8,733.5 1186.6,739.2 1175.3,748.8 1164.1,758.4 1152.8,767.9 1141.5,777.5 1129.8,771.5 1118.0,765.5 1106.2,759.5" fill="#cd75d0"/>
<polygon points="1098.9,744.1 1105.9,738.9 1112.9,733.6 1119.9,728.4 1126.9,723.2 1140.6,730.3 1154.3,737.4 1168.1,744.5 1181.8,751.6 1175.5,757.1 1169.1,762.6 1162.7,768.0 1156.4,773.5 1142.0,766.2 1127.6,758.8 1113.2,751.5" fill="#cd75d0"/>
<polygon points="826.1,599.1 839.3,594.9 852.5,590.5 865.7,586.3 878.8,581.9 887.0,586.4 895.2,591.0 903.3,595.5 911.6,600.0 898.8,604.9 886.0,609.6 873.1,614.4 860.3,619.2 851.7,614.2 843.1,609.2 834.6,604.2" fill="#b4c3c9"/>
<polygon points="826.7,596.7 836.7,593.5 846.6,590.3 856.5,587.1 866.4,583.9 877.7,590.4 889.1,596.8 900.6,603.1 912.0,609.4 902.5,613.1 893.0,616.8 883.5,620.5 873.9,624.1 862.1,617.4 850.2,610.6 838.5,603.7" fill="#b4c3c9"/>
<polygon points="773.4,655.3 787.2,651.2 801.1,647.1 814.9,642.9 828.6,638.5 841.8,646.3 854.9,654.0 868.0,661.7 881.2,669.4 868.1,674.6 855.0,679.6 841.9,684.6 828.8,689.5 814.9,681.1 801.0,672.5 787.2,663.9" fill="#86b5cb"/>
<polygon points="780.5,649.5 790.7,646.6 800.9,643.6 811.0,640.5 821.1,637.3 836.1,646.2 851.1,655.1 866.1,663.9 881.1,672.7 871.5,676.5 862.0,680.3 852.4,684.0 842.8,687.6 827.2,678.2 811.6,668.7 796.0,659.1" fill="#86b5cb"/>
<polygon points="1002.9,898.6 1012.7,890.5 1022.5,882.4 1032.3,874.2 1042.1,866.1 1057.5,874.0 1073.0,882.0 1088.5,889.9 1103.9,897.9 1095.1,906.6 1086.2,915.3 1077.4,924.0 1068.5,932.7 1052.1,924.2 1035.7,915.7 1019.3,907.2" fill="#7064d8"/>
<polygon points="993.7,890.3 1000.6,884.7 1007.5,879.1 1014.4,873.5 1021.3,867.9 1040.5,877.8 1059.6,887.7 1078.7,897.5 1097.8,907.4 1091.7,913.5 1085.6,919.5 1079.5,925.6 1073.4,931.6 1053.5,921.3 1033.5,911.0 1013.6,900.6" fill="#7064d8"/>
<polygon points="957.7,874.9 967.2,867.9 976.7,860.8 986.2,853.8 995.7,846.7 1005.9,852.1 1016.1,857.4 1026.3,862.6 1036.5,867.9 1027.5,875.3 1018.6,882.7 1009.6,890.1 1000.7,897.5 989.9,891.9 979.2,886.3 968.5,880.6" fill="#5878d8"/>
<polygon points="940.0,865.1 947.2,860.0 954.5,854.8 961.7,849.7 969.0,844.5 986.1,853.6 1003.3,862.7 1020.6,871.6 1037.8,880.6 1031.3,886.1 1024.7,891.7 1018.2,897.3 1011.6,902.8 993.6,893.5 975.7,884.1 957.8,874.6" fill="#5878d8"/>
<polygon points="824.3,644.6 837.7,640.2 851.0,635.6 864.3,630.7 877.5,625.7 888.3,631.9 899.0,638.0 909.8,644.0 920.6,650.1 907.9,655.7 895.2,661.1 882.4,666.4 869.6,671.5 858.2,664.8 846.9,658.1 835.6,651.4" fill="#9eb5cb"/>
<polygon points="825.7,635.0 835.5,631.8 845.2,628.5 854.9,625.1 864.5,621.6 880.5,630.7 896.4,639.8 912.4,648.9 928.4,657.9 919.4,662.0 910.3,666.1 901.2,670.0 892.1,673.9 875.4,664.3 858.8,654.6 842.3,644.8" fill="#9eb5cb"/>
<polygon points="836.8,690.1 851.0,684.7 865.1,679.3 879.1,673.7 893.2,667.9 906.6,675.6 920.1,683.2 933.6,690.7 947.2,698.2 934.0,704.7 920.8,711.1 907.5,717.4 894.2,723.6 879.8,715.3 865.4,707.0 851.1,698.6" fill="#87a7cd"/>
<polygon points="838.4,684.8 847.5,681.4 856.7,677.9 865.8,674.4 874.9,670.8 894.3,682.0 913.7,693.0 933.2,703.8 952.8,714.6 944.4,718.9 936.1,723.2 927.7,727.4 919.3,731.6 899.0,720.1 878.7,708.5 858.5,696.7" fill="#87a7cd"/>
<polygon points="911.7,613.1 925.7,607.5 939.5,601.7 953.3,595.8 967.1,589.8 977.2,595.1 987.2,600.4 997.2,605.6 1007.3,610.9 994.0,617.4 980.8,623.9 967.5,630.3 954.2,636.5 943.6,630.7 933.0,624.8 922.3,619.0" fill="#c9b9ce"/>
<polygon points="912.2,601.7 922.9,597.4 933.6,593.0 944.3,588.5 955.0,584.1 968.7,591.3 982.3,598.4 995.9,605.6 1009.5,612.8 999.4,617.8 989.3,622.8 979.2,627.8 969.1,632.7 954.8,624.9 940.6,617.2 926.4,609.4" fill="#c9b9ce"/>
<polygon points="826.4,767.0 839.1,760.9 851.8,754.9 864.5,748.8 877.2,742.8 891.8,751.2 906.5,759.5 921.1,767.8 935.9,776.1 924.0,782.9 912.2,789.6 900.4,796.4 888.5,803.2 872.9,794.2 857.4,785.2 841.9,776.1" fill="#479dd0"/>
<polygon points="824.7,757.1 833.5,753.1 842.4,749.0 851.2,744.9 860.0,740.8 878.9,751.7 897.8,762.6 916.7,773.3 935.7,784.0 927.6,788.7 919.5,793.4 911.4,798.2 903.4,802.9 883.6,791.6 863.9,780.2 844.3,768.7" fill="#479dd0"/>
<polygon points="914.1,657.4 927.5,651.4 940.8,645.2 954.2,639.1 967.5,632.9 980.1,639.7 992.7,646.5 1005.3,653.2 1017.9,659.9 1005.3,666.7 992.7,673.5 980.2,680.3 967.6,687.0 954.2,679.7 940.8,672.3 927.4,664.9" fill="#baa6ce"/>
<polygon points="922.0,647.4 930.9,643.4 939.8,639.4 948.7,635.3 957.6,631.3 973.8,640.1 990.0,648.8 1006.2,657.5 1022.5,666.2 1014.2,670.8 1006.0,675.3 997.7,679.9 989.5,684.4 972.6,675.3 955.7,666.1 938.8,656.8" fill="#baa6ce"/>
</g>
<polygon points="585.0,285.0 610.0,280.4 635.0,275.8 660.0,271.2 685.0,266.6 710.0,262.0 735.0,257.4 760.0,252.8 785.0,248.2 810.0,243.6 835.0,239.0 840.4,272.5 845.7,306.0 851.2,339.5 857.0,373.0 863.3,406.3 870.2,439.6 877.4,472.7 884.9,505.8 892.5,538.9 900.0,572.0 880.3,579.7 860.6,587.4 840.9,595.0 821.1,602.5 801.2,609.6 781.1,616.1 760.9,622.3 740.6,628.3 720.3,634.1 700.0,640.0 685.2,605.6 670.6,571.2 656.6,536.5 642.9,501.7 630.6,466.4 620.2,430.4 611.0,394.2 602.2,357.8 593.6,321.4" fill="#ffffff" fill-opacity="0.05"/>
<polygon points="835.0,239.0 870.6,252.6 906.1,266.3 941.7,279.7 977.4,292.7 1013.5,304.8 1050.1,315.2 1087.2,324.1 1124.4,332.0 1161.7,339.5 1199.0,347.0 1200.5,385.0 1202.0,423.0 1203.6,460.9 1205.4,498.9 1207.7,536.8 1210.7,574.7 1214.2,612.6 1218.1,650.4 1222.0,688.2 1226.0,726.0 1193.4,710.6 1160.8,695.2 1128.2,679.8 1095.6,664.4 1063.0,649.0 1030.4,633.6 997.8,618.2 965.2,602.8 932.6,587.4 900.0,572.0 892.5,538.9 884.9,505.8 877.4,472.7 870.2,439.6 863.3,406.3 857.0,373.0 851.2,339.5 845.7,306.0 840.4,272.5" fill="#ffffff" fill-opacity="0.03"/>
<polygon points="702,632 768,613 860,586 920,565 1166,702 1080,795" fill="#c8c4c8" fill-opacity="0.40"/>
<polygon points="920,565 1166,702 1128,722 1100,690 1040,680 1035,702 975,700 968,655 900,640 876,598" fill="#847c84" fill-opacity="0.26"/>
<rect x="907" y="215" width="2" height="350" fill="#ffffff" fill-opacity="0.30"/><rect x="907" y="565" width="2" height="290" fill="#ffffff" fill-opacity="0.22"/>
<rect x="907" y="850" width="2" height="63" fill="#c8c8c8"/>
<rect x="552" y="564" width="700" height="2" fill="#ffffff" fill-opacity="0.22"/>
<rect x="1251" y="564" width="5" height="2" fill="#c8c8c8"/>
<rect x="917" y="562" width="4" height="4" fill="#707078"/>
<text x="893" y="201" style="font-family:'Liberation Sans',sans-serif;font-weight:bold;font-size:26px" fill="#ffffff" fill-opacity="0.30">+B*</text>
<text x="513" y="575" style="font-family:'Liberation Sans',sans-serif;font-weight:bold;font-size:26px" fill="#c4c4c4">-A*</text>
<text x="1272" y="575" style="font-family:'Liberation Sans',sans-serif;font-weight:bold;font-size:26px" fill="#c8c8c8">+A*</text>
<text x="893" y="945" style="font-family:'Liberation Sans',sans-serif;font-weight:bold;font-size:26px" fill="#c4c4c4">-B*</text>
<path d="M585 285L618 279M618 279L649 273M649 273L696 265M696 265L709 262M709 262L747 255M747 255L776 250M776 250L798 246M798 246L835 239M593 320L600 338M600 338L611 351M611 351L608 330M608 330L623 321M623 321L656 322M656 322L700 299M700 299L706 305M706 305L770 300M770 300L781 300M781 300L787 289M787 289L800 286M800 286L816 283M816 283L829 288M829 288L842 280M613 403L619 400M619 400L639 383M639 383L655 383M655 383L677 357M677 357L687 363M687 363L712 378M712 378L739 358M739 358L746 347M746 347L762 358M762 358L770 361M770 361L780 358M780 358L781 347M781 347L807 343M807 343L810 345M810 345L818 352M818 352L834 339M834 339L847 332M847 332L850 334M618 423L633 449M633 449L638 450M638 450L666 445M666 445L679 437M679 437L689 437M689 437L714 421M714 421L729 418M729 418L738 411M738 411L739 397M739 397L752 424M752 424L753 413M753 413L757 398M757 398L764 408M764 408L788 401M788 401L803 392M803 392L823 387M823 387L844 388M844 388L847 390M847 390L853 388M853 388L854 382M854 382L856 367M636 484L646 498M646 498L644 489M644 489L654 481M654 481L660 486M660 486L661 468M661 468L677 478M677 478L680 479M680 479L680 470M680 470L692 464M692 464L706 490M706 490L703 476M703 476L720 461M720 461L763 465M763 465L777 468M777 468L779 438M779 438L790 435M790 435L809 434M809 434L824 451M824 451L820 432M820 432L829 449M829 449L835 446M835 446L839 440M839 440L866 421M652 525L666 552M666 552L678 554M678 554L707 532M707 532L709 516M709 516L728 537M728 537L731 540M731 540L730 531M730 531L731 523M731 523L745 514M745 514L750 512M750 512L769 501M769 501L787 513M787 513L796 501M796 501L798 492M798 492L817 483M817 483L834 498M834 498L843 481M843 481L849 487M849 487L850 481M850 481L867 495M867 495L873 493M873 493L869 463M869 463L876 468M680 594L701 598M701 598L712 577M712 577L721 573M721 573L721 571M721 571L734 590M734 590L749 576M749 576L757 587M757 587L758 584M758 584L777 550M777 550L818 552M818 552L817 536M817 536L825 531M825 531L832 529M832 529L845 554M845 554L856 547M856 547L865 545M865 545L867 527M867 527L875 534M875 534L887 536M887 536L885 522M885 522L890 527M700 640L704 639M704 639L718 635M718 635L721 634M721 634L726 632M726 632L748 626M748 626L757 624M757 624L760 623M760 623L794 612M794 612L815 605M815 605L835 597M835 597L857 589M857 589L866 585M866 585L878 581M878 581L885 578M885 578L900 572M585 285L593 320M585 285L600 338M585 285L611 351M585 285L608 330M585 285L623 321M618 279L623 321M618 279L656 322M649 273L656 322M649 273L700 299M696 265L700 299M696 265L706 305M709 262L706 305M747 255L706 305M747 255L770 300M747 255L781 300M776 250L781 300M776 250L787 289M776 250L800 286M798 246L800 286M798 246L816 283M798 246L829 288M835 239L829 288M835 239L842 280M593 320L613 403M600 338L613 403M600 338L619 400M611 351L619 400M608 330L619 400M623 321L619 400M623 321L639 383M623 321L655 383M656 322L655 383M656 322L677 357M656 322L687 363M656 322L712 378M700 299L712 378M706 305L712 378M706 305L739 358M706 305L746 347M706 305L762 358M706 305L770 361M706 305L780 358M770 300L780 358M770 300L781 347M781 300L781 347M787 289L781 347M787 289L807 343M800 286L807 343M800 286L810 345M800 286L818 352M816 283L818 352M816 283L834 339M829 288L834 339M829 288L847 332M842 280L847 332M842 280L850 334M613 403L618 423M619 400L618 423M619 400L633 449M619 400L638 450M639 383L638 450M639 383L666 445M655 383L666 445M655 383L679 437M655 383L689 437M677 357L689 437M687 363L689 437M687 363L714 421M712 378L714 421M712 378L729 418M712 378L738 411M712 378L739 397M712 378L752 424M739 358L752 424M739 358L753 413M746 347L753 413M746 347L757 398M746 347L764 408M762 358L764 408M770 361L764 408M770 361L788 401M780 358L788 401M781 347L788 401M781 347L803 392M807 343L803 392M810 345L803 392M810 345L823 387M818 352L823 387M834 339L823 387M834 339L844 388M834 339L847 390M834 339L853 388M834 339L854 382M847 332L854 382M850 334L854 382M850 334L856 367M618 423L636 484M618 423L646 498M618 423L644 489M633 449L644 489M638 450L644 489M638 450L654 481M638 450L660 486M638 450L661 468M666 445L661 468M666 445L677 478M666 445L680 479M666 445L680 470M679 437L680 470M679 437L692 464M689 437L692 464M689 437L706 490M689 437L703 476M689 437L720 461M714 421L720 461M729 418L720 461M738 411L720 461M739 397L720 461M739 397L763 465M752 424L763 465M753 413L763 465M757 398L763 465M757 398L777 468M764 408L777 468M764 408L779 438M764 408L790 435M788 401L790 435M788 401L809 434M803 392L809 434M803 392L824 451M803 392L820 432M803 392L829 449M803 392L835 446M823 387L835 446M823 387L839 440M844 388L839 440M847 390L839 440M853 388L839 440M854 382L839 440M856 367L839 440M856 367L866 421M636 484L652 525M636 484L666 552M646 498L666 552M644 489L666 552M644 489L678 554M654 481L678 554M660 486L678 554M661 468L678 554M677 478L678 554M680 479L678 554M680 470L678 554M680 470L707 532M680 470L709 516M692 464L709 516M706 490L709 516M703 476L709 516M703 476L728 537M703 476L731 540M703 476L730 531M703 476L731 523M720 461L731 523M720 461L745 514M720 461L750 512M720 461L769 501M763 465L769 501M763 465L787 513M777 468L787 513M777 468L796 501M779 438L796 501M779 438L798 492M790 435L798 492M790 435L817 483M809 434L817 483M809 434L834 498M824 451L834 498M820 432L834 498M829 449L834 498M829 449L843 481M835 446L843 481M835 446L849 487M839 440L849 487M839 440L850 481M839 440L867 495M839 440L873 493M839 440L869 463M866 421L869 463M866 421L876 468M652 525L680 594M666 552L680 594M678 554L680 594M678 554L701 598M678 554L712 577M678 554L721 573M678 554L721 571M707 532L721 571M707 532L734 590M709 516L734 590M728 537L734 590M731 540L734 590M730 531L734 590M730 531L749 576M731 523L749 576M731 523L757 587M731 523L758 584M745 514L758 584M750 512L758 584M750 512L777 550M769 501L777 550M787 513L777 550M796 501L777 550M798 492L777 550M798 492L818 552M798 492L817 536M798 492L825 531M817 483L825 531M817 483L832 529M817 483L845 554M834 498L845 554M834 498L856 547M843 481L856 547M849 487L856 547M849 487L865 545M850 481L865 545M850 481L867 527M850 481L875 534M867 495L875 534M873 493L875 534M869 463L875 534M869 463L887 536M869 463L885 522M876 468L885 522M876 468L890 527M680 594L700 640M680 594L704 639M701 598L704 639M701 598L718 635M701 598L721 634M701 598L726 632M712 577L726 632M721 573L726 632M721 571L726 632M721 571L748 626M734 590L748 626M734 590L757 624M734 590L760 623M749 576L760 623M757 587L760 623M758 584L760 623M758 584L794 612M777 550L794 612M777 550L815 605M818 552L815 605M818 552L835 597M817 536L835 597M825 531L835 597M832 529L835 597M845 554L835 597M845 554L857 589M845 554L866 585M856 547L866 585M865 545L866 585M865 545L878 581M867 527L878 581M875 534L878 581M875 534L885 578M887 536L885 578M885 522L885 578M890 527L885 578M890 527L900 572" fill="none" stroke="#b4a8bc" stroke-width="1.1" stroke-opacity="0.85"/>
<path d="M835 239L855 247M855 247L865 251M865 251L945 281M945 281L1052 316M1052 316L1053 316M1053 316L1076 321M1076 321L1101 327M1101 327L1138 335M1138 335L1180 343M1180 343L1183 344M1183 344L1199 347M845 302L850 286M850 286L856 314M856 314L858 311M858 311L893 323M893 323L902 333M902 333L928 338M928 338L939 344M939 344L955 333M955 333L960 359M960 359L980 366M980 366L980 335M980 335L996 364M996 364L1001 364M1001 364L1007 357M1007 357L1024 365M1024 365L1029 365M1029 365L1037 385M1037 385L1041 369M1041 369L1050 385M1050 385L1100 380M1100 380L1163 417M1163 417L1184 423M1184 423L1200 408M1200 408L1201 413M1201 413L1202 429M850 335L874 360M874 360L881 375M881 375L909 364M909 364L917 366M917 366L927 395M927 395L929 379M929 379L933 391M933 391L943 370M943 370L947 384M947 384L958 381M958 381L962 402M962 402L963 380M963 380L1024 437M1024 437L1026 401M1026 401L1032 431M1032 431L1030 403M1030 403L1056 421M1056 421L1071 448M1071 448L1078 424M1078 424L1079 425M1079 425L1098 451M1098 451L1099 439M1099 439L1104 426M1104 426L1108 466M1108 466L1112 433M1112 433L1139 436M1139 436L1159 454M1159 454L1171 469M1171 469L1172 475M1172 475L1172 448M1172 448L1180 460M1180 460L1188 449M1188 449L1204 471M861 396L869 407M869 407L873 401M873 401L883 418M883 418L897 425M897 425L900 433M900 433L908 433M908 433L909 417M909 417L912 424M912 424L918 431M918 431L937 419M937 419L948 425M948 425L970 448M970 448L995 447M995 447L1008 475M1008 475L1014 460M1014 460L1022 458M1022 458L1035 466M1035 466L1037 469M1037 469L1052 474M1052 474L1063 489M1063 489L1070 490M1070 490L1080 487M1080 487L1090 504M1090 504L1104 491M1104 491L1119 524M1119 524L1125 528M1125 528L1127 520M1127 520L1159 518M1159 518L1164 523M1164 523L1174 529M1174 529L1183 510M1183 510L1193 529M1193 529L1202 536M1202 536L1205 522M1205 522L1207 519M872 447L877 449M877 449L878 448M878 448L903 486M903 486L902 478M902 478L913 494M913 494L941 498M941 498L941 474M941 474L972 510M972 510L974 515M974 515L979 516M979 516L998 516M998 516L999 511M999 511L1000 515M1000 515L1009 531M1009 531L1006 511M1006 511L1013 523M1013 523L1026 527M1026 527L1034 548M1034 548L1040 545M1040 545L1052 555M1052 555L1069 558M1069 558L1072 539M1072 539L1079 539M1079 539L1101 558M1101 558L1104 550M1104 550L1129 566M1129 566L1130 576M1130 576L1148 593M1148 593L1159 583M1159 583L1188 604M1188 604L1189 574M1189 574L1207 592M1207 592L1215 622M889 525L909 523M909 523L920 549M920 549L922 542M922 542L925 537M925 537L927 522M927 522L935 537M935 537L960 533M960 533L973 559M973 559L988 577M988 577L1023 567M1023 567L1033 583M1033 583L1040 585M1040 585L1058 591M1058 591L1062 604M1062 604L1069 615M1069 615L1103 622M1103 622L1109 615M1109 615L1116 637M1116 637L1123 616M1123 616L1139 639M1139 639L1185 655M1185 655L1186 660M1186 660L1204 671M1204 671L1214 649M1214 649L1220 668M900 572L904 574M904 574L906 575M906 575L1031 634M1031 634L1051 644M1051 644L1107 670M1107 670L1112 672M1112 672L1117 675M1117 675L1132 682M1132 682L1166 698M1166 698L1188 708M1188 708L1207 717M1207 717L1219 722M1219 722L1226 726M835 239L845 302M835 239L850 286M835 239L856 314M835 239L858 311M855 247L858 311M865 251L858 311M865 251L893 323M865 251L902 333M865 251L928 338M865 251L939 344M945 281L939 344M945 281L955 333M945 281L960 359M945 281L980 366M945 281L980 335M945 281L996 364M945 281L1001 364M945 281L1007 357M945 281L1024 365M945 281L1029 365M945 281L1037 385M945 281L1041 369M945 281L1050 385M1052 316L1050 385M1053 316L1050 385M1076 321L1050 385M1076 321L1100 380M1101 327L1100 380M1138 335L1100 380M1138 335L1163 417M1180 343L1163 417M1180 343L1184 423M1183 344L1184 423M1183 344L1200 408M1183 344L1201 413M1199 347L1201 413M1199 347L1202 429M845 302L850 335M850 286L850 335M856 314L850 335M858 311L850 335M858 311L874 360M858 311L881 375M893 323L881 375M902 333L881 375M902 333L909 364M902 333L917 366M902 333L927 395M902 333L929 379M902 333L933 391M928 338L933 391M928 338L943 370M939 344L943 370M939 344L947 384M939 344L958 381M939 344L962 402M955 333L962 402M955 333L963 380M960 359L963 380M980 366L963 380M980 335L963 380M996 364L963 380M1001 364L963 380M1007 357L963 380M1007 357L1024 437M1007 357L1026 401M1024 365L1026 401M1024 365L1032 431M1024 365L1030 403M1029 365L1030 403M1037 385L1030 403M1041 369L1030 403M1050 385L1030 403M1050 385L1056 421M1050 385L1071 448M1050 385L1078 424M1050 385L1079 425M1050 385L1098 451M1050 385L1099 439M1100 380L1099 439M1100 380L1104 426M1100 380L1108 466M1100 380L1112 433M1100 380L1139 436M1100 380L1159 454M1163 417L1159 454M1163 417L1171 469M1163 417L1172 475M1163 417L1172 448M1163 417L1180 460M1184 423L1180 460M1184 423L1188 449M1200 408L1188 449M1201 413L1188 449M1202 429L1188 449M1202 429L1204 471M850 335L861 396M850 335L869 407M850 335L873 401M850 335L883 418M874 360L883 418M881 375L883 418M881 375L897 425M881 375L900 433M881 375L908 433M881 375L909 417M881 375L912 424M881 375L918 431M909 364L918 431M917 366L918 431M927 395L918 431M929 379L918 431M929 379L937 419M933 391L937 419M933 391L948 425M943 370L948 425M947 384L948 425M958 381L948 425M962 402L948 425M962 402L970 448M963 380L970 448M963 380L995 447M963 380L1008 475M963 380L1014 460M963 380L1022 458M1024 437L1022 458M1026 401L1022 458M1026 401L1035 466M1032 431L1035 466M1032 431L1037 469M1030 403L1037 469M1030 403L1052 474M1030 403L1063 489M1056 421L1063 489M1056 421L1070 490M1071 448L1070 490M1071 448L1080 487M1078 424L1080 487M1079 425L1080 487M1079 425L1090 504M1098 451L1090 504M1098 451L1104 491M1099 439L1104 491M1104 426L1104 491M1108 466L1104 491M1108 466L1119 524M1112 433L1119 524M1112 433L1125 528M1112 433L1127 520M1139 436L1127 520M1139 436L1159 518M1139 436L1164 523M1159 454L1164 523M1159 454L1174 529M1171 469L1174 529M1172 475L1174 529M1172 448L1174 529M1172 448L1183 510M1180 460L1183 510M1188 449L1183 510M1188 449L1193 529M1188 449L1202 536M1188 449L1205 522M1204 471L1205 522M1204 471L1207 519M861 396L872 447M861 396L877 449M869 407L877 449M869 407L878 448M873 401L878 448M883 418L878 448M883 418L903 486M883 418L902 478M897 425L902 478M897 425L913 494M900 433L913 494M908 433L913 494M909 417L913 494M912 424L913 494M918 431L913 494M918 431L941 498M918 431L941 474M937 419L941 474M948 425L941 474M948 425L972 510M948 425L974 515M948 425L979 516M970 448L979 516M970 448L998 516M970 448L999 511M970 448L1000 515M970 448L1009 531M995 447L1009 531M995 447L1006 511M995 447L1013 523M1008 475L1013 523M1014 460L1013 523M1014 460L1026 527M1014 460L1034 548M1022 458L1034 548M1022 458L1040 545M1035 466L1040 545M1037 469L1040 545M1037 469L1052 555M1052 474L1052 555M1052 474L1069 558M1063 489L1069 558M1063 489L1072 539M1070 490L1072 539M1070 490L1079 539M1080 487L1079 539M1090 504L1079 539M1090 504L1101 558M1090 504L1104 550M1104 491L1104 550M1119 524L1104 550M1119 524L1129 566M1119 524L1130 576M1125 528L1130 576M1127 520L1130 576M1127 520L1148 593M1127 520L1159 583M1159 518L1159 583M1164 523L1159 583M1174 529L1159 583M1174 529L1188 604M1183 510L1188 604M1183 510L1189 574M1193 529L1189 574M1202 536L1189 574M1202 536L1207 592M1205 522L1207 592M1207 519L1207 592M1207 519L1215 622M872 447L889 525M877 449L889 525M878 448L889 525M878 448L909 523M903 486L909 523M902 478L909 523M902 478L920 549M902 478L922 542M913 494L922 542M913 494L925 537M913 494L927 522M913 494L935 537M941 498L935 537M941 474L935 537M941 474L960 533M941 474L973 559M972 510L973 559M974 515L973 559M974 515L988 577M979 516L988 577M998 516L988 577M999 511L988 577M1000 515L988 577M1009 531L988 577M1006 511L988 577M1013 523L988 577M1013 523L1023 567M1013 523L1033 583M1026 527L1033 583M1026 527L1040 585M1034 548L1040 585M1040 545L1040 585M1040 545L1058 591M1052 555L1058 591M1052 555L1062 604M1052 555L1069 615M1069 558L1069 615M1072 539L1069 615M1079 539L1069 615M1079 539L1103 622M1079 539L1109 615M1101 558L1109 615M1101 558L1116 637M1104 550L1116 637M1104 550L1123 616M1129 566L1123 616M1130 576L1123 616M1130 576L1139 639M1148 593L1139 639M1159 583L1139 639M1159 583L1185 655M1159 583L1186 660M1188 604L1186 660M1189 574L1186 660M1189 574L1204 671M1207 592L1204 671M1207 592L1214 649M1215 622L1214 649M1215 622L1220 668M889 525L900 572M889 525L904 574M889 525L906 575M909 523L906 575M920 549L906 575M922 542L906 575M925 537L906 575M927 522L906 575M935 537L906 575M960 533L906 575M973 559L906 575M988 577L906 575M988 577L1031 634M1023 567L1031 634M1033 583L1031 634M1040 585L1031 634M1040 585L1051 644M1058 591L1051 644M1062 604L1051 644M1069 615L1051 644M1069 615L1107 670M1103 622L1107 670M1103 622L1112 672M1103 622L1117 675M1109 615L1117 675M1116 637L1117 675M1116 637L1132 682M1123 616L1132 682M1139 639L1132 682M1139 639L1166 698M1139 639L1188 708M1185 655L1188 708M1186 660L1188 708M1186 660L1207 717M1204 671L1207 717M1204 671L1219 722M1214 649L1219 722M1220 668L1219 722M1220 668L1226 726" fill="none" stroke="#f8f0b8" stroke-width="0.8" stroke-opacity="0.55"/>
<path d="M700 640L705 647M705 647L718 669M718 669L768 726M768 726L771 729M771 729L781 737M781 737L820 769M820 769L856 798M856 798L860 801M860 801L886 821M886 821L909 838M909 838L920 845M920 845L999 895M999 895L1002 897M1002 897L1064 932M1064 932L1068 934M737 629L729 646M729 646L739 659M739 659L765 687M765 687L830 721M830 721L852 752M852 752L874 763M874 763L878 776M878 776L901 787M901 787L923 806M923 806L939 818M939 818L947 816M947 816L960 825M960 825L984 829M984 829L983 835M983 835L998 837M998 837L1004 843M1004 843L1024 851M1024 851L1042 871M1042 871L1034 882M1034 882L1054 872M1054 872L1073 880M1073 880L1079 884M1079 884L1098 904M754 624L762 641M762 641L774 639M774 639L768 650M768 650L779 658M779 658L803 674M803 674L827 689M827 689L842 713M842 713L844 718M844 718L876 717M876 717L892 743M892 743L939 757M939 757L962 774M962 774L967 792M967 792L1005 812M1005 812L1009 813M1009 813L1031 822M1031 822L1043 830M1043 830L1055 838M1055 838L1065 842M1065 842L1080 841M1080 841L1076 852M1076 852L1112 873M1112 873L1123 869M1123 869L1118 881M1118 881L1121 881M784 615L787 620M787 620L792 623M792 623L798 623M798 623L804 637M804 637L807 638M807 638L875 680M875 680L883 705M883 705L907 706M907 706L933 718M933 718L938 734M938 734L941 738M941 738L974 742M974 742L972 757M972 757L983 766M983 766L994 765M994 765L1010 766M1010 766L1002 779M1002 779L1010 778M1010 778L1027 787M1027 787L1041 780M1041 780L1043 793M1043 793L1065 792M1065 792L1131 847M1131 847L1141 847M1141 847L1157 846M824 601L844 638M844 638L845 642M845 642L884 645M884 645L886 648M886 648L901 655M901 655L906 672M906 672L921 668M921 668L926 671M926 671L931 692M931 692L944 686M944 686L968 698M968 698L969 703M969 703L968 706M968 706L975 717M975 717L1004 732M1004 732L1041 756M1041 756L1092 788M1092 788L1109 781M1109 781L1104 788M1104 788L1117 779M1117 779L1114 800M1114 800L1149 793M1149 793L1187 817M841 595L843 600M843 600L901 631M901 631L935 643M935 643L939 661M939 661L968 662M968 662L996 673M996 673L1017 687M1017 687L1035 696M1035 696L1037 720M1037 720L1064 717M1064 717L1088 722M1088 722L1101 752M1101 752L1120 755M1120 755L1149 769M1149 769L1168 771M1168 771L1169 775M1169 775L1181 779M1181 779L1194 776M1194 776L1201 802M874 582L889 595M889 595L893 601M893 601L904 605M904 605L915 615M915 615L927 612M927 612L993 642M993 642L991 649M991 649L999 660M999 660L1054 685M1054 685L1110 707M1110 707L1185 736M1185 736L1226 751M1226 751L1238 766M900 572L1014 626M1014 626L1036 636M1036 636L1060 647M1060 647L1101 667M1101 667L1130 680M1130 680L1163 696M1163 696L1226 726M700 640L737 629M705 647L737 629M705 647L729 646M705 647L739 659M718 669L739 659M718 669L765 687M768 726L765 687M771 729L765 687M781 737L765 687M781 737L830 721M820 769L830 721M820 769L852 752M820 769L874 763M820 769L878 776M856 798L878 776M860 801L878 776M860 801L901 787M886 821L901 787M886 821L923 806M909 838L923 806M909 838L939 818M909 838L947 816M920 845L947 816M920 845L960 825M920 845L984 829M920 845L983 835M920 845L998 837M920 845L1004 843M920 845L1024 851M999 895L1024 851M1002 897L1024 851M1002 897L1042 871M1002 897L1034 882M1002 897L1054 872M1002 897L1073 880M1002 897L1079 884M1064 932L1079 884M1068 934L1079 884M1068 934L1098 904M737 629L754 624M729 646L754 624M729 646L762 641M729 646L774 639M739 659L774 639M739 659L768 650M739 659L779 658M765 687L779 658M765 687L803 674M765 687L827 689M765 687L842 713M830 721L842 713M830 721L844 718M830 721L876 717M852 752L876 717M852 752L892 743M874 763L892 743M878 776L892 743M878 776L939 757M901 787L939 757M901 787L962 774M923 806L962 774M923 806L967 792M939 818L967 792M947 816L967 792M960 825L967 792M960 825L1005 812M984 829L1005 812M984 829L1009 813M983 835L1009 813M998 837L1009 813M1004 843L1009 813M1004 843L1031 822M1004 843L1043 830M1024 851L1043 830M1024 851L1055 838M1024 851L1065 842M1042 871L1065 842M1034 882L1065 842M1034 882L1080 841M1034 882L1076 852M1054 872L1076 852M1073 880L1076 852M1079 884L1076 852M1079 884L1112 873M1079 884L1123 869M1079 884L1118 881M1098 904L1118 881M1098 904L1121 881M754 624L784 615M754 624L787 620M754 624L792 623M754 624L798 623M762 641L798 623M774 639L798 623M768 650L798 623M768 650L804 637M768 650L807 638M779 658L807 638M803 674L807 638M827 689L807 638M827 689L875 680M842 713L875 680M844 718L875 680M844 718L883 705M876 717L883 705M876 717L907 706M892 743L907 706M892 743L933 718M892 743L938 734M892 743L941 738M939 757L941 738M939 757L974 742M939 757L972 757M962 774L972 757M962 774L983 766M962 774L994 765M967 792L994 765M967 792L1010 766M967 792L1002 779M967 792L1010 778M967 792L1027 787M967 792L1041 780M1005 812L1041 780M1009 813L1041 780M1009 813L1043 793M1009 813L1065 792M1031 822L1065 792M1043 830L1065 792M1055 838L1065 792M1065 842L1065 792M1080 841L1065 792M1076 852L1065 792M1076 852L1131 847M1112 873L1131 847M1112 873L1141 847M1123 869L1141 847M1118 881L1141 847M1121 881L1141 847M1121 881L1157 846M784 615L824 601M787 620L824 601M792 623L824 601M798 623L824 601M804 637L824 601M807 638L824 601M807 638L844 638M807 638L845 642M807 638L884 645M807 638L886 648M807 638L901 655M875 680L901 655M875 680L906 672M875 680L921 668M875 680L926 671M883 705L926 671M907 706L926 671M907 706L931 692M907 706L944 686M933 718L944 686M933 718L968 698M933 718L969 703M933 718L968 706M938 734L968 706M941 738L968 706M941 738L975 717M974 742L975 717M974 742L1004 732M972 757L1004 732M983 766L1004 732M994 765L1004 732M1010 766L1004 732M1002 779L1004 732M1010 778L1004 732M1010 778L1041 756M1027 787L1041 756M1041 780L1041 756M1043 793L1041 756M1065 792L1041 756M1065 792L1092 788M1065 792L1109 781M1065 792L1104 788M1065 792L1117 779M1065 792L1114 800M1065 792L1149 793M1131 847L1149 793M1141 847L1149 793M1157 846L1149 793M1157 846L1187 817M824 601L841 595M824 601L843 600M844 638L843 600M845 642L843 600M845 642L901 631M884 645L901 631M886 648L901 631M901 655L901 631M901 655L935 643M906 672L935 643M921 668L935 643M921 668L939 661M926 671L939 661M926 671L968 662M931 692L968 662M944 686L968 662M944 686L996 673M968 698L996 673M969 703L996 673M968 706L996 673M968 706L1017 687M975 717L1017 687M975 717L1035 696M1004 732L1035 696M1004 732L1037 720M1004 732L1064 717M1041 756L1064 717M1041 756L1088 722M1041 756L1101 752M1041 756L1120 755M1092 788L1120 755M1109 781L1120 755M1104 788L1120 755M1117 779L1120 755M1114 800L1120 755M1114 800L1149 769M1114 800L1168 771M1149 793L1168 771M1149 793L1169 775M1149 793L1181 779M1149 793L1194 776M1187 817L1194 776M1187 817L1201 802M841 595L874 582M843 600L874 582M843 600L889 595M843 600L893 601M843 600L904 605M843 600L915 615M843 600L927 612M901 631L927 612M935 643L927 612M939 661L927 612M939 661L993 642M968 662L993 642M968 662L991 649M968 662L999 660M996 673L999 660M1017 687L999 660M1035 696L999 660M1035 696L1054 685M1037 720L1054 685M1064 717L1054 685M1088 722L1054 685M1088 722L1110 707M1101 752L1110 707M1120 755L1110 707M1149 769L1110 707M1149 769L1185 736M1168 771L1185 736M1169 775L1185 736M1181 779L1185 736M1194 776L1185 736M1194 776L1226 751M1201 802L1226 751M1201 802L1238 766M874 582L900 572M889 595L900 572M893 601L900 572M904 605L900 572M915 615L900 572M927 612L900 572M993 642L900 572M991 649L900 572M991 649L1014 626M999 660L1014 626M999 660L1036 636M999 660L1060 647M1054 685L1060 647M1054 685L1101 667M1110 707L1101 667M1110 707L1130 680M1110 707L1163 696M1185 736L1163 696M1226 751L1163 696M1238 766L1163 696M1238 766L1226 726" fill="none" stroke="#dcd8dc" stroke-width="0.9" stroke-opacity="0.8"/>
<path d="M1171 990L1074 931M1171 990L1086 920M1171 990L1096 909M1171 990L1108 898M1171 990L1117 888M1171 990L1129 877M1171 990L1135 871M1258 848L1171 836M1258 848L1188 819M1258 848L1200 807M1258 848L1216 792M1258 848L1226 782M1092 913L1186 965M1186 965L1105 901M1105 901L1195 951M1195 951L1119 887M1119 887L1201 941M1201 941L1127 879M1127 879L1211 925M1211 925L1144 862M1144 862L1222 907M1222 907L1148 858M1148 858L1231 892M1231 892L1159 848M1159 848L1239 880M1239 880L1170 837M1170 837L1244 871M1244 871L1187 820M1187 820L1254 855M1254 855L1193 815M1193 815L1255 833M1255 833L1209 798M1209 798L1252 823M1252 823L1221 786M1221 786L1248 805M1248 805L1230 778M1230 778L1245 792M1245 792L1243 765M1171 990L1193 954M1193 954L1215 918M1215 918L1237 883M1237 883L1258 848M1258 848L1250 812M1250 812L1240 774M1068 934L1171 990" fill="none" stroke="#e4e4e4" stroke-width="0.8" stroke-opacity="0.85"/>
</svg>
<!-- window buttons -->
<svg class="abs" style="left:1608px;top:0" width="72" height="26" viewBox="0 0 72 26">
<defs>
<linearGradient id="wb" x1="0" y1="0" x2="1" y2="1"><stop offset="0" stop-color="#5b8ff5"/><stop offset="0.5" stop-color="#2a5fe0"/><stop offset="1" stop-color="#1e4fd0"/></linearGradient>
<linearGradient id="wc" x1="0" y1="0" x2="1" y2="1"><stop offset="0" stop-color="#f0a088"/><stop offset="0.5" stop-color="#d8532c"/><stop offset="1" stop-color="#b83a18"/></linearGradient>
</defs>
<rect x="3.5" y="3.5" width="20" height="19" rx="3" fill="url(#wb)" stroke="#fff" stroke-width="1"/>
<rect x="8" y="16" width="7" height="3" fill="#fff"/>
<rect x="26.5" y="3.5" width="20" height="19" rx="3" fill="url(#wb)" stroke="#fff" stroke-width="1"/>
<path d="M34.5 8.5h7v6h-2 M31.5 11.5h7v6h-7z M31.5 12.5h7" fill="none" stroke="#fff" stroke-width="1.6"/>
<rect x="49.500" y="3.5" width="20" height="19" rx="3" fill="url(#wc)" stroke="#fff" stroke-width="1"/>
<path d="M55 8.5l9 9M64 8.5l-9 9" stroke="#fff" stroke-width="2.2" stroke-linecap="round"/>
</svg>
<!-- throbber -->
<svg class="abs" style="left:1658px;top:28px" width="18" height="18" viewBox="0 0 18 18"><g fill="#b9b6aa"><circle cx="9" cy="2.5" r="1.9"/><circle cx="13.6" cy="4.4" r="1.9"/><circle cx="15.5" cy="9" r="1.9"/><circle cx="13.6" cy="13.6" r="1.9"/><circle cx="9" cy="15.5" r="1.9"/><circle cx="4.4" cy="13.6" r="1.9"/><circle cx="2.5" cy="9" r="1.9"/><circle cx="4.400" cy="4.4" r="1.9"/></g></svg>
<!-- nav toolbar icons -->
<svg class="abs" style="left:0;top:48px" width="366" height="38" viewBox="0 0 366 38">
<defs>
<linearGradient id="ga" x1="0" y1="0" x2="0" y2="1"><stop offset="0" stop-color="#e4e2d8"/><stop offset="1" stop-color="#cfcdbf"/></linearGradient>
<linearGradient id="gr" x1="0" y1="0" x2="0" y2="1"><stop offset="0" stop-color="#5cb4ec"/><stop offset="1" stop-color="#1a78c8"/></linearGradient>
<linearGradient id="gh" x1="0" y1="0" x2="0" y2="1"><stop offset="0" stop-color="#b98a72"/><stop offset="1" stop-color="#8a5a44"/></linearGradient>
<linearGradient id="gb" x1="0" y1="0" x2="0" y2="1"><stop offset="0" stop-color="#6cc4f0"/><stop offset="1" stop-color="#2a90d0"/></linearGradient>
<linearGradient id="gg" x1="0" y1="0" x2="0" y2="1"><stop offset="0" stop-color="#9fdc9a"/><stop offset="1" stop-color="#4aa850"/></linearGradient>
</defs>
<!-- back -->
<path d="M7 19 L18.500 8.500 V14 H28 V24 H18.500 V29.500 Z" fill="url(#ga)" stroke="#c6c4b6" stroke-width="1"/>
<path d="M37 18h6l-3 3.500z" fill="#5a5a56"/>
<!-- forward -->
<path d="M72.500 19 L61 8.500 V14 H51.500 V24 H61 V29.500 Z" fill="url(#ga)" stroke="#c6c4b6" stroke-width="1"/>
<path d="M82 18h6l-3 3.500z" fill="#5a5a56"/>
<!-- reload -->
<path d="M114.050 22.070 A7.500 7.500 0 1 1 110.750 13" fill="none" stroke="#1a70c0" stroke-width="6.600"/>
<path d="M114.050 22.070 A7.500 7.500 0 1 1 110.750 13" fill="none" stroke="url(#gr)" stroke-width="5"/>
<path d="M114.300 7 L117.800 17.200 L106.800 18.800 Z" fill="#2a8ad8" stroke="#1a70c0" stroke-width="0.800" stroke-linejoin="round"/>
<!-- stop -->
<path d="M134.500 8.500 h13 l4.500 6.500 v8 l-4.500 6.500 h-13 l-4.500 -6.500 v-8 z" fill="#dad8ce" stroke="#cbc9bc" stroke-width="1"/>
<path d="M136 14l10 10M146 14l-10 10" stroke="#f4f3ee" stroke-width="3" stroke-linecap="round"/>
<!-- print -->
<rect x="169" y="8.500" width="12" height="9" fill="#fbfbfa" stroke="#c0c0c0" stroke-width="0.8"/>
<rect x="164.500" y="16.500" width="21" height="12" rx="2.500" fill="#dcdee2" stroke="#9aa0aa" stroke-width="1"/>
<rect x="167.500" y="23.500" width="15" height="4.500" fill="#f4f4f4" stroke="#7a808a" stroke-width="0.8"/>
<circle cx="179" cy="20" r="0.800" fill="#555"/><circle cx="182" cy="20" r="0.800" fill="#555"/>
<!-- home -->
<path d="M198 19.500 L209 8.500 L213 12.500 V10 H216 V15.500 L220 19.500 H217.500 V29.500 H200.500 V19.500 Z" fill="url(#gh)" stroke="#7c4e3a" stroke-width="0.8" stroke-linejoin="round"/>
<path d="M202 20 L209 13 L216 20 V28 H202 Z" fill="#ece2d6"/>
<rect x="207" y="21" width="4" height="8" fill="#b4452e"/>
<!-- bookmarks -->
<rect x="233.500" y="8.500" width="19" height="21" rx="1.500" fill="#c9ccd2" stroke="#9499a4" stroke-width="1"/>
<rect x="236.500" y="9" width="14" height="20" fill="#eef0f3"/>
<path d="M239.500 9 h8 v17 l-4 -4 l-4 4 z" fill="url(#gb)" stroke="#2080c0" stroke-width="0.600"/>
<!-- new tab -->
<path d="M267.500 15 l2 -6 h13 l2 6 v13 h-17 z" fill="#f2f3f5" stroke="#a8acb4" stroke-width="1"/>
<rect x="270" y="10.500" width="12" height="4" fill="#cfe0ee"/>
<rect x="267.500" y="25" width="17" height="3.500" fill="#d8dadf"/>
<path d="M280.500 13.500 h4 v4.500 h4.500 v4 h-4.500 v4.500 h-4 v-4.500 h-4.500 v-4 h4.500 z" fill="url(#gg)" stroke="#3a8a44" stroke-width="1"/>
<!-- downloads -->
<rect x="301.500" y="8.500" width="21" height="14" fill="#f7f7f7" stroke="#a8acb4" stroke-width="1"/>
<rect x="304.500" y="11.500" width="15" height="4" fill="#cfe8cc" stroke="#9ab89a" stroke-width="0.600"/>
<path d="M308.500 18.500 h7 v5 h4 l-7.500 7 l-7.500 -7 h4 z" fill="url(#gg)" stroke="#3a8a44" stroke-width="1" stroke-linejoin="round"/>
<!-- history clock -->
<circle cx="346" cy="19" r="10.500" fill="#e6ebf2" stroke="#8e98a8" stroke-width="1.400"/>
<circle cx="346" cy="19" r="8" fill="#f4f7fb" stroke="#c8d0dc" stroke-width="0.800"/>
<path d="M346 12.500 V19 H351" fill="none" stroke="#555c68" stroke-width="1.300"/>
<path d="M346 19 L342.500 24" stroke="#9aa4b4" stroke-width="0.800"/>
</svg>
<!-- URL bar -->
<div class="abs" style="left:366px;top:56px;width:955px;height:22px;background:#fff;border:1px solid #9c9a8e;border-top-color:#7f7d72;box-sizing:border-box;border-radius:2px"></div>
<svg class="abs" style="left:370px;top:59px" width="16" height="16" viewBox="0 0 16 16"><path d="M1 2 L12 1 L15 9 L9 15 L4 11 Z" fill="#e8e8f0"/><path d="M1.500 2.500 L7 2 L8 8 L4 10.500 Z" fill="#3fd84a"/><path d="M7 2 L12 1.500 L13 6 L8 8 Z" fill="#f0d030"/><path d="M13 6 L14.500 9 L9.500 14 L8 8 Z" fill="#e850b0"/><path d="M4 10.500 L8 8 L9.500 14 Z" fill="#4890e8"/></svg>
<span class="abs" style="left:391px;top:61px;white-space:nowrap;font-size:11px">http://back.iccview.de/user/10016/101.wrl</span>
<div class="abs" style="left:1305px;top:57px;width:16px;height:20px;background:linear-gradient(#f8f7f2,#e2dfd2);border-left:1px solid #c4c1b4;box-sizing:border-box"></div>
<svg class="abs" style="left:1309px;top:64px" width="8" height="6"><path d="M0 0.500h8l-4 5z" fill="#4a4a46"/></svg>
<div class="abs" style="left:1323px;top:56px;width:24px;height:22px;background:linear-gradient(#fbfaf6,#e0ddd0);border:1px solid #b4b1a4;box-sizing:border-box;border-radius:3px"></div>
<svg class="abs" style="left:1329px;top:60px" width="13" height="14"><path d="M1.500 1.500 L11.500 7 L1.500 12.500 Z" fill="#58b860" stroke="#2a7a34" stroke-width="1.200" stroke-linejoin="round"/></svg>
<!-- search bar -->
<div class="abs" style="left:1355px;top:56px;width:294px;height:22px;background:#fff;border:1px solid #9c9a8e;border-top-color:#7f7d72;box-sizing:border-box;border-radius:2px"></div>
<div class="abs" style="left:1356px;top:57px;width:30px;height:20px;background:linear-gradient(#f8f7f2,#e4e1d5);border-right:1px solid #c4c1b4;box-sizing:border-box"></div>
<div class="abs" style="left:1359px;top:59px;width:16px;height:16px;background:#fff"></div>
<svg class="abs" style="left:1360px;top:60px" width="14" height="14" viewBox="0 0 14 14"><path d="M7 0.500 L8.700 5 L13.500 5.200 L9.700 8.200 L11 13 L7 10.200 L3 13 L4.300 8.200 L0.500 5.200 L5.300 5 Z" fill="#1a62b4"/></svg>
<svg class="abs" style="left:1377px;top:65px" width="7" height="5"><path d="M0 0h7l-3.500 4z" fill="#222"/></svg>
<span class="abs" style="left:1389px;top:61px;white-space:nowrap;font-size:11px;color:#9a9a94">Ixquick - Deutsch</span>
<div class="abs" style="left:1650px;top:56px;width:24px;height:22px;background:linear-gradient(#fbfaf6,#e0ddd0);border:1px solid #b4b1a4;box-sizing:border-box;border-radius:3px"></div>
<svg class="abs" style="left:1653px;top:58px" width="18" height="18" viewBox="0 0 18 18"><circle cx="7" cy="7" r="4.500" fill="#e4ecf4" stroke="#8c96a4" stroke-width="1.500"/><path d="M10.500 10.500 L15 15" stroke="#8a7a5a" stroke-width="2.600" stroke-linecap="round"/></svg>
<!-- bookmarks bar -->
<svg class="abs" style="left:7px;top:91px" width="14" height="16" viewBox="0 0 14 16"><path d="M1.500 0.500 h7 l4 4 v11 h-11 z" fill="#fdfdfd" stroke="#9a9a9a" stroke-width="1"/><path d="M8.500 0.500 v4 h4" fill="#e8e8e8" stroke="#9a9a9a" stroke-width="1"/></svg>
<span class="abs" style="left:26px;top:94px;white-space:nowrap;letter-spacing:-0.250px">Links anpassen</span>
<svg class="abs" style="left:106px;top:92px" width="13" height="15" viewBox="0 0 13 15"><path d="M1.500 1.500 h10 v12 h-10 z" fill="#fdfdfd" stroke="#9a9a9a" stroke-width="1"/></svg>
<span class="abs" style="left:125px;top:94px;white-space:nowrap;color:#333">Windows</span>
<svg class="abs" style="left:100px;top:84px" width="330" height="28" viewBox="100 84 330 28">
<rect x="175" y="90" width="16" height="4" fill="#2a3a8c"/>
<path d="M150 99.500 L173 103.500 L215 107 L300 108 L385 107.800 L416 106 L414 102 L300 106 Z" fill="#5a2a20" fill-opacity="0.450"/>
<path d="M107.500 92.500 L140 93.400 L175 94.200 L236 93.400 L298 90.200 L340 89 L398 88.800 L412 90.500 L415.500 93.600 L409 95 L417.500 98.200 L411 100 L416 104.500 L382 106 L298 106.100 L250 105.800 L215 105 L194 104.200 L173 101.700 L152 98.600 L131 95.400 Z" fill="#fb0505"/>
</svg>
<!-- tabs -->
<div class="abs" style="left:0;top:139px;width:1680px;height:1px;background:#a8a598"></div>
<div class="abs" style="left:3px;top:116px;width:248px;height:23px;background:linear-gradient(#efece0,#dfdccd);border:1px solid #b0ad9e;border-bottom:none;border-radius:4px 4px 0 0;box-sizing:border-box"></div>
<div class="abs" style="left:253px;top:114px;width:250px;height:26px;background:linear-gradient(#fdfdfb,#f1efe6);border:1px solid #a3a092;border-bottom:none;border-radius:4px 4px 0 0;box-sizing:border-box"></div>
<svg class="abs" style="left:11px;top:119px" width="17" height="17" viewBox="0 0 16 16"><path d="M1 2 L12 1 L15 9 L9 15 L4 11 Z" fill="#f0f0f6"/><path d="M1.500 2.500 L7 2 L8 8 L4 10.500 Z" fill="#3fd84a"/><path d="M7 2 L12 1.500 L13 6 L8 8 Z" fill="#f0d030"/><path d="M13 6 L14.500 9 L9.500 14 L8 8 Z" fill="#e850b0"/><path d="M4 10.500 L8 8 L9.500 14 Z" fill="#4890e8"/></svg>
<span class="abs" style="left:31px;top:121px;white-space:nowrap;font-size:11px;letter-spacing:0px">ICCView - ICC-Farbprofil als 3D-Modell...</span>
<div class="abs" style="left:230px;top:120px;width:14px;height:14px;background:#d9d7cc;border:1px solid #c8c6ba;box-sizing:border-box;border-radius:2px"></div>
<svg class="abs" style="left:233px;top:123px" width="8" height="8"><path d="M1 1l6 6M7 1l-6 6" stroke="#f2f1ea" stroke-width="2"/></svg>
<svg class="abs" style="left:261px;top:119px" width="17" height="17" viewBox="0 0 16 16"><path d="M1 2 L12 1 L15 9 L9 15 L4 11 Z" fill="#f0f0f6"/><path d="M1.500 2.500 L7 2 L8 8 L4 10.500 Z" fill="#3fd84a"/><path d="M7 2 L12 1.500 L13 6 L8 8 Z" fill="#f0d030"/><path d="M13 6 L14.500 9 L9.500 14 L8 8 Z" fill="#e850b0"/><path d="M4 10.500 L8 8 L9.500 14 Z" fill="#4890e8"/></svg>
<span class="abs" style="left:282px;top:121px;white-space:nowrap;font-size:11px;font-weight:bold;font-family:'DejaVu Sans Condensed','DejaVu Sans',sans-serif;letter-spacing:0.220px">101.wrl (x-world/x-vrml-Objekt)</span>
<div class="abs" style="left:480px;top:120px;width:14px;height:14px;background:linear-gradient(#ec6a62,#d02a24);border:1px solid #b8302a;box-sizing:border-box;border-radius:2px"></div>
<svg class="abs" style="left:483px;top:123px" width="8" height="8"><path d="M1 1l6 6M7 1l-6 6" stroke="#fff" stroke-width="2"/></svg>
<div class="abs" style="left:1663px;top:113px;width:17px;height:26px;background:linear-gradient(#f1efe6,#dcd9ca);border-left:1px solid #b5b2a4;box-sizing:border-box"></div>
<svg class="abs" style="left:1668px;top:124px" width="7" height="5"><path d="M0 0h7l-3.500 4z" fill="#222"/></svg>
<!-- text box -->
<div class="abs" style="left:101px;top:232px;width:200px;height:80px;background:#fff;border:3px solid #e50f0f;box-sizing:border-box;box-shadow:0 0 2px #700"></div>
<div class="abs" style="left:108px;top:239px;font-family:'Liberation Sans',sans-serif;font-weight:bold;font-size:16px;line-height:19px;color:#000;white-space:nowrap"><span style="letter-spacing:-0.170px">Erstellt mit match3</span><br>D6 130cd/m²</div>
<!-- sidebar + bottom buttons -->
<svg class="abs" style="left:0;top:140px" width="1680" height="884" viewBox="0 140 1680 884">
<defs>
<linearGradient id="bev" x1="0.15" y1="0.15" x2="0.85" y2="0.85"><stop offset="0" stop-color="#7e7e7e"/><stop offset="1" stop-color="#aaaaaa"/></linearGradient><linearGradient id="bev2" x1="0.15" y1="0.15" x2="0.85" y2="0.85"><stop offset="0" stop-color="#a0a0a0"/><stop offset="1" stop-color="#787878"/></linearGradient>
<radialGradient id="glow" cx="0.5" cy="0.5" r="0.5"><stop offset="0" stop-color="#ffffff"/><stop offset="0.450" stop-color="#d8d8d8"/><stop offset="0.800" stop-color="#a0a0a0"/><stop offset="1" stop-color="#9a9a9a"/></radialGradient>
<g id="bdark"><circle r="14" fill="url(#bev)"/><circle r="12" fill="url(#bev2)"/><circle r="10.300" fill="#141414"/><path d="M-8 -5 A9.400 9.400 0 0 1 5 -8" fill="none" stroke="#8a8a8a" stroke-width="1"/><path d="M8 5 A9.400 9.400 0 0 1 -5 8" fill="none" stroke="#5a5a5a" stroke-width="1"/></g>
<g id="bdim"><circle r="14" fill="url(#bev)"/><circle r="12" fill="url(#bev2)"/><circle r="10.300" fill="#4a4a4a"/><circle r="10.300" fill="none" stroke="#6c6c6c" stroke-width="1"/></g>
<g id="blit"><circle r="14" fill="url(#bev)"/><circle r="12" fill="url(#bev2)"/><circle r="10.300" fill="url(#glow)"/></g>
</defs>
<g font-family="'DejaVu Sans','Liberation Sans',sans-serif" font-weight="bold" font-size="9.500" text-anchor="middle">
<!-- walk -->
<use href="#bdim" x="16" y="382"/><path d="M16 375 C20.500 377 21.500 384 19 387.500 C17.500 389.500 14.500 389.500 13 387.500 C10.500 384 11.500 377 16 375 Z" fill="#787878"/>
<text x="16.500" y="407" fill="#4e4e4e">walk</text>
<!-- fly -->
<use href="#bdim" x="16" y="436"/><path d="M11 432 C12 428.500 20 428.500 21 432 C22 436 18.500 442 16 443 C13.500 442 10 436 11 432 Z" fill="#787878"/>
<text x="16.500" y="461.500" fill="#4e4e4e">fly</text>
<!-- study -->
<use href="#blit" x="16" y="490"/>
<text x="16.500" y="516" fill="#000">study</text><text x="15.500" y="515" fill="#fff">study</text>
<!-- plan -->
<use href="#bdark" x="16" y="577"/><path d="M16 570 l5 5 h-3 v4 h3 l-5 5 l-5 -5 h3 v-4 h-3 z" fill="#9c9c9c"/>
<text x="16.500" y="603" fill="#0c0c0c">plan</text>
<!-- pan -->
<use href="#bdark" x="16" y="631"/><path d="M16 622.500 l3.500 4.500 h-7 z M16 639.500 l3.500 -4.500 h-7 z M7.500 631 l4.500 -3.500 v7 z M24.500 631 l-4.500 -3.500 v7 z" fill="#a8a8a8"/><rect x="13" y="628" width="6" height="6" fill="#2c2c2c" stroke="#777" stroke-width="0.800"/>
<text x="16.500" y="656" fill="#0c0c0c">pan</text>
<!-- turn -->
<use href="#blit" x="16" y="684"/><path d="M16 676 v16 M9 686 h14 M10.500 682 C14 679 18 679 21.500 682" fill="none" stroke="#f4f4f4" stroke-width="1.800"/>
<text x="16.500" y="710" fill="#000">turn</text><text x="15.500" y="709" fill="#fff">turn</text>
<!-- roll -->
<use href="#bdark" x="16" y="738"/><path d="M11 738 A5 5 0 0 1 21 738 M21 738.500 A5 5 0 0 1 12.500 742" fill="none" stroke="#9c9c9c" stroke-width="2"/><circle cx="16" cy="738" r="1.600" fill="#888"/>
<text x="16.500" y="763" fill="#0c0c0c">roll</text>
</g>
<g font-family="'DejaVu Sans','Liberation Sans',sans-serif" font-weight="bold" font-size="9.500">
<!-- goto -->
<use href="#bdark" x="16" y="1006.500"/><circle cx="16" cy="1006.500" r="6.500" fill="none" stroke="#6e6e6e" stroke-width="1.200"/><path d="M16 1001.500 v10 M11 1006.500 h10 M12.500 1003 l7 7 M19.500 1003 l-7 7" stroke="#8a8a8a" stroke-width="1.200"/>
<text x="33" y="1010" fill="#0c0c0c">goto</text>
<!-- align -->
<use href="#bdark" x="428.500" y="1006.500"/><path d="M424 1002 C424 1007.500 433 1007.500 433 1002" fill="none" stroke="#b4b4b4" stroke-width="2.200"/><rect x="423" y="1010" width="11" height="2" fill="#b4b4b4"/>
<text x="446.500" y="1010" fill="#0c0c0c">align</text>
<!-- view -->
<use href="#bdim" x="804.500" y="1006.500"/><circle cx="804.500" cy="1006.500" r="10.300" fill="#6a6a6a"/><path d="M809 1001 v11 l-9 -5.500 z" fill="#8c8c8c"/>
<text x="826" y="1010" fill="#0c0c0c">view</text>
<use href="#bdark" x="869" y="1006.500"/><path d="M865.500 1001 v11 l9 -5.500 z" fill="#9c9c9c"/>
<!-- restore -->
<text x="1180" y="1010" fill="#0c0c0c">restore</text>
<use href="#bdark" x="1236" y="1006.500"/><path d="M1231 1006.500 A5 5 0 1 1 1236 1011.500" fill="none" stroke="#9c9c9c" stroke-width="2.200"/><circle cx="1236" cy="1006.500" r="1.500" fill="#8a8a8a"/><path d="M1228.500 1005 h5 l-2.500 4 z" fill="#9c9c9c"/>
<!-- fit -->
<text x="1635" y="1010" fill="#0c0c0c">fit</text>
<use href="#bdark" x="1663.500" y="1006.500"/><rect x="1658.500" y="1001.500" width="10" height="10" rx="1.500" fill="#8c8c8c"/>
</g>
<!-- logo -->
<rect x="1586" y="954" width="88" height="31" fill="#38388a"/>
<rect x="1596" y="965.500" width="30.500" height="1.200" fill="#fff"/><rect x="1640" y="965.500" width="31.500" height="1.200" fill="#fff"/>
<rect x="1590" y="973.200" width="37" height="1.400" fill="#fff"/><rect x="1640" y="973.200" width="31.500" height="1.400" fill="#fff"/>
<g font-family="'Liberation Sans',sans-serif" fill="#fff" font-weight="bold">
<text x="1587.500" y="974.500" font-size="14.500" font-weight="normal">P</text><text x="1596.500" y="973" font-size="7.600" textLength="30" lengthAdjust="spacingAndGlyphs">ARALLEL</text>
<text x="1627" y="974.500" font-size="14.500" font-weight="normal">G</text><text x="1639.500" y="973" font-size="7.600" textLength="32" lengthAdjust="spacingAndGlyphs">RAPHICS</text>
</g>
</svg>
<!-- status bar right -->
<div class="abs" style="left:1552px;top:1024px;width:128px;height:23px;background:#f1efe3;border-left:1px solid #c9c6b6;box-sizing:border-box"></div>
<div class="abs" style="left:1561px;top:1029px;width:100px;height:14px;background:linear-gradient(#a6e8b4,#5cc083 55%,#3fa468);border:1px solid #2a8a50;border-radius:4px;box-sizing:border-box"></div>
<span class="abs" style="left:1565px;top:1029px;white-space:nowrap;font-size:10.500px;line-height:13px;color:#000;letter-spacing:-0.200px"><b>McAfee</b> SiteAdvisor</span>
<svg class="abs" style="left:1666px;top:1035px" width="7" height="5"><path d="M0 0h7l-3.500 4z" fill="#111"/></svg>

</body></html>
